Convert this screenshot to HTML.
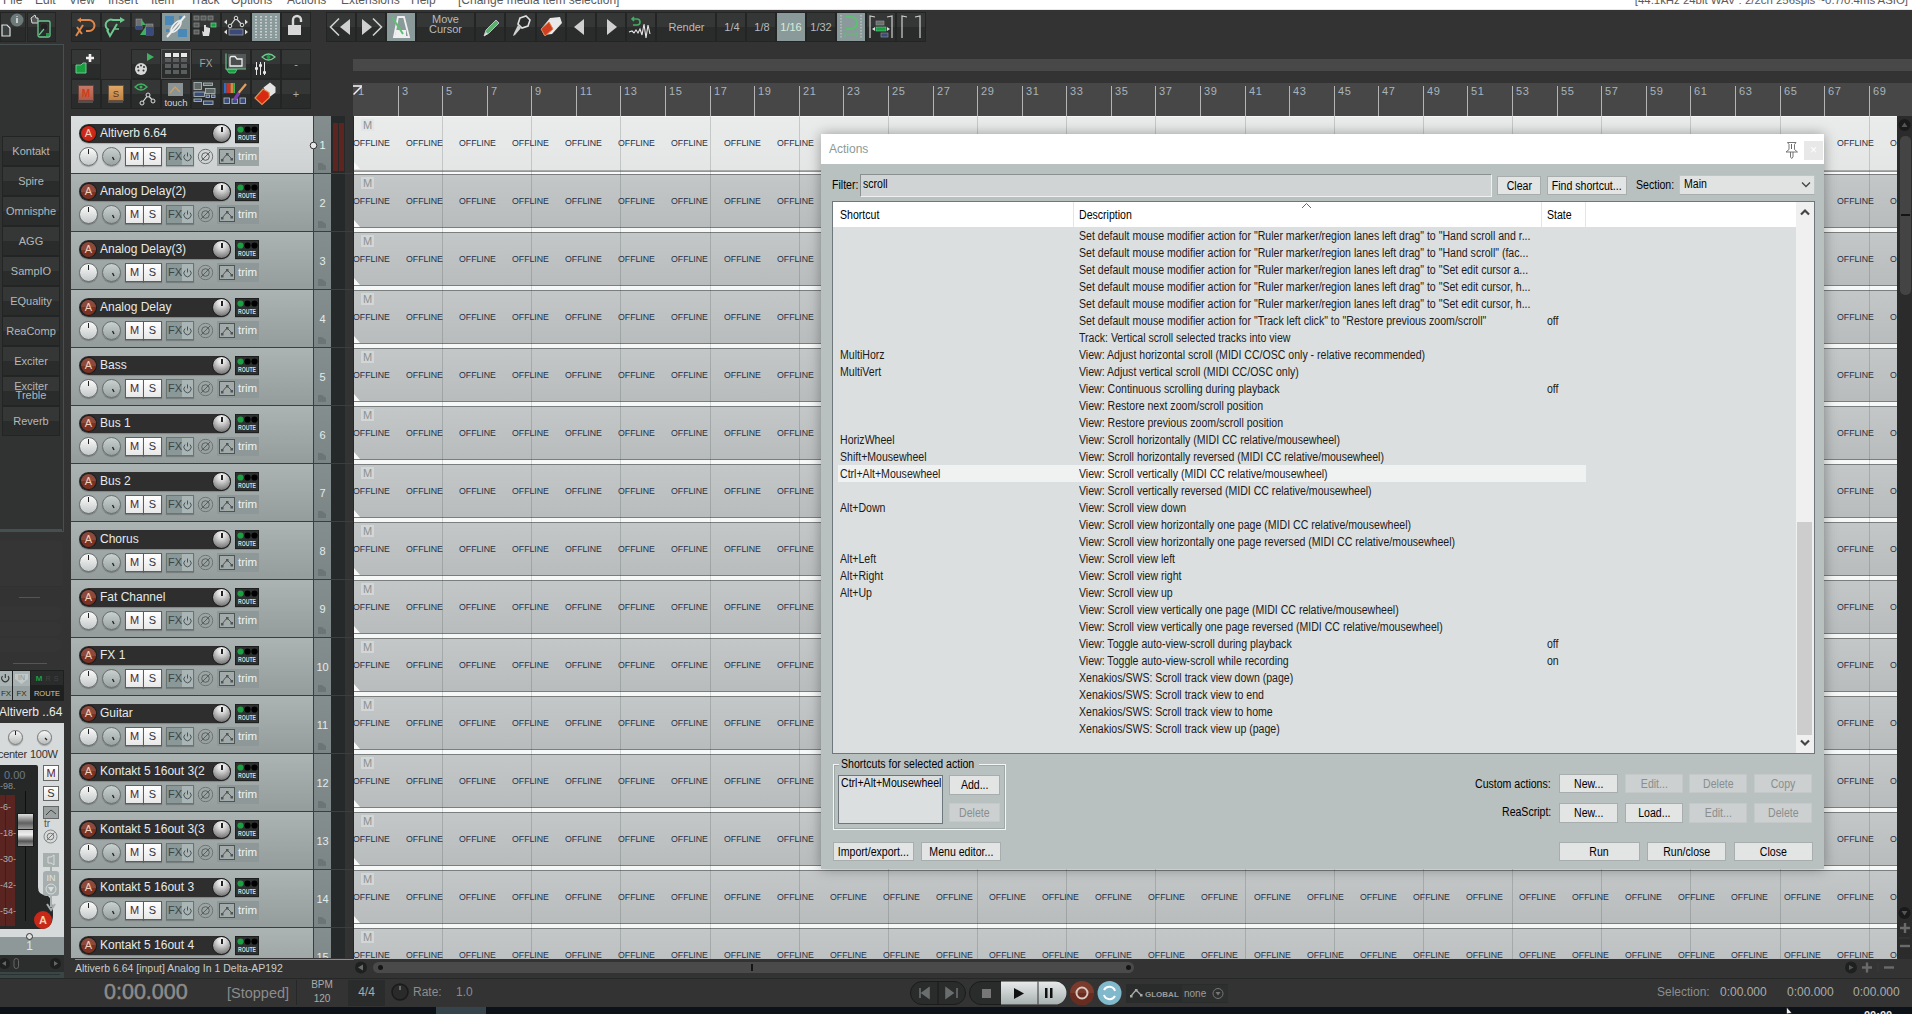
<!DOCTYPE html><html><head><meta charset="utf-8"><style>
*{box-sizing:border-box;margin:0;padding:0}
html,body{width:1912px;height:1014px;overflow:hidden;background:#333;font-family:"Liberation Sans",sans-serif;}
.a{position:absolute}
.tb{position:absolute;background:linear-gradient(#353636 0,#353636 50%,#2a2b2b 50%,#2a2b2b 100%);border:1px solid #232424}
.tbh{background:#8a9a9b}
.t{position:absolute;white-space:nowrap}
</style></head><body>

<div class="a" style="left:0;top:0;width:1912px;height:9px;background:#fff"></div>
<div class="a" style="left:0;top:9px;width:1912px;height:1px;background:#e8e8e8"></div>
<div class="t" style="left:3px;top:-7px;font-size:12px;line-height:14px;color:#5a5a5a">File</div>
<div class="t" style="left:35px;top:-7px;font-size:12px;line-height:14px;color:#5a5a5a">Edit</div>
<div class="t" style="left:69px;top:-7px;font-size:12px;line-height:14px;color:#5a5a5a">View</div>
<div class="t" style="left:108px;top:-7px;font-size:12px;line-height:14px;color:#5a5a5a">Insert</div>
<div class="t" style="left:151px;top:-7px;font-size:12px;line-height:14px;color:#5a5a5a">Item</div>
<div class="t" style="left:190px;top:-7px;font-size:12px;line-height:14px;color:#5a5a5a">Track</div>
<div class="t" style="left:231px;top:-7px;font-size:12px;line-height:14px;color:#5a5a5a">Options</div>
<div class="t" style="left:287px;top:-7px;font-size:12px;line-height:14px;color:#5a5a5a">Actions</div>
<div class="t" style="left:341px;top:-7px;font-size:12px;line-height:14px;color:#5a5a5a">Extensions</div>
<div class="t" style="left:411px;top:-7px;font-size:12px;line-height:14px;color:#5a5a5a">Help</div>
<div class="t" style="left:458px;top:-7px;font-size:12px;line-height:14px;color:#5a5a5a">[Change media item selection]</div>
<div class="t" style="right:4px;top:-7px;font-size:11.4px;line-height:14px;color:#5a5a5a">[44.1kHz 24bit WAV : 2/2ch 256spls ~0.7/0.4ms ASIO]</div>
<div class="tb" style="left:0px;top:12px;width:26px;height:30px"></div>
<div class="tb" style="left:27px;top:12px;width:29px;height:30px"></div>
<div class="tb" style="left:71px;top:12px;width:30px;height:30px"></div>
<div class="tb" style="left:101px;top:12px;width:30px;height:30px"></div>
<div class="tb" style="left:131px;top:12px;width:30px;height:30px"></div>
<div class="tb tbh" style="left:161px;top:12px;width:30px;height:30px"></div>
<div class="tb" style="left:191px;top:12px;width:30px;height:30px"></div>
<div class="tb" style="left:221px;top:12px;width:30px;height:30px"></div>
<div class="tb tbh" style="left:251px;top:12px;width:30px;height:30px"></div>
<div class="tb" style="left:281px;top:12px;width:30px;height:30px"></div>
<div class="tb" style="left:326px;top:12px;width:30px;height:30px"></div>
<div class="tb" style="left:356px;top:12px;width:30px;height:30px"></div>
<div class="tb tbh" style="left:386px;top:12px;width:30px;height:30px"></div>
<div class="tb" style="left:416px;top:12px;width:59px;height:30px"></div>
<div class="tb" style="left:475px;top:12px;width:30px;height:30px"></div>
<div class="tb" style="left:505px;top:12px;width:31px;height:30px"></div>
<div class="tb" style="left:536px;top:12px;width:30px;height:30px"></div>
<div class="tb" style="left:566px;top:12px;width:30px;height:30px"></div>
<div class="tb" style="left:596px;top:12px;width:30px;height:30px"></div>
<div class="tb" style="left:626px;top:12px;width:30px;height:30px"></div>
<div class="tb" style="left:656px;top:12px;width:60px;height:30px"></div>
<div class="tb" style="left:716px;top:12px;width:30px;height:30px"></div>
<div class="tb" style="left:746px;top:12px;width:30px;height:30px"></div>
<div class="tb tbh" style="left:776px;top:12px;width:30px;height:30px"></div>
<div class="tb" style="left:806px;top:12px;width:30px;height:30px"></div>
<div class="tb tbh" style="left:836px;top:12px;width:30px;height:30px"></div>
<div class="tb" style="left:866px;top:12px;width:30px;height:30px"></div>
<div class="tb" style="left:896px;top:12px;width:30px;height:30px"></div>
<div class="tb" style="left:71px;top:49px;width:30px;height:30px"></div>
<div class="tb" style="left:71px;top:79px;width:30px;height:30px"></div>
<div class="tb" style="left:101px;top:79px;width:30px;height:30px"></div>
<div class="tb" style="left:131px;top:49px;width:30px;height:30px"></div>
<div class="tb" style="left:131px;top:79px;width:30px;height:30px"></div>
<div class="tb" style="left:161px;top:49px;width:30px;height:30px"></div>
<div class="tb" style="left:161px;top:79px;width:30px;height:30px"></div>
<div class="tb" style="left:191px;top:49px;width:30px;height:30px"></div>
<div class="tb" style="left:191px;top:79px;width:30px;height:30px"></div>
<div class="tb" style="left:221px;top:49px;width:30px;height:30px"></div>
<div class="tb" style="left:221px;top:79px;width:30px;height:30px"></div>
<div class="tb" style="left:251px;top:49px;width:30px;height:30px"></div>
<div class="tb" style="left:251px;top:79px;width:30px;height:30px"></div>
<div class="tb" style="left:281px;top:49px;width:30px;height:30px"></div>
<div class="tb" style="left:281px;top:79px;width:30px;height:30px"></div>
<svg class="a" style="left:0px;top:12px" width="26" height="30" viewBox="0 0 26 30"><path d="M2 13 H7 L10 16 V24 H2 Z" fill="#3a3f40" stroke="#e0e0e0" stroke-width="1.2"/><circle cx="17" cy="8" r="6.5" fill="#6c7a7a"/><path d="M17 6 V11 M17 4 V4.8" stroke="#eee" stroke-width="1.4"/></svg>
<svg class="a" style="left:27px;top:12px" width="29" height="30" viewBox="0 0 29 30"><path d="M4 6 L8 3 L9 6 L11 6 L11 11 L5 11 Z" fill="#555" stroke="#ddd" stroke-width="1"/><rect x="11" y="9" width="12" height="16" rx="1.5" fill="#2a2c2c" stroke="#6cc890" stroke-width="1.3"/><circle cx="17" cy="15" r="4" fill="#222" stroke="#333"/><path d="M12 23 L17 17" stroke="#6cc890" stroke-width="1.2"/><rect x="19" y="21" width="3" height="3" fill="#18a040"/></svg>
<svg class="a" style="left:71px;top:12px" width="30" height="30" viewBox="0 0 30 30"><path d="M9 8 H18 A5.5 5.5 0 0 1 18 19 H15" stroke="#e0884a" stroke-width="2" fill="none"/><path d="M6 8 L10 5.5 L10 10.5Z" fill="#e0884a"/><path d="M5 24 L12 13 M6 15 L11 22" stroke="#e0884a" stroke-width="2"/></svg>
<svg class="a" style="left:101px;top:12px" width="30" height="30" viewBox="0 0 30 30"><path d="M20 8 H12 A5 5 0 0 0 8 18" stroke="#70c890" stroke-width="2" fill="none"/><path d="M24 8 L19 5 L19 11Z" fill="#70c890"/><path d="M6 18 L9 24 L16 12" stroke="#70c890" stroke-width="2" fill="none"/><path d="M14 17 H18" stroke="#70c890" stroke-width="1.5"/></svg>
<svg class="a" style="left:131px;top:12px" width="30" height="30" viewBox="0 0 30 30"><rect x="5" y="7" width="6" height="10" fill="#6a7070" stroke="#999" stroke-width="0.6"/><rect x="5" y="14" width="6" height="3" fill="#3a4a7a"/><path d="M10 7 L15 13 L10 13Z" fill="#40b060"/><rect x="15" y="12" width="7" height="11" fill="#6a7070" stroke="#999" stroke-width="0.6"/><rect x="15" y="15" width="7" height="8" fill="#3a4a7a"/><path d="M15 14 L15 23 L9 23Z" fill="#40b060"/></svg>
<svg class="a" style="left:161px;top:12px" width="30" height="30" viewBox="0 0 30 30"><rect x="4" y="4" width="9" height="9" fill="#4a88b8"/><rect x="17" y="17" width="9" height="8" fill="#4a88b8"/><rect x="18" y="4" width="3" height="3" fill="#4a88b8"/><rect x="5" y="17" width="3" height="3" fill="#4a88b8"/><path d="M6 25 L24 4" stroke="#eee" stroke-width="2"/><ellipse cx="15" cy="14.5" rx="3" ry="7" transform="rotate(40 15 14.5)" fill="none" stroke="#eee" stroke-width="1.6"/></svg>
<svg class="a" style="left:191px;top:12px" width="30" height="30" viewBox="0 0 30 30"><g fill="#555a5a" stroke="#888" stroke-width="0.8"><rect x="3" y="4" width="5" height="4"/><rect x="10" y="4" width="5" height="4"/><rect x="17" y="4" width="5" height="4"/><rect x="3" y="11" width="5" height="4"/><rect x="3" y="18" width="5" height="4"/></g><rect x="20" y="11" width="5" height="4" fill="#18a040" stroke="#6cc890" stroke-width="0.8"/><path d="M13 13 V20 L11 19 L12 24 H18 L19 19 V16 L15 15 V13 Z" fill="#ddd"/></svg>
<svg class="a" style="left:221px;top:12px" width="30" height="30" viewBox="0 0 30 30"><path d="M3 10 L6 7.5 V12.5Z M27 10 L24 7.5 V12.5Z M3 20 L6 17.5 V22.5Z M27 20 L24 17.5 V22.5Z" fill="#ddd"/><path d="M9 14 L15 6 L21 13" stroke="#ddd" fill="none" stroke-width="1.2"/><circle cx="9" cy="14" r="1.8" fill="#333" stroke="#ddd"/><circle cx="15" cy="6" r="1.8" fill="#333" stroke="#ddd"/><circle cx="21" cy="13" r="1.8" fill="#333" stroke="#ddd"/><rect x="8" y="17" width="14" height="6" fill="#3a4a7a" stroke="#999" stroke-width="0.8"/></svg>
<svg class="a" style="left:251px;top:12px" width="30" height="30" viewBox="0 0 30 30"><g stroke="#f0f0f0" stroke-width="1.2" stroke-dasharray="1.5 1.5"><path d="M5 4 V26 M10 4 V26 M15 4 V26 M20 4 V26 M25 4 V26"/></g></svg>
<svg class="a" style="left:281px;top:12px" width="30" height="30" viewBox="0 0 30 30"><path d="M12 13 V8 A4 4 0 0 1 20 8 V10" stroke="#d8d8d8" stroke-width="2.4" fill="none"/><rect x="7" y="13" width="13" height="10" fill="#d8d8d8"/></svg>
<svg class="a" style="left:326px;top:12px" width="30" height="30" viewBox="0 0 30 30"><path d="M13 6.5 L4.5 15 L13 23.5" stroke="#d0d0d0" stroke-width="1.6" fill="none"/><path d="M14 15 L24 7 V23 Z" fill="#d0d0d0"/></svg>
<svg class="a" style="left:356px;top:12px" width="30" height="30" viewBox="0 0 30 30"><path d="M6 7 L16 15 L6 23 Z" fill="#d0d0d0"/><path d="M17 6.5 L25.5 15 L17 23.5" stroke="#d0d0d0" stroke-width="1.6" fill="none"/></svg>
<svg class="a" style="left:386px;top:12px" width="30" height="30" viewBox="0 0 30 30"><path d="M12 5 H18 L23 25 H8 Z" fill="none" stroke="#f0f0f0" stroke-width="1.8"/><path d="M10 18 H20 V24 H9Z" fill="#f0f0f0"/><path d="M6 5 L17 22" stroke="#5cc070" stroke-width="2"/></svg>
<div class="t" style="left:416px;top:14px;width:59px;text-align:center;font-size:11px;line-height:10px;color:#b8bcbc">Move<br>Cursor</div>
<svg class="a" style="left:476px;top:12px" width="30" height="30" viewBox="0 0 30 30"><path d="M8 24 L10 18 L20 8 L23 11 L13 21 Z" fill="#5cb070" stroke="#dce" stroke-width="0.8"/><path d="M8 24 L10 20 L12 22Z" fill="#ddd"/></svg>
<svg class="a" style="left:506px;top:12px" width="30" height="30" viewBox="0 0 30 30"><path d="M14 6 L20 4 L24 8 L22 14 L16 16 L12 12 Z" fill="#2b2c2c" stroke="#e0e0e0" stroke-width="1.6"/><path d="M12 13 L15 16 L9 23 L7 24 L8 21 Z" fill="#d0d0d0"/></svg>
<svg class="a" style="left:536px;top:12px" width="30" height="30" viewBox="0 0 30 30"><path d="M14 6 L24 5 L26 11 L16 22 L8 23 L5 17 Z" fill="#e8e8e8"/><path d="M5 17 L13 10 L17 17 L9 24 Z" fill="#d04020" stroke="#e08050" stroke-width="1"/></svg>
<svg class="a" style="left:566px;top:12px" width="30" height="30" viewBox="0 0 30 30"><path d="M8 15 L18 7 V23 Z" fill="#d0d0d0"/></svg>
<svg class="a" style="left:596px;top:12px" width="30" height="30" viewBox="0 0 30 30"><path d="M11 7 L21 15 L11 23 Z" fill="#d0d0d0"/></svg>
<svg class="a" style="left:626px;top:12px" width="30" height="30" viewBox="0 0 30 30"><path d="M8 5 L6 7 L8 9 M6 7 H11 A3 3 0 0 1 11 13 H7" stroke="#40b060" stroke-width="1.6" fill="none"/><path d="M3 20 L6 19 L8 21 L10 18 L12 21 L14 17 L16 23 L18 12 L20 26 L22 13 L24 22" stroke="#e8e8e8" stroke-width="1.1" fill="none"/></svg>
<div class="t" style="left:657px;top:12px;width:59px;text-align:center;font-size:11px;line-height:30px;color:#b8bcbc">Render</div>
<div class="t" style="left:717px;top:12px;width:30px;text-align:center;font-size:11px;line-height:30px;color:#b8bcbc">1/4</div>
<div class="t" style="left:747px;top:12px;width:30px;text-align:center;font-size:11px;line-height:30px;color:#b8bcbc">1/8</div>
<div class="t" style="left:776px;top:12px;width:30px;text-align:center;font-size:11px;line-height:30px;color:#d8ecd8">1/16</div>
<div class="t" style="left:806px;top:12px;width:30px;text-align:center;font-size:11px;line-height:30px;color:#b8bcbc">1/32</div>
<svg class="a" style="left:836px;top:12px" width="30" height="30" viewBox="0 0 30 30"><path d="M5 3 V27 M25 3 V27" stroke="#d8e0e0" stroke-width="0.8" stroke-dasharray="1.5 1.5"/><path d="M10 5 H15 A6 6 0 0 1 15 17 H10" stroke="#5cc070" stroke-width="2.2" fill="none"/><path d="M9 23 H21 M9 20 V26 M21 20 V26" stroke="#5cc070" stroke-width="0.9"/></svg>
<svg class="a" style="left:866px;top:12px" width="30" height="30" viewBox="0 0 30 30"><path d="M4 26 V4 L9 5 M26 26 V4 L21 5" stroke="#d0d0d0" stroke-width="1.2" fill="none"/><rect x="10" y="9" width="8" height="4" fill="#6a7070" stroke="#999" stroke-width="0.6"/><rect x="10" y="15" width="10" height="4" fill="#18a040" stroke="#6cc890" stroke-width="0.6"/><rect x="15" y="21" width="7" height="4" fill="#3a4a7a" stroke="#999" stroke-width="0.6"/><path d="M6 17 L9 15 V19Z M24 17 L21 15 V19Z" fill="#ddd"/></svg>
<svg class="a" style="left:896px;top:12px" width="30" height="30" viewBox="0 0 30 30"><path d="M6 26 V4 L11 5 M24 26 V4 L19 5" stroke="#d0d0d0" stroke-width="1.2" fill="none"/></svg>
<svg class="a" style="left:71px;top:49px" width="30" height="30" viewBox="0 0 30 30"><path d="M5 16 H10 L12 14 H15 V24 H5Z" fill="#18a040" stroke="#6cc890" stroke-width="1"/><path d="M19 5 V13 M15 9 H23" stroke="#f0f0f0" stroke-width="2.6"/></svg>
<svg class="a" style="left:131px;top:49px" width="30" height="30" viewBox="0 0 30 30"><path d="M16 4 V12 L23 8Z" fill="#40b060"/><circle cx="10" cy="20" r="6" fill="#d8d8d8"/><g fill="#333"><circle cx="7" cy="18" r="1"/><circle cx="10" cy="16.5" r="1"/><circle cx="13" cy="18" r="1"/><circle cx="7.5" cy="21.5" r="1"/><circle cx="12.5" cy="21.5" r="1"/></g></svg>
<div class="a" style="left:161px;top:49px;width:30px;height:30px;border:1px solid #555"></div>
<svg class="a" style="left:161px;top:49px" width="30" height="30" viewBox="0 0 30 30"><g fill="#5a5e5e"><rect x="4" y="9" width="6" height="4"/><rect x="12" y="9" width="6" height="4"/><rect x="20" y="9" width="6" height="4"/><rect x="4" y="15" width="6" height="4"/><rect x="12" y="15" width="6" height="4"/><rect x="20" y="15" width="6" height="4"/><rect x="4" y="21" width="6" height="4"/><rect x="12" y="21" width="6" height="4"/><rect x="20" y="21" width="6" height="4"/></g><g fill="#e8e8e8"><rect x="4" y="4" width="6" height="4"/><rect x="12" y="4" width="6" height="4"/><rect x="20" y="4" width="6" height="4"/></g></svg>
<div class="t" style="left:191px;top:49px;width:30px;text-align:center;font-size:10px;line-height:30px;color:#a0a4a4">FX</div>
<svg class="a" style="left:221px;top:49px" width="30" height="30" viewBox="0 0 30 30"><rect x="7" y="5" width="18" height="15" fill="#555858"/><path d="M9 17 V9 Q9 7.5 10.5 7.5 H14 L16 10 H21 V17 Z" fill="#4a4e4e" stroke="#eeeeee" stroke-width="1.3"/><path d="M5 4.5 V20 H25" stroke="#70c890" stroke-width="1.1" fill="none"/><path d="M5.5 20.5 H16 L14 24 H8 Z" fill="#18a040" stroke="#70c890" stroke-width="0.8"/></svg>
<svg class="a" style="left:251px;top:49px" width="30" height="30" viewBox="0 0 30 30"><path d="M11 8 Q17.5 2 24 8 Q17.5 14 11 8Z" fill="none" stroke="#70c890" stroke-width="1.2"/><circle cx="17.5" cy="8" r="2" fill="#18a040"/><path d="M5.5 13 V26 M9.5 13 V26 M13.5 13 V26" stroke="#e8e8e8" stroke-width="1"/><g fill="#e8e8e8"><rect x="4" y="18" width="3" height="3" rx="1"/><rect x="8" y="15" width="3" height="3" rx="1"/><rect x="12" y="22" width="3" height="3" rx="1"/></g></svg>
<div class="t" style="left:281px;top:49px;width:30px;text-align:center;font-size:11px;line-height:30px;color:#a8acac">-</div>
<svg class="a" style="left:71px;top:79px" width="30" height="30" viewBox="0 0 30 30"><defs><linearGradient id="mg" x1="0" y1="0" x2="0" y2="1"><stop offset="0" stop-color="#c87a68"/><stop offset="1" stop-color="#a85a48"/></linearGradient><linearGradient id="sg" x1="0" y1="0" x2="0" y2="1"><stop offset="0" stop-color="#e0a868"/><stop offset="1" stop-color="#c08040"/></linearGradient></defs><rect x="7.5" y="6.5" width="15" height="15" fill="url(#mg)" stroke="#6a4038" stroke-width="1"/><text x="15" y="18" font-family="Liberation Sans" font-size="10" font-weight="bold" text-anchor="middle" fill="#d83818">M</text><path d="M7 23 H22" stroke="#777" stroke-width="1"/></svg>
<svg class="a" style="left:101px;top:79px" width="30" height="30" viewBox="0 0 30 30"><rect x="7.5" y="6.5" width="15" height="15" fill="url(#sg)" stroke="#6a5038" stroke-width="1"/><text x="15" y="18" font-family="Liberation Sans" font-size="9.5" text-anchor="middle" fill="#5a3020">S</text><path d="M7 23 H22" stroke="#777" stroke-width="1"/></svg>
<svg class="a" style="left:131px;top:79px" width="30" height="30" viewBox="0 0 30 30"><path d="M4 8 Q10 2 16 8 Q10 14 4 8Z" fill="none" stroke="#40b060" stroke-width="1.4"/><circle cx="10" cy="8" r="1.5" fill="#40b060"/><path d="M11 24 L17 16 L22 22" stroke="#ddd" fill="none" stroke-width="1.2"/><circle cx="11" cy="24" r="2" fill="#333" stroke="#ddd"/><circle cx="17" cy="16" r="2" fill="#333" stroke="#ddd"/><circle cx="22" cy="22" r="2" fill="#333" stroke="#ddd"/></svg>
<svg class="a" style="left:161px;top:79px" width="30" height="30" viewBox="0 0 30 30"><rect x="7" y="4" width="15" height="13" fill="#8a9494"/><path d="M9 14 L14 8 L19 13" stroke="#c8a070" stroke-width="1.3" fill="none"/></svg>
<div class="t" style="left:161px;top:98px;width:30px;text-align:center;font-size:9.5px;line-height:10px;color:#d0d4d4">touch</div>
<svg class="a" style="left:191px;top:79px" width="30" height="30" viewBox="0 0 30 30"><g stroke="#a8b4b4" stroke-width="0.9"><rect x="3" y="3.5" width="7.5" height="7" fill="#5e6666"/><rect x="12.5" y="4" width="9" height="2.5" fill="#5e6666"/><rect x="14.5" y="9.5" width="9.5" height="5" fill="#5e6666"/><rect x="3" y="13" width="10.5" height="4.5" fill="#3a4a7a"/><rect x="15" y="16" width="3.5" height="2.5" fill="#3a4a7a"/><rect x="20.5" y="16" width="3.5" height="2.5" fill="#3a4a7a"/><rect x="3" y="20" width="7.5" height="2.5" fill="#3a4a7a"/><rect x="12.5" y="22" width="9.5" height="3.5" fill="#3a4a7a"/></g></svg>
<svg class="a" style="left:221px;top:79px" width="30" height="30" viewBox="0 0 30 30"><rect x="3" y="4" width="2.5" height="10" fill="#2a70c8"/><rect x="5.5" y="4" width="4" height="10" fill="#d03020"/><rect x="9.5" y="4" width="3" height="10" fill="#d88840"/><rect x="12.5" y="4" width="1.5" height="10" fill="#40b050"/><g fill="#3a4a7a" stroke="#a8b4b4" stroke-width="0.9"><rect x="3" y="19" width="5.5" height="5.5"/><rect x="11" y="20" width="5.5" height="4.5"/><rect x="19" y="19" width="5.5" height="5.5"/></g><path d="M17.5 14 L25 5" stroke="#e0a060" stroke-width="2.2"/><path d="M13 21 L18 14" stroke="#7a40b0" stroke-width="3.2"/></svg>
<svg class="a" style="left:251px;top:79px" width="30" height="30" viewBox="0 0 30 30"><path d="M12.5 8.5 L19 3.5 L24.5 8 V13.5 L18 18.5 Z" fill="#e4e4e4"/><path d="M4 19 L12 10 L18 13.5 L18.5 18.5 L11 25.5 Z" fill="#d82a10" stroke="#e09050" stroke-width="1.2"/></svg>
<div class="t" style="left:281px;top:79px;width:30px;text-align:center;font-size:11px;line-height:30px;color:#a8acac">+</div>
<div class="a" style="left:353px;top:59px;width:1559px;height:12px;background:#484848"></div>
<div class="a" style="left:353px;top:83px;width:1559px;height:33px;background:#474747"></div>
<div class="a" style="left:353px;top:83px;width:1559px;height:33px;overflow:hidden">
<div class="a" style="left:45px;top:3px;width:1px;height:30px;background:#b4b4b4"></div>
<div class="t" style="left:49px;top:2px;font-size:11px;line-height:13px;letter-spacing:0.6px;color:#a8b4bc">3</div>
<div class="a" style="left:89px;top:3px;width:1px;height:30px;background:#b4b4b4"></div>
<div class="t" style="left:93px;top:2px;font-size:11px;line-height:13px;letter-spacing:0.6px;color:#a8b4bc">5</div>
<div class="a" style="left:134px;top:3px;width:1px;height:30px;background:#b4b4b4"></div>
<div class="t" style="left:138px;top:2px;font-size:11px;line-height:13px;letter-spacing:0.6px;color:#a8b4bc">7</div>
<div class="a" style="left:178px;top:3px;width:1px;height:30px;background:#b4b4b4"></div>
<div class="t" style="left:182px;top:2px;font-size:11px;line-height:13px;letter-spacing:0.6px;color:#a8b4bc">9</div>
<div class="a" style="left:223px;top:3px;width:1px;height:30px;background:#b4b4b4"></div>
<div class="t" style="left:227px;top:2px;font-size:11px;line-height:13px;letter-spacing:0.6px;color:#a8b4bc">11</div>
<div class="a" style="left:267px;top:3px;width:1px;height:30px;background:#b4b4b4"></div>
<div class="t" style="left:271px;top:2px;font-size:11px;line-height:13px;letter-spacing:0.6px;color:#a8b4bc">13</div>
<div class="a" style="left:312px;top:3px;width:1px;height:30px;background:#b4b4b4"></div>
<div class="t" style="left:316px;top:2px;font-size:11px;line-height:13px;letter-spacing:0.6px;color:#a8b4bc">15</div>
<div class="a" style="left:357px;top:3px;width:1px;height:30px;background:#b4b4b4"></div>
<div class="t" style="left:361px;top:2px;font-size:11px;line-height:13px;letter-spacing:0.6px;color:#a8b4bc">17</div>
<div class="a" style="left:401px;top:3px;width:1px;height:30px;background:#b4b4b4"></div>
<div class="t" style="left:405px;top:2px;font-size:11px;line-height:13px;letter-spacing:0.6px;color:#a8b4bc">19</div>
<div class="a" style="left:446px;top:3px;width:1px;height:30px;background:#b4b4b4"></div>
<div class="t" style="left:450px;top:2px;font-size:11px;line-height:13px;letter-spacing:0.6px;color:#a8b4bc">21</div>
<div class="a" style="left:490px;top:3px;width:1px;height:30px;background:#b4b4b4"></div>
<div class="t" style="left:494px;top:2px;font-size:11px;line-height:13px;letter-spacing:0.6px;color:#a8b4bc">23</div>
<div class="a" style="left:535px;top:3px;width:1px;height:30px;background:#b4b4b4"></div>
<div class="t" style="left:539px;top:2px;font-size:11px;line-height:13px;letter-spacing:0.6px;color:#a8b4bc">25</div>
<div class="a" style="left:580px;top:3px;width:1px;height:30px;background:#b4b4b4"></div>
<div class="t" style="left:584px;top:2px;font-size:11px;line-height:13px;letter-spacing:0.6px;color:#a8b4bc">27</div>
<div class="a" style="left:624px;top:3px;width:1px;height:30px;background:#b4b4b4"></div>
<div class="t" style="left:628px;top:2px;font-size:11px;line-height:13px;letter-spacing:0.6px;color:#a8b4bc">29</div>
<div class="a" style="left:669px;top:3px;width:1px;height:30px;background:#b4b4b4"></div>
<div class="t" style="left:673px;top:2px;font-size:11px;line-height:13px;letter-spacing:0.6px;color:#a8b4bc">31</div>
<div class="a" style="left:713px;top:3px;width:1px;height:30px;background:#b4b4b4"></div>
<div class="t" style="left:717px;top:2px;font-size:11px;line-height:13px;letter-spacing:0.6px;color:#a8b4bc">33</div>
<div class="a" style="left:758px;top:3px;width:1px;height:30px;background:#b4b4b4"></div>
<div class="t" style="left:762px;top:2px;font-size:11px;line-height:13px;letter-spacing:0.6px;color:#a8b4bc">35</div>
<div class="a" style="left:802px;top:3px;width:1px;height:30px;background:#b4b4b4"></div>
<div class="t" style="left:806px;top:2px;font-size:11px;line-height:13px;letter-spacing:0.6px;color:#a8b4bc">37</div>
<div class="a" style="left:847px;top:3px;width:1px;height:30px;background:#b4b4b4"></div>
<div class="t" style="left:851px;top:2px;font-size:11px;line-height:13px;letter-spacing:0.6px;color:#a8b4bc">39</div>
<div class="a" style="left:892px;top:3px;width:1px;height:30px;background:#b4b4b4"></div>
<div class="t" style="left:896px;top:2px;font-size:11px;line-height:13px;letter-spacing:0.6px;color:#a8b4bc">41</div>
<div class="a" style="left:936px;top:3px;width:1px;height:30px;background:#b4b4b4"></div>
<div class="t" style="left:940px;top:2px;font-size:11px;line-height:13px;letter-spacing:0.6px;color:#a8b4bc">43</div>
<div class="a" style="left:981px;top:3px;width:1px;height:30px;background:#b4b4b4"></div>
<div class="t" style="left:985px;top:2px;font-size:11px;line-height:13px;letter-spacing:0.6px;color:#a8b4bc">45</div>
<div class="a" style="left:1025px;top:3px;width:1px;height:30px;background:#b4b4b4"></div>
<div class="t" style="left:1029px;top:2px;font-size:11px;line-height:13px;letter-spacing:0.6px;color:#a8b4bc">47</div>
<div class="a" style="left:1070px;top:3px;width:1px;height:30px;background:#b4b4b4"></div>
<div class="t" style="left:1074px;top:2px;font-size:11px;line-height:13px;letter-spacing:0.6px;color:#a8b4bc">49</div>
<div class="a" style="left:1114px;top:3px;width:1px;height:30px;background:#b4b4b4"></div>
<div class="t" style="left:1118px;top:2px;font-size:11px;line-height:13px;letter-spacing:0.6px;color:#a8b4bc">51</div>
<div class="a" style="left:1159px;top:3px;width:1px;height:30px;background:#b4b4b4"></div>
<div class="t" style="left:1163px;top:2px;font-size:11px;line-height:13px;letter-spacing:0.6px;color:#a8b4bc">53</div>
<div class="a" style="left:1204px;top:3px;width:1px;height:30px;background:#b4b4b4"></div>
<div class="t" style="left:1208px;top:2px;font-size:11px;line-height:13px;letter-spacing:0.6px;color:#a8b4bc">55</div>
<div class="a" style="left:1248px;top:3px;width:1px;height:30px;background:#b4b4b4"></div>
<div class="t" style="left:1252px;top:2px;font-size:11px;line-height:13px;letter-spacing:0.6px;color:#a8b4bc">57</div>
<div class="a" style="left:1293px;top:3px;width:1px;height:30px;background:#b4b4b4"></div>
<div class="t" style="left:1297px;top:2px;font-size:11px;line-height:13px;letter-spacing:0.6px;color:#a8b4bc">59</div>
<div class="a" style="left:1337px;top:3px;width:1px;height:30px;background:#b4b4b4"></div>
<div class="t" style="left:1341px;top:2px;font-size:11px;line-height:13px;letter-spacing:0.6px;color:#a8b4bc">61</div>
<div class="a" style="left:1382px;top:3px;width:1px;height:30px;background:#b4b4b4"></div>
<div class="t" style="left:1386px;top:2px;font-size:11px;line-height:13px;letter-spacing:0.6px;color:#a8b4bc">63</div>
<div class="a" style="left:1427px;top:3px;width:1px;height:30px;background:#b4b4b4"></div>
<div class="t" style="left:1431px;top:2px;font-size:11px;line-height:13px;letter-spacing:0.6px;color:#a8b4bc">65</div>
<div class="a" style="left:1471px;top:3px;width:1px;height:30px;background:#b4b4b4"></div>
<div class="t" style="left:1475px;top:2px;font-size:11px;line-height:13px;letter-spacing:0.6px;color:#a8b4bc">67</div>
<div class="a" style="left:1516px;top:3px;width:1px;height:30px;background:#b4b4b4"></div>
<div class="t" style="left:1520px;top:2px;font-size:11px;line-height:13px;letter-spacing:0.6px;color:#a8b4bc">69</div>
<div class="t" style="left:5px;top:2px;font-size:11px;line-height:13px;color:#a8b4bc">1</div>
<svg class="a" style="left:0;top:2px" width="10" height="10"><path d="M0.5 9.5 L8.5 1.5" stroke="#f0f0f0" stroke-width="1.5"/><path d="M0 1 H9" stroke="#f0f0f0" stroke-width="1.6"/></svg>
</div>
<div class="a" style="left:0;top:44px;width:64px;height:488px;border:1px solid #465050;border-left:none;background:#313232"></div>
<div class="tb" style="left:2px;top:136px;width:58px;height:30px;color:#b4b8b8;font-size:11px;text-align:center;display:flex;align-items:center;justify-content:center;line-height:9px">Kontakt</div>
<div class="tb" style="left:2px;top:166px;width:58px;height:30px;color:#b4b8b8;font-size:11px;text-align:center;display:flex;align-items:center;justify-content:center;line-height:9px">Spire</div>
<div class="tb" style="left:2px;top:196px;width:58px;height:30px;color:#b4b8b8;font-size:11px;text-align:center;display:flex;align-items:center;justify-content:center;line-height:9px">Omnisphe</div>
<div class="tb" style="left:2px;top:226px;width:58px;height:30px;color:#b4b8b8;font-size:11px;text-align:center;display:flex;align-items:center;justify-content:center;line-height:9px">AGG</div>
<div class="tb" style="left:2px;top:256px;width:58px;height:30px;color:#b4b8b8;font-size:11px;text-align:center;display:flex;align-items:center;justify-content:center;line-height:9px">SampIO</div>
<div class="tb" style="left:2px;top:286px;width:58px;height:30px;color:#b4b8b8;font-size:11px;text-align:center;display:flex;align-items:center;justify-content:center;line-height:9px">EQuality</div>
<div class="tb" style="left:2px;top:316px;width:58px;height:30px;color:#b4b8b8;font-size:11px;text-align:center;display:flex;align-items:center;justify-content:center;line-height:9px">ReaComp</div>
<div class="tb" style="left:2px;top:346px;width:58px;height:30px;color:#b4b8b8;font-size:11px;text-align:center;display:flex;align-items:center;justify-content:center;line-height:9px">Exciter</div>
<div class="tb" style="left:2px;top:376px;width:58px;height:30px;color:#b4b8b8;font-size:11px;text-align:center;display:flex;align-items:center;justify-content:center;line-height:9px">Exciter<br>Treble</div>
<div class="tb" style="left:2px;top:406px;width:58px;height:30px;color:#b4b8b8;font-size:11px;text-align:center;display:flex;align-items:center;justify-content:center;line-height:9px">Reverb</div>
<div class="a" style="left:71px;top:116px;width:283px;height:842px;overflow:hidden">
<div class="a" style="left:0px;top:0px;width:242px;height:57px;background:linear-gradient(#dadede,#cdd1d1)"></div>
<div class="a" style="left:242px;top:0px;width:1px;height:57px;background:#3a3e3e"></div>
<div class="a" style="left:243px;top:0px;width:17px;height:57px;background:linear-gradient(#858e8e,#7c8585)"></div>
<div class="a" style="left:0px;top:57px;width:283px;height:1px;background:#3a3e3e"></div>
<div class="t" style="left:243px;top:22px;width:17px;text-align:center;font-size:11px;line-height:14px;color:#e8f4e8">1</div>
<svg class="a" style="left:245px;top:45px" width="12" height="10" viewBox="0 0 12 10"><path d="M2 9 V2 H6 L10 5 V9Z" fill="#6c7575"/></svg>
<div class="a" style="left:260px;top:0px;width:14px;height:57px;background:#262929"></div>
<svg class="a" style="left:238px;top:25px" width="9" height="9" viewBox="0 0 9 9"><circle cx="4.5" cy="4.5" r="3.3" fill="#e8e8e8" stroke="#333" stroke-width="1"/></svg>
<div class="a" style="left:262px;top:7px;width:5px;height:48px;background:#5c2520"></div>
<div class="a" style="left:268px;top:7px;width:5px;height:48px;background:#5c2520"></div>
<div class="a" style="left:8px;top:8px;width:152px;height:19px;border-radius:9.5px;background:#2e2e2e;box-shadow:0 1px 1px rgba(0,0,0,.2)"></div>
<div class="a" style="left:9px;top:9px;width:17px;height:17px;border-radius:50%;background:#1c1c1c"></div>
<div class="a" style="left:10px;top:10px;width:15px;height:15px;border-radius:50%;background:radial-gradient(circle at 50% 40%,#d83020,#b82010)"></div>
<div class="t" style="left:10px;top:10px;width:15px;text-align:center;font-size:11px;line-height:15px;color:#f0d0b8">A</div>
<div class="t" style="left:29px;top:9px;font-size:12px;line-height:17px;color:#e6eaea">Altiverb 6.64</div>
<div class="a" style="left:141px;top:8px;width:19px;height:19px;border-radius:50%;background:radial-gradient(circle at 50% 22%,#ffffff 0,#d4d4d4 30%,#8a8a8a 72%,#505050 100%);border:1px solid #1e1e1e"></div>
<div class="a" style="left:150px;top:11px;width:2px;height:5px;background:#222"></div>
<div class="a" style="left:164px;top:8px;width:24px;height:19px;background:#2e3131;border:1px solid #1e2020;box-shadow:0 1px 0 rgba(0,0,0,.15)"></div>
<svg class="a" style="left:165px;top:9px" width="22" height="17" viewBox="0 0 22 17"><circle cx="4.5" cy="4.5" r="3.1" fill="#1aa040"/><circle cx="11.5" cy="4.5" r="3.1" fill="#000"/><circle cx="18.5" cy="4.5" r="3.1" fill="#000"/><text x="11" y="15" font-family="Liberation Sans" font-size="7" font-weight="bold" text-anchor="middle" fill="#d8d8d8" textLength="18" lengthAdjust="spacingAndGlyphs">ROUTE</text></svg>
<div class="a" style="left:8px;top:31px;width:19px;height:19px;border-radius:50%;background:linear-gradient(#fafafa,#c4c8c8);border:1px solid #6a6e6e;box-shadow:0 1px 1px rgba(0,0,0,.25)"></div>
<div class="a" style="left:17px;top:33px;width:1px;height:5px;background:#222"></div>
<div class="a" style="left:31px;top:31px;width:19px;height:19px;border-radius:50%;background:linear-gradient(#c8d0d0,#9aa2a2);border:1px solid #6a6e6e;box-shadow:0 1px 1px rgba(0,0,0,.25)"></div>
<svg class="a" style="left:31px;top:31px" width="19" height="19" viewBox="0 0 19 19"><path d="M10.5 10 L12 13" stroke="#222" stroke-width="1.4"/></svg>
<div class="a" style="left:54px;top:31px;width:19px;height:19px;background:linear-gradient(#ffffff,#e8e8e8);border:1px solid #5a5e5e;box-shadow:0 1px 1px rgba(0,0,0,.2)"></div>
<div class="a" style="left:72px;top:31px;width:19px;height:19px;background:linear-gradient(#ffffff,#e8e8e8);border:1px solid #5a5e5e;box-shadow:0 1px 1px rgba(0,0,0,.2)"></div>
<div class="t" style="left:54px;top:31px;width:19px;text-align:center;font-size:11px;line-height:19px;color:#5a2222">M</div>
<div class="t" style="left:72px;top:31px;width:19px;text-align:center;font-size:11px;line-height:19px;color:#333">S</div>
<div class="a" style="left:95px;top:31px;width:28px;height:19px;background:linear-gradient(90deg,#8a9898 0,#8a9898 56%,#aab6b6 56%);border:1px solid #6a7474;box-shadow:0 1px 1px rgba(0,0,0,.2)"></div>
<div class="t" style="left:96px;top:31px;width:16px;text-align:center;font-size:11px;line-height:19px;color:#3a4444">FX</div>
<svg class="a" style="left:111px;top:34px" width="11" height="12" viewBox="0 0 11 12"><path d="M3 4.5 A3.6 3.6 0 1 0 8 4.5" fill="none" stroke="#4a5454" stroke-width="1"/><path d="M5.5 2.5 V6.5" stroke="#4a5454" stroke-width="1"/></svg>
<svg class="a" style="left:126px;top:32px" width="17" height="17" viewBox="0 0 17 17"><circle cx="8.5" cy="8.5" r="7.2" fill="none" stroke="#6e7474" stroke-width="1"/><circle cx="8.5" cy="8.5" r="3.8" fill="none" stroke="#5a6060" stroke-width="1"/><path d="M4 13 L13 4" stroke="#5a6060" stroke-width="1"/></svg>
<div class="a" style="left:146px;top:31px;width:42px;height:19px;background:#9ca4a4"></div>
<div class="a" style="left:148px;top:33px;width:16px;height:15px;background:#a2aaaa;border:1px solid #4e5555"></div>
<svg class="a" style="left:148px;top:33px" width="16" height="15" viewBox="0 0 16 15"><path d="M3 11 L8 5 L13 10" stroke="#4e5555" stroke-width="1" fill="none"/><rect x="2" y="10" width="2.5" height="2.5" fill="#4e5555"/><rect x="7" y="4" width="2.5" height="2.5" fill="#4e5555"/><rect x="11.5" y="9" width="2.5" height="2.5" fill="#4e5555"/></svg>
<div class="t" style="left:167px;top:31px;font-size:11.5px;line-height:19px;color:#eef2f2">trim</div>
<div class="a" style="left:0px;top:58px;width:242px;height:57px;background:linear-gradient(#abb3b3,#949c9c)"></div>
<div class="a" style="left:242px;top:58px;width:1px;height:57px;background:#3a3e3e"></div>
<div class="a" style="left:243px;top:58px;width:17px;height:57px;background:linear-gradient(#858e8e,#7c8585)"></div>
<div class="a" style="left:0px;top:115px;width:283px;height:1px;background:#3a3e3e"></div>
<div class="t" style="left:243px;top:80px;width:17px;text-align:center;font-size:11px;line-height:14px;color:#e0ecec">2</div>
<svg class="a" style="left:245px;top:103px" width="12" height="10" viewBox="0 0 12 10"><path d="M2 9 V2 H6 L10 5 V9Z" fill="#6c7575"/></svg>
<div class="a" style="left:260px;top:58px;width:14px;height:57px;background:#262929"></div>
<div class="a" style="left:8px;top:66px;width:152px;height:19px;border-radius:9.5px;background:#2e2e2e;box-shadow:0 1px 1px rgba(0,0,0,.2)"></div>
<div class="a" style="left:9px;top:67px;width:17px;height:17px;border-radius:50%;background:#1c1c1c"></div>
<div class="a" style="left:10px;top:68px;width:15px;height:15px;border-radius:50%;background:linear-gradient(#8c4a3c 50%,#7a3222 50%)"></div>
<div class="t" style="left:10px;top:68px;width:15px;text-align:center;font-size:11px;line-height:15px;color:#f0d0b8">A</div>
<div class="t" style="left:29px;top:67px;font-size:12px;line-height:17px;color:#e6eaea">Analog Delay(2)</div>
<div class="a" style="left:141px;top:66px;width:19px;height:19px;border-radius:50%;background:radial-gradient(circle at 50% 22%,#ffffff 0,#d4d4d4 30%,#8a8a8a 72%,#505050 100%);border:1px solid #1e1e1e"></div>
<div class="a" style="left:150px;top:69px;width:2px;height:5px;background:#222"></div>
<div class="a" style="left:164px;top:66px;width:24px;height:19px;background:#2e3131;border:1px solid #1e2020;box-shadow:0 1px 0 rgba(0,0,0,.15)"></div>
<svg class="a" style="left:165px;top:67px" width="22" height="17" viewBox="0 0 22 17"><circle cx="4.5" cy="4.5" r="3.1" fill="#1aa040"/><circle cx="11.5" cy="4.5" r="3.1" fill="#000"/><circle cx="18.5" cy="4.5" r="3.1" fill="#000"/><text x="11" y="15" font-family="Liberation Sans" font-size="7" font-weight="bold" text-anchor="middle" fill="#d8d8d8" textLength="18" lengthAdjust="spacingAndGlyphs">ROUTE</text></svg>
<div class="a" style="left:8px;top:89px;width:19px;height:19px;border-radius:50%;background:linear-gradient(#fafafa,#c4c8c8);border:1px solid #6a6e6e;box-shadow:0 1px 1px rgba(0,0,0,.25)"></div>
<div class="a" style="left:17px;top:91px;width:1px;height:5px;background:#222"></div>
<div class="a" style="left:31px;top:89px;width:19px;height:19px;border-radius:50%;background:linear-gradient(#c8d0d0,#9aa2a2);border:1px solid #6a6e6e;box-shadow:0 1px 1px rgba(0,0,0,.25)"></div>
<svg class="a" style="left:31px;top:89px" width="19" height="19" viewBox="0 0 19 19"><path d="M10.5 10 L12 13" stroke="#222" stroke-width="1.4"/></svg>
<div class="a" style="left:54px;top:89px;width:19px;height:19px;background:linear-gradient(#ffffff,#e8e8e8);border:1px solid #5a5e5e;box-shadow:0 1px 1px rgba(0,0,0,.2)"></div>
<div class="a" style="left:72px;top:89px;width:19px;height:19px;background:linear-gradient(#ffffff,#e8e8e8);border:1px solid #5a5e5e;box-shadow:0 1px 1px rgba(0,0,0,.2)"></div>
<div class="t" style="left:54px;top:89px;width:19px;text-align:center;font-size:11px;line-height:19px;color:#5a2222">M</div>
<div class="t" style="left:72px;top:89px;width:19px;text-align:center;font-size:11px;line-height:19px;color:#333">S</div>
<div class="a" style="left:95px;top:89px;width:28px;height:19px;background:linear-gradient(90deg,#8a9898 0,#8a9898 56%,#aab6b6 56%);border:1px solid #6a7474;box-shadow:0 1px 1px rgba(0,0,0,.2)"></div>
<div class="t" style="left:96px;top:89px;width:16px;text-align:center;font-size:11px;line-height:19px;color:#3a4444">FX</div>
<svg class="a" style="left:111px;top:92px" width="11" height="12" viewBox="0 0 11 12"><path d="M3 4.5 A3.6 3.6 0 1 0 8 4.5" fill="none" stroke="#4a5454" stroke-width="1"/><path d="M5.5 2.5 V6.5" stroke="#4a5454" stroke-width="1"/></svg>
<svg class="a" style="left:126px;top:90px" width="17" height="17" viewBox="0 0 17 17"><circle cx="8.5" cy="8.5" r="7.2" fill="none" stroke="#6e7474" stroke-width="1"/><circle cx="8.5" cy="8.5" r="3.8" fill="none" stroke="#5a6060" stroke-width="1"/><path d="M4 13 L13 4" stroke="#5a6060" stroke-width="1"/></svg>
<div class="a" style="left:146px;top:89px;width:42px;height:19px;background:#8e9898"></div>
<div class="a" style="left:148px;top:91px;width:16px;height:15px;background:#a2aaaa;border:1px solid #4e5555"></div>
<svg class="a" style="left:148px;top:91px" width="16" height="15" viewBox="0 0 16 15"><path d="M3 11 L8 5 L13 10" stroke="#4e5555" stroke-width="1" fill="none"/><rect x="2" y="10" width="2.5" height="2.5" fill="#4e5555"/><rect x="7" y="4" width="2.5" height="2.5" fill="#4e5555"/><rect x="11.5" y="9" width="2.5" height="2.5" fill="#4e5555"/></svg>
<div class="t" style="left:167px;top:89px;font-size:11.5px;line-height:19px;color:#eef2f2">trim</div>
<div class="a" style="left:0px;top:116px;width:242px;height:57px;background:linear-gradient(#abb3b3,#949c9c)"></div>
<div class="a" style="left:242px;top:116px;width:1px;height:57px;background:#3a3e3e"></div>
<div class="a" style="left:243px;top:116px;width:17px;height:57px;background:linear-gradient(#858e8e,#7c8585)"></div>
<div class="a" style="left:0px;top:173px;width:283px;height:1px;background:#3a3e3e"></div>
<div class="t" style="left:243px;top:138px;width:17px;text-align:center;font-size:11px;line-height:14px;color:#e0ecec">3</div>
<svg class="a" style="left:245px;top:161px" width="12" height="10" viewBox="0 0 12 10"><path d="M2 9 V2 H6 L10 5 V9Z" fill="#6c7575"/></svg>
<div class="a" style="left:260px;top:116px;width:14px;height:57px;background:#262929"></div>
<div class="a" style="left:8px;top:124px;width:152px;height:19px;border-radius:9.5px;background:#2e2e2e;box-shadow:0 1px 1px rgba(0,0,0,.2)"></div>
<div class="a" style="left:9px;top:125px;width:17px;height:17px;border-radius:50%;background:#1c1c1c"></div>
<div class="a" style="left:10px;top:126px;width:15px;height:15px;border-radius:50%;background:linear-gradient(#8c4a3c 50%,#7a3222 50%)"></div>
<div class="t" style="left:10px;top:126px;width:15px;text-align:center;font-size:11px;line-height:15px;color:#f0d0b8">A</div>
<div class="t" style="left:29px;top:125px;font-size:12px;line-height:17px;color:#e6eaea">Analog Delay(3)</div>
<div class="a" style="left:141px;top:124px;width:19px;height:19px;border-radius:50%;background:radial-gradient(circle at 50% 22%,#ffffff 0,#d4d4d4 30%,#8a8a8a 72%,#505050 100%);border:1px solid #1e1e1e"></div>
<div class="a" style="left:150px;top:127px;width:2px;height:5px;background:#222"></div>
<div class="a" style="left:164px;top:124px;width:24px;height:19px;background:#2e3131;border:1px solid #1e2020;box-shadow:0 1px 0 rgba(0,0,0,.15)"></div>
<svg class="a" style="left:165px;top:125px" width="22" height="17" viewBox="0 0 22 17"><circle cx="4.5" cy="4.5" r="3.1" fill="#1aa040"/><circle cx="11.5" cy="4.5" r="3.1" fill="#000"/><circle cx="18.5" cy="4.5" r="3.1" fill="#000"/><text x="11" y="15" font-family="Liberation Sans" font-size="7" font-weight="bold" text-anchor="middle" fill="#d8d8d8" textLength="18" lengthAdjust="spacingAndGlyphs">ROUTE</text></svg>
<div class="a" style="left:8px;top:147px;width:19px;height:19px;border-radius:50%;background:linear-gradient(#fafafa,#c4c8c8);border:1px solid #6a6e6e;box-shadow:0 1px 1px rgba(0,0,0,.25)"></div>
<div class="a" style="left:17px;top:149px;width:1px;height:5px;background:#222"></div>
<div class="a" style="left:31px;top:147px;width:19px;height:19px;border-radius:50%;background:linear-gradient(#c8d0d0,#9aa2a2);border:1px solid #6a6e6e;box-shadow:0 1px 1px rgba(0,0,0,.25)"></div>
<svg class="a" style="left:31px;top:147px" width="19" height="19" viewBox="0 0 19 19"><path d="M10.5 10 L12 13" stroke="#222" stroke-width="1.4"/></svg>
<div class="a" style="left:54px;top:147px;width:19px;height:19px;background:linear-gradient(#ffffff,#e8e8e8);border:1px solid #5a5e5e;box-shadow:0 1px 1px rgba(0,0,0,.2)"></div>
<div class="a" style="left:72px;top:147px;width:19px;height:19px;background:linear-gradient(#ffffff,#e8e8e8);border:1px solid #5a5e5e;box-shadow:0 1px 1px rgba(0,0,0,.2)"></div>
<div class="t" style="left:54px;top:147px;width:19px;text-align:center;font-size:11px;line-height:19px;color:#5a2222">M</div>
<div class="t" style="left:72px;top:147px;width:19px;text-align:center;font-size:11px;line-height:19px;color:#333">S</div>
<div class="a" style="left:95px;top:147px;width:28px;height:19px;background:linear-gradient(90deg,#8a9898 0,#8a9898 56%,#aab6b6 56%);border:1px solid #6a7474;box-shadow:0 1px 1px rgba(0,0,0,.2)"></div>
<div class="t" style="left:96px;top:147px;width:16px;text-align:center;font-size:11px;line-height:19px;color:#3a4444">FX</div>
<svg class="a" style="left:111px;top:150px" width="11" height="12" viewBox="0 0 11 12"><path d="M3 4.5 A3.6 3.6 0 1 0 8 4.5" fill="none" stroke="#4a5454" stroke-width="1"/><path d="M5.5 2.5 V6.5" stroke="#4a5454" stroke-width="1"/></svg>
<svg class="a" style="left:126px;top:148px" width="17" height="17" viewBox="0 0 17 17"><circle cx="8.5" cy="8.5" r="7.2" fill="none" stroke="#6e7474" stroke-width="1"/><circle cx="8.5" cy="8.5" r="3.8" fill="none" stroke="#5a6060" stroke-width="1"/><path d="M4 13 L13 4" stroke="#5a6060" stroke-width="1"/></svg>
<div class="a" style="left:146px;top:147px;width:42px;height:19px;background:#8e9898"></div>
<div class="a" style="left:148px;top:149px;width:16px;height:15px;background:#a2aaaa;border:1px solid #4e5555"></div>
<svg class="a" style="left:148px;top:149px" width="16" height="15" viewBox="0 0 16 15"><path d="M3 11 L8 5 L13 10" stroke="#4e5555" stroke-width="1" fill="none"/><rect x="2" y="10" width="2.5" height="2.5" fill="#4e5555"/><rect x="7" y="4" width="2.5" height="2.5" fill="#4e5555"/><rect x="11.5" y="9" width="2.5" height="2.5" fill="#4e5555"/></svg>
<div class="t" style="left:167px;top:147px;font-size:11.5px;line-height:19px;color:#eef2f2">trim</div>
<div class="a" style="left:0px;top:174px;width:242px;height:57px;background:linear-gradient(#abb3b3,#949c9c)"></div>
<div class="a" style="left:242px;top:174px;width:1px;height:57px;background:#3a3e3e"></div>
<div class="a" style="left:243px;top:174px;width:17px;height:57px;background:linear-gradient(#858e8e,#7c8585)"></div>
<div class="a" style="left:0px;top:231px;width:283px;height:1px;background:#3a3e3e"></div>
<div class="t" style="left:243px;top:196px;width:17px;text-align:center;font-size:11px;line-height:14px;color:#e0ecec">4</div>
<svg class="a" style="left:245px;top:219px" width="12" height="10" viewBox="0 0 12 10"><path d="M2 9 V2 H6 L10 5 V9Z" fill="#6c7575"/></svg>
<div class="a" style="left:260px;top:174px;width:14px;height:57px;background:#262929"></div>
<div class="a" style="left:8px;top:182px;width:152px;height:19px;border-radius:9.5px;background:#2e2e2e;box-shadow:0 1px 1px rgba(0,0,0,.2)"></div>
<div class="a" style="left:9px;top:183px;width:17px;height:17px;border-radius:50%;background:#1c1c1c"></div>
<div class="a" style="left:10px;top:184px;width:15px;height:15px;border-radius:50%;background:linear-gradient(#8c4a3c 50%,#7a3222 50%)"></div>
<div class="t" style="left:10px;top:184px;width:15px;text-align:center;font-size:11px;line-height:15px;color:#f0d0b8">A</div>
<div class="t" style="left:29px;top:183px;font-size:12px;line-height:17px;color:#e6eaea">Analog Delay</div>
<div class="a" style="left:141px;top:182px;width:19px;height:19px;border-radius:50%;background:radial-gradient(circle at 50% 22%,#ffffff 0,#d4d4d4 30%,#8a8a8a 72%,#505050 100%);border:1px solid #1e1e1e"></div>
<div class="a" style="left:150px;top:185px;width:2px;height:5px;background:#222"></div>
<div class="a" style="left:164px;top:182px;width:24px;height:19px;background:#2e3131;border:1px solid #1e2020;box-shadow:0 1px 0 rgba(0,0,0,.15)"></div>
<svg class="a" style="left:165px;top:183px" width="22" height="17" viewBox="0 0 22 17"><circle cx="4.5" cy="4.5" r="3.1" fill="#1aa040"/><circle cx="11.5" cy="4.5" r="3.1" fill="#000"/><circle cx="18.5" cy="4.5" r="3.1" fill="#000"/><text x="11" y="15" font-family="Liberation Sans" font-size="7" font-weight="bold" text-anchor="middle" fill="#d8d8d8" textLength="18" lengthAdjust="spacingAndGlyphs">ROUTE</text></svg>
<div class="a" style="left:8px;top:205px;width:19px;height:19px;border-radius:50%;background:linear-gradient(#fafafa,#c4c8c8);border:1px solid #6a6e6e;box-shadow:0 1px 1px rgba(0,0,0,.25)"></div>
<div class="a" style="left:17px;top:207px;width:1px;height:5px;background:#222"></div>
<div class="a" style="left:31px;top:205px;width:19px;height:19px;border-radius:50%;background:linear-gradient(#c8d0d0,#9aa2a2);border:1px solid #6a6e6e;box-shadow:0 1px 1px rgba(0,0,0,.25)"></div>
<svg class="a" style="left:31px;top:205px" width="19" height="19" viewBox="0 0 19 19"><path d="M10.5 10 L12 13" stroke="#222" stroke-width="1.4"/></svg>
<div class="a" style="left:54px;top:205px;width:19px;height:19px;background:linear-gradient(#ffffff,#e8e8e8);border:1px solid #5a5e5e;box-shadow:0 1px 1px rgba(0,0,0,.2)"></div>
<div class="a" style="left:72px;top:205px;width:19px;height:19px;background:linear-gradient(#ffffff,#e8e8e8);border:1px solid #5a5e5e;box-shadow:0 1px 1px rgba(0,0,0,.2)"></div>
<div class="t" style="left:54px;top:205px;width:19px;text-align:center;font-size:11px;line-height:19px;color:#5a2222">M</div>
<div class="t" style="left:72px;top:205px;width:19px;text-align:center;font-size:11px;line-height:19px;color:#333">S</div>
<div class="a" style="left:95px;top:205px;width:28px;height:19px;background:linear-gradient(90deg,#8a9898 0,#8a9898 56%,#aab6b6 56%);border:1px solid #6a7474;box-shadow:0 1px 1px rgba(0,0,0,.2)"></div>
<div class="t" style="left:96px;top:205px;width:16px;text-align:center;font-size:11px;line-height:19px;color:#3a4444">FX</div>
<svg class="a" style="left:111px;top:208px" width="11" height="12" viewBox="0 0 11 12"><path d="M3 4.5 A3.6 3.6 0 1 0 8 4.5" fill="none" stroke="#4a5454" stroke-width="1"/><path d="M5.5 2.5 V6.5" stroke="#4a5454" stroke-width="1"/></svg>
<svg class="a" style="left:126px;top:206px" width="17" height="17" viewBox="0 0 17 17"><circle cx="8.5" cy="8.5" r="7.2" fill="none" stroke="#6e7474" stroke-width="1"/><circle cx="8.5" cy="8.5" r="3.8" fill="none" stroke="#5a6060" stroke-width="1"/><path d="M4 13 L13 4" stroke="#5a6060" stroke-width="1"/></svg>
<div class="a" style="left:146px;top:205px;width:42px;height:19px;background:#8e9898"></div>
<div class="a" style="left:148px;top:207px;width:16px;height:15px;background:#a2aaaa;border:1px solid #4e5555"></div>
<svg class="a" style="left:148px;top:207px" width="16" height="15" viewBox="0 0 16 15"><path d="M3 11 L8 5 L13 10" stroke="#4e5555" stroke-width="1" fill="none"/><rect x="2" y="10" width="2.5" height="2.5" fill="#4e5555"/><rect x="7" y="4" width="2.5" height="2.5" fill="#4e5555"/><rect x="11.5" y="9" width="2.5" height="2.5" fill="#4e5555"/></svg>
<div class="t" style="left:167px;top:205px;font-size:11.5px;line-height:19px;color:#eef2f2">trim</div>
<div class="a" style="left:0px;top:232px;width:242px;height:57px;background:linear-gradient(#abb3b3,#949c9c)"></div>
<div class="a" style="left:242px;top:232px;width:1px;height:57px;background:#3a3e3e"></div>
<div class="a" style="left:243px;top:232px;width:17px;height:57px;background:linear-gradient(#858e8e,#7c8585)"></div>
<div class="a" style="left:0px;top:289px;width:283px;height:1px;background:#3a3e3e"></div>
<div class="t" style="left:243px;top:254px;width:17px;text-align:center;font-size:11px;line-height:14px;color:#e0ecec">5</div>
<svg class="a" style="left:245px;top:277px" width="12" height="10" viewBox="0 0 12 10"><path d="M2 9 V2 H6 L10 5 V9Z" fill="#6c7575"/></svg>
<div class="a" style="left:260px;top:232px;width:14px;height:57px;background:#262929"></div>
<div class="a" style="left:8px;top:240px;width:152px;height:19px;border-radius:9.5px;background:#2e2e2e;box-shadow:0 1px 1px rgba(0,0,0,.2)"></div>
<div class="a" style="left:9px;top:241px;width:17px;height:17px;border-radius:50%;background:#1c1c1c"></div>
<div class="a" style="left:10px;top:242px;width:15px;height:15px;border-radius:50%;background:linear-gradient(#8c4a3c 50%,#7a3222 50%)"></div>
<div class="t" style="left:10px;top:242px;width:15px;text-align:center;font-size:11px;line-height:15px;color:#f0d0b8">A</div>
<div class="t" style="left:29px;top:241px;font-size:12px;line-height:17px;color:#e6eaea">Bass</div>
<div class="a" style="left:141px;top:240px;width:19px;height:19px;border-radius:50%;background:radial-gradient(circle at 50% 22%,#ffffff 0,#d4d4d4 30%,#8a8a8a 72%,#505050 100%);border:1px solid #1e1e1e"></div>
<div class="a" style="left:150px;top:243px;width:2px;height:5px;background:#222"></div>
<div class="a" style="left:164px;top:240px;width:24px;height:19px;background:#2e3131;border:1px solid #1e2020;box-shadow:0 1px 0 rgba(0,0,0,.15)"></div>
<svg class="a" style="left:165px;top:241px" width="22" height="17" viewBox="0 0 22 17"><circle cx="4.5" cy="4.5" r="3.1" fill="#1aa040"/><circle cx="11.5" cy="4.5" r="3.1" fill="#000"/><circle cx="18.5" cy="4.5" r="3.1" fill="#000"/><text x="11" y="15" font-family="Liberation Sans" font-size="7" font-weight="bold" text-anchor="middle" fill="#d8d8d8" textLength="18" lengthAdjust="spacingAndGlyphs">ROUTE</text></svg>
<div class="a" style="left:8px;top:263px;width:19px;height:19px;border-radius:50%;background:linear-gradient(#fafafa,#c4c8c8);border:1px solid #6a6e6e;box-shadow:0 1px 1px rgba(0,0,0,.25)"></div>
<div class="a" style="left:17px;top:265px;width:1px;height:5px;background:#222"></div>
<div class="a" style="left:31px;top:263px;width:19px;height:19px;border-radius:50%;background:linear-gradient(#c8d0d0,#9aa2a2);border:1px solid #6a6e6e;box-shadow:0 1px 1px rgba(0,0,0,.25)"></div>
<svg class="a" style="left:31px;top:263px" width="19" height="19" viewBox="0 0 19 19"><path d="M10.5 10 L12 13" stroke="#222" stroke-width="1.4"/></svg>
<div class="a" style="left:54px;top:263px;width:19px;height:19px;background:linear-gradient(#ffffff,#e8e8e8);border:1px solid #5a5e5e;box-shadow:0 1px 1px rgba(0,0,0,.2)"></div>
<div class="a" style="left:72px;top:263px;width:19px;height:19px;background:linear-gradient(#ffffff,#e8e8e8);border:1px solid #5a5e5e;box-shadow:0 1px 1px rgba(0,0,0,.2)"></div>
<div class="t" style="left:54px;top:263px;width:19px;text-align:center;font-size:11px;line-height:19px;color:#5a2222">M</div>
<div class="t" style="left:72px;top:263px;width:19px;text-align:center;font-size:11px;line-height:19px;color:#333">S</div>
<div class="a" style="left:95px;top:263px;width:28px;height:19px;background:linear-gradient(90deg,#8a9898 0,#8a9898 56%,#aab6b6 56%);border:1px solid #6a7474;box-shadow:0 1px 1px rgba(0,0,0,.2)"></div>
<div class="t" style="left:96px;top:263px;width:16px;text-align:center;font-size:11px;line-height:19px;color:#3a4444">FX</div>
<svg class="a" style="left:111px;top:266px" width="11" height="12" viewBox="0 0 11 12"><path d="M3 4.5 A3.6 3.6 0 1 0 8 4.5" fill="none" stroke="#4a5454" stroke-width="1"/><path d="M5.5 2.5 V6.5" stroke="#4a5454" stroke-width="1"/></svg>
<svg class="a" style="left:126px;top:264px" width="17" height="17" viewBox="0 0 17 17"><circle cx="8.5" cy="8.5" r="7.2" fill="none" stroke="#6e7474" stroke-width="1"/><circle cx="8.5" cy="8.5" r="3.8" fill="none" stroke="#5a6060" stroke-width="1"/><path d="M4 13 L13 4" stroke="#5a6060" stroke-width="1"/></svg>
<div class="a" style="left:146px;top:263px;width:42px;height:19px;background:#8e9898"></div>
<div class="a" style="left:148px;top:265px;width:16px;height:15px;background:#a2aaaa;border:1px solid #4e5555"></div>
<svg class="a" style="left:148px;top:265px" width="16" height="15" viewBox="0 0 16 15"><path d="M3 11 L8 5 L13 10" stroke="#4e5555" stroke-width="1" fill="none"/><rect x="2" y="10" width="2.5" height="2.5" fill="#4e5555"/><rect x="7" y="4" width="2.5" height="2.5" fill="#4e5555"/><rect x="11.5" y="9" width="2.5" height="2.5" fill="#4e5555"/></svg>
<div class="t" style="left:167px;top:263px;font-size:11.5px;line-height:19px;color:#eef2f2">trim</div>
<div class="a" style="left:0px;top:290px;width:242px;height:57px;background:linear-gradient(#abb3b3,#949c9c)"></div>
<div class="a" style="left:242px;top:290px;width:1px;height:57px;background:#3a3e3e"></div>
<div class="a" style="left:243px;top:290px;width:17px;height:57px;background:linear-gradient(#858e8e,#7c8585)"></div>
<div class="a" style="left:0px;top:347px;width:283px;height:1px;background:#3a3e3e"></div>
<div class="t" style="left:243px;top:312px;width:17px;text-align:center;font-size:11px;line-height:14px;color:#e0ecec">6</div>
<svg class="a" style="left:245px;top:335px" width="12" height="10" viewBox="0 0 12 10"><path d="M2 9 V2 H6 L10 5 V9Z" fill="#6c7575"/></svg>
<div class="a" style="left:260px;top:290px;width:14px;height:57px;background:#262929"></div>
<div class="a" style="left:8px;top:298px;width:152px;height:19px;border-radius:9.5px;background:#2e2e2e;box-shadow:0 1px 1px rgba(0,0,0,.2)"></div>
<div class="a" style="left:9px;top:299px;width:17px;height:17px;border-radius:50%;background:#1c1c1c"></div>
<div class="a" style="left:10px;top:300px;width:15px;height:15px;border-radius:50%;background:linear-gradient(#8c4a3c 50%,#7a3222 50%)"></div>
<div class="t" style="left:10px;top:300px;width:15px;text-align:center;font-size:11px;line-height:15px;color:#f0d0b8">A</div>
<div class="t" style="left:29px;top:299px;font-size:12px;line-height:17px;color:#e6eaea">Bus 1</div>
<div class="a" style="left:141px;top:298px;width:19px;height:19px;border-radius:50%;background:radial-gradient(circle at 50% 22%,#ffffff 0,#d4d4d4 30%,#8a8a8a 72%,#505050 100%);border:1px solid #1e1e1e"></div>
<div class="a" style="left:150px;top:301px;width:2px;height:5px;background:#222"></div>
<div class="a" style="left:164px;top:298px;width:24px;height:19px;background:#2e3131;border:1px solid #1e2020;box-shadow:0 1px 0 rgba(0,0,0,.15)"></div>
<svg class="a" style="left:165px;top:299px" width="22" height="17" viewBox="0 0 22 17"><circle cx="4.5" cy="4.5" r="3.1" fill="#1aa040"/><circle cx="11.5" cy="4.5" r="3.1" fill="#000"/><circle cx="18.5" cy="4.5" r="3.1" fill="#000"/><text x="11" y="15" font-family="Liberation Sans" font-size="7" font-weight="bold" text-anchor="middle" fill="#d8d8d8" textLength="18" lengthAdjust="spacingAndGlyphs">ROUTE</text></svg>
<div class="a" style="left:8px;top:321px;width:19px;height:19px;border-radius:50%;background:linear-gradient(#fafafa,#c4c8c8);border:1px solid #6a6e6e;box-shadow:0 1px 1px rgba(0,0,0,.25)"></div>
<div class="a" style="left:17px;top:323px;width:1px;height:5px;background:#222"></div>
<div class="a" style="left:31px;top:321px;width:19px;height:19px;border-radius:50%;background:linear-gradient(#c8d0d0,#9aa2a2);border:1px solid #6a6e6e;box-shadow:0 1px 1px rgba(0,0,0,.25)"></div>
<svg class="a" style="left:31px;top:321px" width="19" height="19" viewBox="0 0 19 19"><path d="M10.5 10 L12 13" stroke="#222" stroke-width="1.4"/></svg>
<div class="a" style="left:54px;top:321px;width:19px;height:19px;background:linear-gradient(#ffffff,#e8e8e8);border:1px solid #5a5e5e;box-shadow:0 1px 1px rgba(0,0,0,.2)"></div>
<div class="a" style="left:72px;top:321px;width:19px;height:19px;background:linear-gradient(#ffffff,#e8e8e8);border:1px solid #5a5e5e;box-shadow:0 1px 1px rgba(0,0,0,.2)"></div>
<div class="t" style="left:54px;top:321px;width:19px;text-align:center;font-size:11px;line-height:19px;color:#5a2222">M</div>
<div class="t" style="left:72px;top:321px;width:19px;text-align:center;font-size:11px;line-height:19px;color:#333">S</div>
<div class="a" style="left:95px;top:321px;width:28px;height:19px;background:linear-gradient(90deg,#8a9898 0,#8a9898 56%,#aab6b6 56%);border:1px solid #6a7474;box-shadow:0 1px 1px rgba(0,0,0,.2)"></div>
<div class="t" style="left:96px;top:321px;width:16px;text-align:center;font-size:11px;line-height:19px;color:#3a4444">FX</div>
<svg class="a" style="left:111px;top:324px" width="11" height="12" viewBox="0 0 11 12"><path d="M3 4.5 A3.6 3.6 0 1 0 8 4.5" fill="none" stroke="#4a5454" stroke-width="1"/><path d="M5.5 2.5 V6.5" stroke="#4a5454" stroke-width="1"/></svg>
<svg class="a" style="left:126px;top:322px" width="17" height="17" viewBox="0 0 17 17"><circle cx="8.5" cy="8.5" r="7.2" fill="none" stroke="#6e7474" stroke-width="1"/><circle cx="8.5" cy="8.5" r="3.8" fill="none" stroke="#5a6060" stroke-width="1"/><path d="M4 13 L13 4" stroke="#5a6060" stroke-width="1"/></svg>
<div class="a" style="left:146px;top:321px;width:42px;height:19px;background:#8e9898"></div>
<div class="a" style="left:148px;top:323px;width:16px;height:15px;background:#a2aaaa;border:1px solid #4e5555"></div>
<svg class="a" style="left:148px;top:323px" width="16" height="15" viewBox="0 0 16 15"><path d="M3 11 L8 5 L13 10" stroke="#4e5555" stroke-width="1" fill="none"/><rect x="2" y="10" width="2.5" height="2.5" fill="#4e5555"/><rect x="7" y="4" width="2.5" height="2.5" fill="#4e5555"/><rect x="11.5" y="9" width="2.5" height="2.5" fill="#4e5555"/></svg>
<div class="t" style="left:167px;top:321px;font-size:11.5px;line-height:19px;color:#eef2f2">trim</div>
<div class="a" style="left:0px;top:348px;width:242px;height:57px;background:linear-gradient(#abb3b3,#949c9c)"></div>
<div class="a" style="left:242px;top:348px;width:1px;height:57px;background:#3a3e3e"></div>
<div class="a" style="left:243px;top:348px;width:17px;height:57px;background:linear-gradient(#858e8e,#7c8585)"></div>
<div class="a" style="left:0px;top:405px;width:283px;height:1px;background:#3a3e3e"></div>
<div class="t" style="left:243px;top:370px;width:17px;text-align:center;font-size:11px;line-height:14px;color:#e0ecec">7</div>
<svg class="a" style="left:245px;top:393px" width="12" height="10" viewBox="0 0 12 10"><path d="M2 9 V2 H6 L10 5 V9Z" fill="#6c7575"/></svg>
<div class="a" style="left:260px;top:348px;width:14px;height:57px;background:#262929"></div>
<div class="a" style="left:8px;top:356px;width:152px;height:19px;border-radius:9.5px;background:#2e2e2e;box-shadow:0 1px 1px rgba(0,0,0,.2)"></div>
<div class="a" style="left:9px;top:357px;width:17px;height:17px;border-radius:50%;background:#1c1c1c"></div>
<div class="a" style="left:10px;top:358px;width:15px;height:15px;border-radius:50%;background:linear-gradient(#8c4a3c 50%,#7a3222 50%)"></div>
<div class="t" style="left:10px;top:358px;width:15px;text-align:center;font-size:11px;line-height:15px;color:#f0d0b8">A</div>
<div class="t" style="left:29px;top:357px;font-size:12px;line-height:17px;color:#e6eaea">Bus 2</div>
<div class="a" style="left:141px;top:356px;width:19px;height:19px;border-radius:50%;background:radial-gradient(circle at 50% 22%,#ffffff 0,#d4d4d4 30%,#8a8a8a 72%,#505050 100%);border:1px solid #1e1e1e"></div>
<div class="a" style="left:150px;top:359px;width:2px;height:5px;background:#222"></div>
<div class="a" style="left:164px;top:356px;width:24px;height:19px;background:#2e3131;border:1px solid #1e2020;box-shadow:0 1px 0 rgba(0,0,0,.15)"></div>
<svg class="a" style="left:165px;top:357px" width="22" height="17" viewBox="0 0 22 17"><circle cx="4.5" cy="4.5" r="3.1" fill="#1aa040"/><circle cx="11.5" cy="4.5" r="3.1" fill="#000"/><circle cx="18.5" cy="4.5" r="3.1" fill="#000"/><text x="11" y="15" font-family="Liberation Sans" font-size="7" font-weight="bold" text-anchor="middle" fill="#d8d8d8" textLength="18" lengthAdjust="spacingAndGlyphs">ROUTE</text></svg>
<div class="a" style="left:8px;top:379px;width:19px;height:19px;border-radius:50%;background:linear-gradient(#fafafa,#c4c8c8);border:1px solid #6a6e6e;box-shadow:0 1px 1px rgba(0,0,0,.25)"></div>
<div class="a" style="left:17px;top:381px;width:1px;height:5px;background:#222"></div>
<div class="a" style="left:31px;top:379px;width:19px;height:19px;border-radius:50%;background:linear-gradient(#c8d0d0,#9aa2a2);border:1px solid #6a6e6e;box-shadow:0 1px 1px rgba(0,0,0,.25)"></div>
<svg class="a" style="left:31px;top:379px" width="19" height="19" viewBox="0 0 19 19"><path d="M10.5 10 L12 13" stroke="#222" stroke-width="1.4"/></svg>
<div class="a" style="left:54px;top:379px;width:19px;height:19px;background:linear-gradient(#ffffff,#e8e8e8);border:1px solid #5a5e5e;box-shadow:0 1px 1px rgba(0,0,0,.2)"></div>
<div class="a" style="left:72px;top:379px;width:19px;height:19px;background:linear-gradient(#ffffff,#e8e8e8);border:1px solid #5a5e5e;box-shadow:0 1px 1px rgba(0,0,0,.2)"></div>
<div class="t" style="left:54px;top:379px;width:19px;text-align:center;font-size:11px;line-height:19px;color:#5a2222">M</div>
<div class="t" style="left:72px;top:379px;width:19px;text-align:center;font-size:11px;line-height:19px;color:#333">S</div>
<div class="a" style="left:95px;top:379px;width:28px;height:19px;background:linear-gradient(90deg,#8a9898 0,#8a9898 56%,#aab6b6 56%);border:1px solid #6a7474;box-shadow:0 1px 1px rgba(0,0,0,.2)"></div>
<div class="t" style="left:96px;top:379px;width:16px;text-align:center;font-size:11px;line-height:19px;color:#3a4444">FX</div>
<svg class="a" style="left:111px;top:382px" width="11" height="12" viewBox="0 0 11 12"><path d="M3 4.5 A3.6 3.6 0 1 0 8 4.5" fill="none" stroke="#4a5454" stroke-width="1"/><path d="M5.5 2.5 V6.5" stroke="#4a5454" stroke-width="1"/></svg>
<svg class="a" style="left:126px;top:380px" width="17" height="17" viewBox="0 0 17 17"><circle cx="8.5" cy="8.5" r="7.2" fill="none" stroke="#6e7474" stroke-width="1"/><circle cx="8.5" cy="8.5" r="3.8" fill="none" stroke="#5a6060" stroke-width="1"/><path d="M4 13 L13 4" stroke="#5a6060" stroke-width="1"/></svg>
<div class="a" style="left:146px;top:379px;width:42px;height:19px;background:#8e9898"></div>
<div class="a" style="left:148px;top:381px;width:16px;height:15px;background:#a2aaaa;border:1px solid #4e5555"></div>
<svg class="a" style="left:148px;top:381px" width="16" height="15" viewBox="0 0 16 15"><path d="M3 11 L8 5 L13 10" stroke="#4e5555" stroke-width="1" fill="none"/><rect x="2" y="10" width="2.5" height="2.5" fill="#4e5555"/><rect x="7" y="4" width="2.5" height="2.5" fill="#4e5555"/><rect x="11.5" y="9" width="2.5" height="2.5" fill="#4e5555"/></svg>
<div class="t" style="left:167px;top:379px;font-size:11.5px;line-height:19px;color:#eef2f2">trim</div>
<div class="a" style="left:0px;top:406px;width:242px;height:57px;background:linear-gradient(#abb3b3,#949c9c)"></div>
<div class="a" style="left:242px;top:406px;width:1px;height:57px;background:#3a3e3e"></div>
<div class="a" style="left:243px;top:406px;width:17px;height:57px;background:linear-gradient(#858e8e,#7c8585)"></div>
<div class="a" style="left:0px;top:463px;width:283px;height:1px;background:#3a3e3e"></div>
<div class="t" style="left:243px;top:428px;width:17px;text-align:center;font-size:11px;line-height:14px;color:#e0ecec">8</div>
<svg class="a" style="left:245px;top:451px" width="12" height="10" viewBox="0 0 12 10"><path d="M2 9 V2 H6 L10 5 V9Z" fill="#6c7575"/></svg>
<div class="a" style="left:260px;top:406px;width:14px;height:57px;background:#262929"></div>
<div class="a" style="left:8px;top:414px;width:152px;height:19px;border-radius:9.5px;background:#2e2e2e;box-shadow:0 1px 1px rgba(0,0,0,.2)"></div>
<div class="a" style="left:9px;top:415px;width:17px;height:17px;border-radius:50%;background:#1c1c1c"></div>
<div class="a" style="left:10px;top:416px;width:15px;height:15px;border-radius:50%;background:linear-gradient(#8c4a3c 50%,#7a3222 50%)"></div>
<div class="t" style="left:10px;top:416px;width:15px;text-align:center;font-size:11px;line-height:15px;color:#f0d0b8">A</div>
<div class="t" style="left:29px;top:415px;font-size:12px;line-height:17px;color:#e6eaea">Chorus</div>
<div class="a" style="left:141px;top:414px;width:19px;height:19px;border-radius:50%;background:radial-gradient(circle at 50% 22%,#ffffff 0,#d4d4d4 30%,#8a8a8a 72%,#505050 100%);border:1px solid #1e1e1e"></div>
<div class="a" style="left:150px;top:417px;width:2px;height:5px;background:#222"></div>
<div class="a" style="left:164px;top:414px;width:24px;height:19px;background:#2e3131;border:1px solid #1e2020;box-shadow:0 1px 0 rgba(0,0,0,.15)"></div>
<svg class="a" style="left:165px;top:415px" width="22" height="17" viewBox="0 0 22 17"><circle cx="4.5" cy="4.5" r="3.1" fill="#1aa040"/><circle cx="11.5" cy="4.5" r="3.1" fill="#000"/><circle cx="18.5" cy="4.5" r="3.1" fill="#000"/><text x="11" y="15" font-family="Liberation Sans" font-size="7" font-weight="bold" text-anchor="middle" fill="#d8d8d8" textLength="18" lengthAdjust="spacingAndGlyphs">ROUTE</text></svg>
<div class="a" style="left:8px;top:437px;width:19px;height:19px;border-radius:50%;background:linear-gradient(#fafafa,#c4c8c8);border:1px solid #6a6e6e;box-shadow:0 1px 1px rgba(0,0,0,.25)"></div>
<div class="a" style="left:17px;top:439px;width:1px;height:5px;background:#222"></div>
<div class="a" style="left:31px;top:437px;width:19px;height:19px;border-radius:50%;background:linear-gradient(#c8d0d0,#9aa2a2);border:1px solid #6a6e6e;box-shadow:0 1px 1px rgba(0,0,0,.25)"></div>
<svg class="a" style="left:31px;top:437px" width="19" height="19" viewBox="0 0 19 19"><path d="M10.5 10 L12 13" stroke="#222" stroke-width="1.4"/></svg>
<div class="a" style="left:54px;top:437px;width:19px;height:19px;background:linear-gradient(#ffffff,#e8e8e8);border:1px solid #5a5e5e;box-shadow:0 1px 1px rgba(0,0,0,.2)"></div>
<div class="a" style="left:72px;top:437px;width:19px;height:19px;background:linear-gradient(#ffffff,#e8e8e8);border:1px solid #5a5e5e;box-shadow:0 1px 1px rgba(0,0,0,.2)"></div>
<div class="t" style="left:54px;top:437px;width:19px;text-align:center;font-size:11px;line-height:19px;color:#5a2222">M</div>
<div class="t" style="left:72px;top:437px;width:19px;text-align:center;font-size:11px;line-height:19px;color:#333">S</div>
<div class="a" style="left:95px;top:437px;width:28px;height:19px;background:linear-gradient(90deg,#8a9898 0,#8a9898 56%,#aab6b6 56%);border:1px solid #6a7474;box-shadow:0 1px 1px rgba(0,0,0,.2)"></div>
<div class="t" style="left:96px;top:437px;width:16px;text-align:center;font-size:11px;line-height:19px;color:#3a4444">FX</div>
<svg class="a" style="left:111px;top:440px" width="11" height="12" viewBox="0 0 11 12"><path d="M3 4.5 A3.6 3.6 0 1 0 8 4.5" fill="none" stroke="#4a5454" stroke-width="1"/><path d="M5.5 2.5 V6.5" stroke="#4a5454" stroke-width="1"/></svg>
<svg class="a" style="left:126px;top:438px" width="17" height="17" viewBox="0 0 17 17"><circle cx="8.5" cy="8.5" r="7.2" fill="none" stroke="#6e7474" stroke-width="1"/><circle cx="8.5" cy="8.5" r="3.8" fill="none" stroke="#5a6060" stroke-width="1"/><path d="M4 13 L13 4" stroke="#5a6060" stroke-width="1"/></svg>
<div class="a" style="left:146px;top:437px;width:42px;height:19px;background:#8e9898"></div>
<div class="a" style="left:148px;top:439px;width:16px;height:15px;background:#a2aaaa;border:1px solid #4e5555"></div>
<svg class="a" style="left:148px;top:439px" width="16" height="15" viewBox="0 0 16 15"><path d="M3 11 L8 5 L13 10" stroke="#4e5555" stroke-width="1" fill="none"/><rect x="2" y="10" width="2.5" height="2.5" fill="#4e5555"/><rect x="7" y="4" width="2.5" height="2.5" fill="#4e5555"/><rect x="11.5" y="9" width="2.5" height="2.5" fill="#4e5555"/></svg>
<div class="t" style="left:167px;top:437px;font-size:11.5px;line-height:19px;color:#eef2f2">trim</div>
<div class="a" style="left:0px;top:464px;width:242px;height:57px;background:linear-gradient(#abb3b3,#949c9c)"></div>
<div class="a" style="left:242px;top:464px;width:1px;height:57px;background:#3a3e3e"></div>
<div class="a" style="left:243px;top:464px;width:17px;height:57px;background:linear-gradient(#858e8e,#7c8585)"></div>
<div class="a" style="left:0px;top:521px;width:283px;height:1px;background:#3a3e3e"></div>
<div class="t" style="left:243px;top:486px;width:17px;text-align:center;font-size:11px;line-height:14px;color:#e0ecec">9</div>
<svg class="a" style="left:245px;top:509px" width="12" height="10" viewBox="0 0 12 10"><path d="M2 9 V2 H6 L10 5 V9Z" fill="#6c7575"/></svg>
<div class="a" style="left:260px;top:464px;width:14px;height:57px;background:#262929"></div>
<div class="a" style="left:8px;top:472px;width:152px;height:19px;border-radius:9.5px;background:#2e2e2e;box-shadow:0 1px 1px rgba(0,0,0,.2)"></div>
<div class="a" style="left:9px;top:473px;width:17px;height:17px;border-radius:50%;background:#1c1c1c"></div>
<div class="a" style="left:10px;top:474px;width:15px;height:15px;border-radius:50%;background:linear-gradient(#8c4a3c 50%,#7a3222 50%)"></div>
<div class="t" style="left:10px;top:474px;width:15px;text-align:center;font-size:11px;line-height:15px;color:#f0d0b8">A</div>
<div class="t" style="left:29px;top:473px;font-size:12px;line-height:17px;color:#e6eaea">Fat Channel</div>
<div class="a" style="left:141px;top:472px;width:19px;height:19px;border-radius:50%;background:radial-gradient(circle at 50% 22%,#ffffff 0,#d4d4d4 30%,#8a8a8a 72%,#505050 100%);border:1px solid #1e1e1e"></div>
<div class="a" style="left:150px;top:475px;width:2px;height:5px;background:#222"></div>
<div class="a" style="left:164px;top:472px;width:24px;height:19px;background:#2e3131;border:1px solid #1e2020;box-shadow:0 1px 0 rgba(0,0,0,.15)"></div>
<svg class="a" style="left:165px;top:473px" width="22" height="17" viewBox="0 0 22 17"><circle cx="4.5" cy="4.5" r="3.1" fill="#1aa040"/><circle cx="11.5" cy="4.5" r="3.1" fill="#000"/><circle cx="18.5" cy="4.5" r="3.1" fill="#000"/><text x="11" y="15" font-family="Liberation Sans" font-size="7" font-weight="bold" text-anchor="middle" fill="#d8d8d8" textLength="18" lengthAdjust="spacingAndGlyphs">ROUTE</text></svg>
<div class="a" style="left:8px;top:495px;width:19px;height:19px;border-radius:50%;background:linear-gradient(#fafafa,#c4c8c8);border:1px solid #6a6e6e;box-shadow:0 1px 1px rgba(0,0,0,.25)"></div>
<div class="a" style="left:17px;top:497px;width:1px;height:5px;background:#222"></div>
<div class="a" style="left:31px;top:495px;width:19px;height:19px;border-radius:50%;background:linear-gradient(#c8d0d0,#9aa2a2);border:1px solid #6a6e6e;box-shadow:0 1px 1px rgba(0,0,0,.25)"></div>
<svg class="a" style="left:31px;top:495px" width="19" height="19" viewBox="0 0 19 19"><path d="M10.5 10 L12 13" stroke="#222" stroke-width="1.4"/></svg>
<div class="a" style="left:54px;top:495px;width:19px;height:19px;background:linear-gradient(#ffffff,#e8e8e8);border:1px solid #5a5e5e;box-shadow:0 1px 1px rgba(0,0,0,.2)"></div>
<div class="a" style="left:72px;top:495px;width:19px;height:19px;background:linear-gradient(#ffffff,#e8e8e8);border:1px solid #5a5e5e;box-shadow:0 1px 1px rgba(0,0,0,.2)"></div>
<div class="t" style="left:54px;top:495px;width:19px;text-align:center;font-size:11px;line-height:19px;color:#5a2222">M</div>
<div class="t" style="left:72px;top:495px;width:19px;text-align:center;font-size:11px;line-height:19px;color:#333">S</div>
<div class="a" style="left:95px;top:495px;width:28px;height:19px;background:linear-gradient(90deg,#8a9898 0,#8a9898 56%,#aab6b6 56%);border:1px solid #6a7474;box-shadow:0 1px 1px rgba(0,0,0,.2)"></div>
<div class="t" style="left:96px;top:495px;width:16px;text-align:center;font-size:11px;line-height:19px;color:#3a4444">FX</div>
<svg class="a" style="left:111px;top:498px" width="11" height="12" viewBox="0 0 11 12"><path d="M3 4.5 A3.6 3.6 0 1 0 8 4.5" fill="none" stroke="#4a5454" stroke-width="1"/><path d="M5.5 2.5 V6.5" stroke="#4a5454" stroke-width="1"/></svg>
<svg class="a" style="left:126px;top:496px" width="17" height="17" viewBox="0 0 17 17"><circle cx="8.5" cy="8.5" r="7.2" fill="none" stroke="#6e7474" stroke-width="1"/><circle cx="8.5" cy="8.5" r="3.8" fill="none" stroke="#5a6060" stroke-width="1"/><path d="M4 13 L13 4" stroke="#5a6060" stroke-width="1"/></svg>
<div class="a" style="left:146px;top:495px;width:42px;height:19px;background:#8e9898"></div>
<div class="a" style="left:148px;top:497px;width:16px;height:15px;background:#a2aaaa;border:1px solid #4e5555"></div>
<svg class="a" style="left:148px;top:497px" width="16" height="15" viewBox="0 0 16 15"><path d="M3 11 L8 5 L13 10" stroke="#4e5555" stroke-width="1" fill="none"/><rect x="2" y="10" width="2.5" height="2.5" fill="#4e5555"/><rect x="7" y="4" width="2.5" height="2.5" fill="#4e5555"/><rect x="11.5" y="9" width="2.5" height="2.5" fill="#4e5555"/></svg>
<div class="t" style="left:167px;top:495px;font-size:11.5px;line-height:19px;color:#eef2f2">trim</div>
<div class="a" style="left:0px;top:522px;width:242px;height:57px;background:linear-gradient(#abb3b3,#949c9c)"></div>
<div class="a" style="left:242px;top:522px;width:1px;height:57px;background:#3a3e3e"></div>
<div class="a" style="left:243px;top:522px;width:17px;height:57px;background:linear-gradient(#858e8e,#7c8585)"></div>
<div class="a" style="left:0px;top:579px;width:283px;height:1px;background:#3a3e3e"></div>
<div class="t" style="left:243px;top:544px;width:17px;text-align:center;font-size:11px;line-height:14px;color:#e0ecec">10</div>
<svg class="a" style="left:245px;top:567px" width="12" height="10" viewBox="0 0 12 10"><path d="M2 9 V2 H6 L10 5 V9Z" fill="#6c7575"/></svg>
<div class="a" style="left:260px;top:522px;width:14px;height:57px;background:#262929"></div>
<div class="a" style="left:8px;top:530px;width:152px;height:19px;border-radius:9.5px;background:#2e2e2e;box-shadow:0 1px 1px rgba(0,0,0,.2)"></div>
<div class="a" style="left:9px;top:531px;width:17px;height:17px;border-radius:50%;background:#1c1c1c"></div>
<div class="a" style="left:10px;top:532px;width:15px;height:15px;border-radius:50%;background:linear-gradient(#8c4a3c 50%,#7a3222 50%)"></div>
<div class="t" style="left:10px;top:532px;width:15px;text-align:center;font-size:11px;line-height:15px;color:#f0d0b8">A</div>
<div class="t" style="left:29px;top:531px;font-size:12px;line-height:17px;color:#e6eaea">FX 1</div>
<div class="a" style="left:141px;top:530px;width:19px;height:19px;border-radius:50%;background:radial-gradient(circle at 50% 22%,#ffffff 0,#d4d4d4 30%,#8a8a8a 72%,#505050 100%);border:1px solid #1e1e1e"></div>
<div class="a" style="left:150px;top:533px;width:2px;height:5px;background:#222"></div>
<div class="a" style="left:164px;top:530px;width:24px;height:19px;background:#2e3131;border:1px solid #1e2020;box-shadow:0 1px 0 rgba(0,0,0,.15)"></div>
<svg class="a" style="left:165px;top:531px" width="22" height="17" viewBox="0 0 22 17"><circle cx="4.5" cy="4.5" r="3.1" fill="#1aa040"/><circle cx="11.5" cy="4.5" r="3.1" fill="#000"/><circle cx="18.5" cy="4.5" r="3.1" fill="#000"/><text x="11" y="15" font-family="Liberation Sans" font-size="7" font-weight="bold" text-anchor="middle" fill="#d8d8d8" textLength="18" lengthAdjust="spacingAndGlyphs">ROUTE</text></svg>
<div class="a" style="left:8px;top:553px;width:19px;height:19px;border-radius:50%;background:linear-gradient(#fafafa,#c4c8c8);border:1px solid #6a6e6e;box-shadow:0 1px 1px rgba(0,0,0,.25)"></div>
<div class="a" style="left:17px;top:555px;width:1px;height:5px;background:#222"></div>
<div class="a" style="left:31px;top:553px;width:19px;height:19px;border-radius:50%;background:linear-gradient(#c8d0d0,#9aa2a2);border:1px solid #6a6e6e;box-shadow:0 1px 1px rgba(0,0,0,.25)"></div>
<svg class="a" style="left:31px;top:553px" width="19" height="19" viewBox="0 0 19 19"><path d="M10.5 10 L12 13" stroke="#222" stroke-width="1.4"/></svg>
<div class="a" style="left:54px;top:553px;width:19px;height:19px;background:linear-gradient(#ffffff,#e8e8e8);border:1px solid #5a5e5e;box-shadow:0 1px 1px rgba(0,0,0,.2)"></div>
<div class="a" style="left:72px;top:553px;width:19px;height:19px;background:linear-gradient(#ffffff,#e8e8e8);border:1px solid #5a5e5e;box-shadow:0 1px 1px rgba(0,0,0,.2)"></div>
<div class="t" style="left:54px;top:553px;width:19px;text-align:center;font-size:11px;line-height:19px;color:#5a2222">M</div>
<div class="t" style="left:72px;top:553px;width:19px;text-align:center;font-size:11px;line-height:19px;color:#333">S</div>
<div class="a" style="left:95px;top:553px;width:28px;height:19px;background:linear-gradient(90deg,#8a9898 0,#8a9898 56%,#aab6b6 56%);border:1px solid #6a7474;box-shadow:0 1px 1px rgba(0,0,0,.2)"></div>
<div class="t" style="left:96px;top:553px;width:16px;text-align:center;font-size:11px;line-height:19px;color:#3a4444">FX</div>
<svg class="a" style="left:111px;top:556px" width="11" height="12" viewBox="0 0 11 12"><path d="M3 4.5 A3.6 3.6 0 1 0 8 4.5" fill="none" stroke="#4a5454" stroke-width="1"/><path d="M5.5 2.5 V6.5" stroke="#4a5454" stroke-width="1"/></svg>
<svg class="a" style="left:126px;top:554px" width="17" height="17" viewBox="0 0 17 17"><circle cx="8.5" cy="8.5" r="7.2" fill="none" stroke="#6e7474" stroke-width="1"/><circle cx="8.5" cy="8.5" r="3.8" fill="none" stroke="#5a6060" stroke-width="1"/><path d="M4 13 L13 4" stroke="#5a6060" stroke-width="1"/></svg>
<div class="a" style="left:146px;top:553px;width:42px;height:19px;background:#8e9898"></div>
<div class="a" style="left:148px;top:555px;width:16px;height:15px;background:#a2aaaa;border:1px solid #4e5555"></div>
<svg class="a" style="left:148px;top:555px" width="16" height="15" viewBox="0 0 16 15"><path d="M3 11 L8 5 L13 10" stroke="#4e5555" stroke-width="1" fill="none"/><rect x="2" y="10" width="2.5" height="2.5" fill="#4e5555"/><rect x="7" y="4" width="2.5" height="2.5" fill="#4e5555"/><rect x="11.5" y="9" width="2.5" height="2.5" fill="#4e5555"/></svg>
<div class="t" style="left:167px;top:553px;font-size:11.5px;line-height:19px;color:#eef2f2">trim</div>
<div class="a" style="left:0px;top:580px;width:242px;height:57px;background:linear-gradient(#abb3b3,#949c9c)"></div>
<div class="a" style="left:242px;top:580px;width:1px;height:57px;background:#3a3e3e"></div>
<div class="a" style="left:243px;top:580px;width:17px;height:57px;background:linear-gradient(#858e8e,#7c8585)"></div>
<div class="a" style="left:0px;top:637px;width:283px;height:1px;background:#3a3e3e"></div>
<div class="t" style="left:243px;top:602px;width:17px;text-align:center;font-size:11px;line-height:14px;color:#e0ecec">11</div>
<svg class="a" style="left:245px;top:625px" width="12" height="10" viewBox="0 0 12 10"><path d="M2 9 V2 H6 L10 5 V9Z" fill="#6c7575"/></svg>
<div class="a" style="left:260px;top:580px;width:14px;height:57px;background:#262929"></div>
<div class="a" style="left:8px;top:588px;width:152px;height:19px;border-radius:9.5px;background:#2e2e2e;box-shadow:0 1px 1px rgba(0,0,0,.2)"></div>
<div class="a" style="left:9px;top:589px;width:17px;height:17px;border-radius:50%;background:#1c1c1c"></div>
<div class="a" style="left:10px;top:590px;width:15px;height:15px;border-radius:50%;background:linear-gradient(#8c4a3c 50%,#7a3222 50%)"></div>
<div class="t" style="left:10px;top:590px;width:15px;text-align:center;font-size:11px;line-height:15px;color:#f0d0b8">A</div>
<div class="t" style="left:29px;top:589px;font-size:12px;line-height:17px;color:#e6eaea">Guitar</div>
<div class="a" style="left:141px;top:588px;width:19px;height:19px;border-radius:50%;background:radial-gradient(circle at 50% 22%,#ffffff 0,#d4d4d4 30%,#8a8a8a 72%,#505050 100%);border:1px solid #1e1e1e"></div>
<div class="a" style="left:150px;top:591px;width:2px;height:5px;background:#222"></div>
<div class="a" style="left:164px;top:588px;width:24px;height:19px;background:#2e3131;border:1px solid #1e2020;box-shadow:0 1px 0 rgba(0,0,0,.15)"></div>
<svg class="a" style="left:165px;top:589px" width="22" height="17" viewBox="0 0 22 17"><circle cx="4.5" cy="4.5" r="3.1" fill="#1aa040"/><circle cx="11.5" cy="4.5" r="3.1" fill="#000"/><circle cx="18.5" cy="4.5" r="3.1" fill="#000"/><text x="11" y="15" font-family="Liberation Sans" font-size="7" font-weight="bold" text-anchor="middle" fill="#d8d8d8" textLength="18" lengthAdjust="spacingAndGlyphs">ROUTE</text></svg>
<div class="a" style="left:8px;top:611px;width:19px;height:19px;border-radius:50%;background:linear-gradient(#fafafa,#c4c8c8);border:1px solid #6a6e6e;box-shadow:0 1px 1px rgba(0,0,0,.25)"></div>
<div class="a" style="left:17px;top:613px;width:1px;height:5px;background:#222"></div>
<div class="a" style="left:31px;top:611px;width:19px;height:19px;border-radius:50%;background:linear-gradient(#c8d0d0,#9aa2a2);border:1px solid #6a6e6e;box-shadow:0 1px 1px rgba(0,0,0,.25)"></div>
<svg class="a" style="left:31px;top:611px" width="19" height="19" viewBox="0 0 19 19"><path d="M10.5 10 L12 13" stroke="#222" stroke-width="1.4"/></svg>
<div class="a" style="left:54px;top:611px;width:19px;height:19px;background:linear-gradient(#ffffff,#e8e8e8);border:1px solid #5a5e5e;box-shadow:0 1px 1px rgba(0,0,0,.2)"></div>
<div class="a" style="left:72px;top:611px;width:19px;height:19px;background:linear-gradient(#ffffff,#e8e8e8);border:1px solid #5a5e5e;box-shadow:0 1px 1px rgba(0,0,0,.2)"></div>
<div class="t" style="left:54px;top:611px;width:19px;text-align:center;font-size:11px;line-height:19px;color:#5a2222">M</div>
<div class="t" style="left:72px;top:611px;width:19px;text-align:center;font-size:11px;line-height:19px;color:#333">S</div>
<div class="a" style="left:95px;top:611px;width:28px;height:19px;background:linear-gradient(90deg,#8a9898 0,#8a9898 56%,#aab6b6 56%);border:1px solid #6a7474;box-shadow:0 1px 1px rgba(0,0,0,.2)"></div>
<div class="t" style="left:96px;top:611px;width:16px;text-align:center;font-size:11px;line-height:19px;color:#3a4444">FX</div>
<svg class="a" style="left:111px;top:614px" width="11" height="12" viewBox="0 0 11 12"><path d="M3 4.5 A3.6 3.6 0 1 0 8 4.5" fill="none" stroke="#4a5454" stroke-width="1"/><path d="M5.5 2.5 V6.5" stroke="#4a5454" stroke-width="1"/></svg>
<svg class="a" style="left:126px;top:612px" width="17" height="17" viewBox="0 0 17 17"><circle cx="8.5" cy="8.5" r="7.2" fill="none" stroke="#6e7474" stroke-width="1"/><circle cx="8.5" cy="8.5" r="3.8" fill="none" stroke="#5a6060" stroke-width="1"/><path d="M4 13 L13 4" stroke="#5a6060" stroke-width="1"/></svg>
<div class="a" style="left:146px;top:611px;width:42px;height:19px;background:#8e9898"></div>
<div class="a" style="left:148px;top:613px;width:16px;height:15px;background:#a2aaaa;border:1px solid #4e5555"></div>
<svg class="a" style="left:148px;top:613px" width="16" height="15" viewBox="0 0 16 15"><path d="M3 11 L8 5 L13 10" stroke="#4e5555" stroke-width="1" fill="none"/><rect x="2" y="10" width="2.5" height="2.5" fill="#4e5555"/><rect x="7" y="4" width="2.5" height="2.5" fill="#4e5555"/><rect x="11.5" y="9" width="2.5" height="2.5" fill="#4e5555"/></svg>
<div class="t" style="left:167px;top:611px;font-size:11.5px;line-height:19px;color:#eef2f2">trim</div>
<div class="a" style="left:0px;top:638px;width:242px;height:57px;background:linear-gradient(#abb3b3,#949c9c)"></div>
<div class="a" style="left:242px;top:638px;width:1px;height:57px;background:#3a3e3e"></div>
<div class="a" style="left:243px;top:638px;width:17px;height:57px;background:linear-gradient(#858e8e,#7c8585)"></div>
<div class="a" style="left:0px;top:695px;width:283px;height:1px;background:#3a3e3e"></div>
<div class="t" style="left:243px;top:660px;width:17px;text-align:center;font-size:11px;line-height:14px;color:#e0ecec">12</div>
<svg class="a" style="left:245px;top:683px" width="12" height="10" viewBox="0 0 12 10"><path d="M2 9 V2 H6 L10 5 V9Z" fill="#6c7575"/></svg>
<div class="a" style="left:260px;top:638px;width:14px;height:57px;background:#262929"></div>
<div class="a" style="left:8px;top:646px;width:152px;height:19px;border-radius:9.5px;background:#2e2e2e;box-shadow:0 1px 1px rgba(0,0,0,.2)"></div>
<div class="a" style="left:9px;top:647px;width:17px;height:17px;border-radius:50%;background:#1c1c1c"></div>
<div class="a" style="left:10px;top:648px;width:15px;height:15px;border-radius:50%;background:linear-gradient(#8c4a3c 50%,#7a3222 50%)"></div>
<div class="t" style="left:10px;top:648px;width:15px;text-align:center;font-size:11px;line-height:15px;color:#f0d0b8">A</div>
<div class="t" style="left:29px;top:647px;font-size:12px;line-height:17px;color:#e6eaea">Kontakt 5 16out 3(2</div>
<div class="a" style="left:141px;top:646px;width:19px;height:19px;border-radius:50%;background:radial-gradient(circle at 50% 22%,#ffffff 0,#d4d4d4 30%,#8a8a8a 72%,#505050 100%);border:1px solid #1e1e1e"></div>
<div class="a" style="left:150px;top:649px;width:2px;height:5px;background:#222"></div>
<div class="a" style="left:164px;top:646px;width:24px;height:19px;background:#2e3131;border:1px solid #1e2020;box-shadow:0 1px 0 rgba(0,0,0,.15)"></div>
<svg class="a" style="left:165px;top:647px" width="22" height="17" viewBox="0 0 22 17"><circle cx="4.5" cy="4.5" r="3.1" fill="#1aa040"/><circle cx="11.5" cy="4.5" r="3.1" fill="#000"/><circle cx="18.5" cy="4.5" r="3.1" fill="#000"/><text x="11" y="15" font-family="Liberation Sans" font-size="7" font-weight="bold" text-anchor="middle" fill="#d8d8d8" textLength="18" lengthAdjust="spacingAndGlyphs">ROUTE</text></svg>
<div class="a" style="left:8px;top:669px;width:19px;height:19px;border-radius:50%;background:linear-gradient(#fafafa,#c4c8c8);border:1px solid #6a6e6e;box-shadow:0 1px 1px rgba(0,0,0,.25)"></div>
<div class="a" style="left:17px;top:671px;width:1px;height:5px;background:#222"></div>
<div class="a" style="left:31px;top:669px;width:19px;height:19px;border-radius:50%;background:linear-gradient(#c8d0d0,#9aa2a2);border:1px solid #6a6e6e;box-shadow:0 1px 1px rgba(0,0,0,.25)"></div>
<svg class="a" style="left:31px;top:669px" width="19" height="19" viewBox="0 0 19 19"><path d="M10.5 10 L12 13" stroke="#222" stroke-width="1.4"/></svg>
<div class="a" style="left:54px;top:669px;width:19px;height:19px;background:linear-gradient(#ffffff,#e8e8e8);border:1px solid #5a5e5e;box-shadow:0 1px 1px rgba(0,0,0,.2)"></div>
<div class="a" style="left:72px;top:669px;width:19px;height:19px;background:linear-gradient(#ffffff,#e8e8e8);border:1px solid #5a5e5e;box-shadow:0 1px 1px rgba(0,0,0,.2)"></div>
<div class="t" style="left:54px;top:669px;width:19px;text-align:center;font-size:11px;line-height:19px;color:#5a2222">M</div>
<div class="t" style="left:72px;top:669px;width:19px;text-align:center;font-size:11px;line-height:19px;color:#333">S</div>
<div class="a" style="left:95px;top:669px;width:28px;height:19px;background:linear-gradient(90deg,#8a9898 0,#8a9898 56%,#aab6b6 56%);border:1px solid #6a7474;box-shadow:0 1px 1px rgba(0,0,0,.2)"></div>
<div class="t" style="left:96px;top:669px;width:16px;text-align:center;font-size:11px;line-height:19px;color:#3a4444">FX</div>
<svg class="a" style="left:111px;top:672px" width="11" height="12" viewBox="0 0 11 12"><path d="M3 4.5 A3.6 3.6 0 1 0 8 4.5" fill="none" stroke="#4a5454" stroke-width="1"/><path d="M5.5 2.5 V6.5" stroke="#4a5454" stroke-width="1"/></svg>
<svg class="a" style="left:126px;top:670px" width="17" height="17" viewBox="0 0 17 17"><circle cx="8.5" cy="8.5" r="7.2" fill="none" stroke="#6e7474" stroke-width="1"/><circle cx="8.5" cy="8.5" r="3.8" fill="none" stroke="#5a6060" stroke-width="1"/><path d="M4 13 L13 4" stroke="#5a6060" stroke-width="1"/></svg>
<div class="a" style="left:146px;top:669px;width:42px;height:19px;background:#8e9898"></div>
<div class="a" style="left:148px;top:671px;width:16px;height:15px;background:#a2aaaa;border:1px solid #4e5555"></div>
<svg class="a" style="left:148px;top:671px" width="16" height="15" viewBox="0 0 16 15"><path d="M3 11 L8 5 L13 10" stroke="#4e5555" stroke-width="1" fill="none"/><rect x="2" y="10" width="2.5" height="2.5" fill="#4e5555"/><rect x="7" y="4" width="2.5" height="2.5" fill="#4e5555"/><rect x="11.5" y="9" width="2.5" height="2.5" fill="#4e5555"/></svg>
<div class="t" style="left:167px;top:669px;font-size:11.5px;line-height:19px;color:#eef2f2">trim</div>
<div class="a" style="left:0px;top:696px;width:242px;height:57px;background:linear-gradient(#abb3b3,#949c9c)"></div>
<div class="a" style="left:242px;top:696px;width:1px;height:57px;background:#3a3e3e"></div>
<div class="a" style="left:243px;top:696px;width:17px;height:57px;background:linear-gradient(#858e8e,#7c8585)"></div>
<div class="a" style="left:0px;top:753px;width:283px;height:1px;background:#3a3e3e"></div>
<div class="t" style="left:243px;top:718px;width:17px;text-align:center;font-size:11px;line-height:14px;color:#e0ecec">13</div>
<svg class="a" style="left:245px;top:741px" width="12" height="10" viewBox="0 0 12 10"><path d="M2 9 V2 H6 L10 5 V9Z" fill="#6c7575"/></svg>
<div class="a" style="left:260px;top:696px;width:14px;height:57px;background:#262929"></div>
<div class="a" style="left:8px;top:704px;width:152px;height:19px;border-radius:9.5px;background:#2e2e2e;box-shadow:0 1px 1px rgba(0,0,0,.2)"></div>
<div class="a" style="left:9px;top:705px;width:17px;height:17px;border-radius:50%;background:#1c1c1c"></div>
<div class="a" style="left:10px;top:706px;width:15px;height:15px;border-radius:50%;background:linear-gradient(#8c4a3c 50%,#7a3222 50%)"></div>
<div class="t" style="left:10px;top:706px;width:15px;text-align:center;font-size:11px;line-height:15px;color:#f0d0b8">A</div>
<div class="t" style="left:29px;top:705px;font-size:12px;line-height:17px;color:#e6eaea">Kontakt 5 16out 3(3</div>
<div class="a" style="left:141px;top:704px;width:19px;height:19px;border-radius:50%;background:radial-gradient(circle at 50% 22%,#ffffff 0,#d4d4d4 30%,#8a8a8a 72%,#505050 100%);border:1px solid #1e1e1e"></div>
<div class="a" style="left:150px;top:707px;width:2px;height:5px;background:#222"></div>
<div class="a" style="left:164px;top:704px;width:24px;height:19px;background:#2e3131;border:1px solid #1e2020;box-shadow:0 1px 0 rgba(0,0,0,.15)"></div>
<svg class="a" style="left:165px;top:705px" width="22" height="17" viewBox="0 0 22 17"><circle cx="4.5" cy="4.5" r="3.1" fill="#1aa040"/><circle cx="11.5" cy="4.5" r="3.1" fill="#000"/><circle cx="18.5" cy="4.5" r="3.1" fill="#000"/><text x="11" y="15" font-family="Liberation Sans" font-size="7" font-weight="bold" text-anchor="middle" fill="#d8d8d8" textLength="18" lengthAdjust="spacingAndGlyphs">ROUTE</text></svg>
<div class="a" style="left:8px;top:727px;width:19px;height:19px;border-radius:50%;background:linear-gradient(#fafafa,#c4c8c8);border:1px solid #6a6e6e;box-shadow:0 1px 1px rgba(0,0,0,.25)"></div>
<div class="a" style="left:17px;top:729px;width:1px;height:5px;background:#222"></div>
<div class="a" style="left:31px;top:727px;width:19px;height:19px;border-radius:50%;background:linear-gradient(#c8d0d0,#9aa2a2);border:1px solid #6a6e6e;box-shadow:0 1px 1px rgba(0,0,0,.25)"></div>
<svg class="a" style="left:31px;top:727px" width="19" height="19" viewBox="0 0 19 19"><path d="M10.5 10 L12 13" stroke="#222" stroke-width="1.4"/></svg>
<div class="a" style="left:54px;top:727px;width:19px;height:19px;background:linear-gradient(#ffffff,#e8e8e8);border:1px solid #5a5e5e;box-shadow:0 1px 1px rgba(0,0,0,.2)"></div>
<div class="a" style="left:72px;top:727px;width:19px;height:19px;background:linear-gradient(#ffffff,#e8e8e8);border:1px solid #5a5e5e;box-shadow:0 1px 1px rgba(0,0,0,.2)"></div>
<div class="t" style="left:54px;top:727px;width:19px;text-align:center;font-size:11px;line-height:19px;color:#5a2222">M</div>
<div class="t" style="left:72px;top:727px;width:19px;text-align:center;font-size:11px;line-height:19px;color:#333">S</div>
<div class="a" style="left:95px;top:727px;width:28px;height:19px;background:linear-gradient(90deg,#8a9898 0,#8a9898 56%,#aab6b6 56%);border:1px solid #6a7474;box-shadow:0 1px 1px rgba(0,0,0,.2)"></div>
<div class="t" style="left:96px;top:727px;width:16px;text-align:center;font-size:11px;line-height:19px;color:#3a4444">FX</div>
<svg class="a" style="left:111px;top:730px" width="11" height="12" viewBox="0 0 11 12"><path d="M3 4.5 A3.6 3.6 0 1 0 8 4.5" fill="none" stroke="#4a5454" stroke-width="1"/><path d="M5.5 2.5 V6.5" stroke="#4a5454" stroke-width="1"/></svg>
<svg class="a" style="left:126px;top:728px" width="17" height="17" viewBox="0 0 17 17"><circle cx="8.5" cy="8.5" r="7.2" fill="none" stroke="#6e7474" stroke-width="1"/><circle cx="8.5" cy="8.5" r="3.8" fill="none" stroke="#5a6060" stroke-width="1"/><path d="M4 13 L13 4" stroke="#5a6060" stroke-width="1"/></svg>
<div class="a" style="left:146px;top:727px;width:42px;height:19px;background:#8e9898"></div>
<div class="a" style="left:148px;top:729px;width:16px;height:15px;background:#a2aaaa;border:1px solid #4e5555"></div>
<svg class="a" style="left:148px;top:729px" width="16" height="15" viewBox="0 0 16 15"><path d="M3 11 L8 5 L13 10" stroke="#4e5555" stroke-width="1" fill="none"/><rect x="2" y="10" width="2.5" height="2.5" fill="#4e5555"/><rect x="7" y="4" width="2.5" height="2.5" fill="#4e5555"/><rect x="11.5" y="9" width="2.5" height="2.5" fill="#4e5555"/></svg>
<div class="t" style="left:167px;top:727px;font-size:11.5px;line-height:19px;color:#eef2f2">trim</div>
<div class="a" style="left:0px;top:754px;width:242px;height:57px;background:linear-gradient(#abb3b3,#949c9c)"></div>
<div class="a" style="left:242px;top:754px;width:1px;height:57px;background:#3a3e3e"></div>
<div class="a" style="left:243px;top:754px;width:17px;height:57px;background:linear-gradient(#858e8e,#7c8585)"></div>
<div class="a" style="left:0px;top:811px;width:283px;height:1px;background:#3a3e3e"></div>
<div class="t" style="left:243px;top:776px;width:17px;text-align:center;font-size:11px;line-height:14px;color:#e0ecec">14</div>
<svg class="a" style="left:245px;top:799px" width="12" height="10" viewBox="0 0 12 10"><path d="M2 9 V2 H6 L10 5 V9Z" fill="#6c7575"/></svg>
<div class="a" style="left:260px;top:754px;width:14px;height:57px;background:#262929"></div>
<div class="a" style="left:8px;top:762px;width:152px;height:19px;border-radius:9.5px;background:#2e2e2e;box-shadow:0 1px 1px rgba(0,0,0,.2)"></div>
<div class="a" style="left:9px;top:763px;width:17px;height:17px;border-radius:50%;background:#1c1c1c"></div>
<div class="a" style="left:10px;top:764px;width:15px;height:15px;border-radius:50%;background:linear-gradient(#8c4a3c 50%,#7a3222 50%)"></div>
<div class="t" style="left:10px;top:764px;width:15px;text-align:center;font-size:11px;line-height:15px;color:#f0d0b8">A</div>
<div class="t" style="left:29px;top:763px;font-size:12px;line-height:17px;color:#e6eaea">Kontakt 5 16out 3</div>
<div class="a" style="left:141px;top:762px;width:19px;height:19px;border-radius:50%;background:radial-gradient(circle at 50% 22%,#ffffff 0,#d4d4d4 30%,#8a8a8a 72%,#505050 100%);border:1px solid #1e1e1e"></div>
<div class="a" style="left:150px;top:765px;width:2px;height:5px;background:#222"></div>
<div class="a" style="left:164px;top:762px;width:24px;height:19px;background:#2e3131;border:1px solid #1e2020;box-shadow:0 1px 0 rgba(0,0,0,.15)"></div>
<svg class="a" style="left:165px;top:763px" width="22" height="17" viewBox="0 0 22 17"><circle cx="4.5" cy="4.5" r="3.1" fill="#1aa040"/><circle cx="11.5" cy="4.5" r="3.1" fill="#000"/><circle cx="18.5" cy="4.5" r="3.1" fill="#000"/><text x="11" y="15" font-family="Liberation Sans" font-size="7" font-weight="bold" text-anchor="middle" fill="#d8d8d8" textLength="18" lengthAdjust="spacingAndGlyphs">ROUTE</text></svg>
<div class="a" style="left:8px;top:785px;width:19px;height:19px;border-radius:50%;background:linear-gradient(#fafafa,#c4c8c8);border:1px solid #6a6e6e;box-shadow:0 1px 1px rgba(0,0,0,.25)"></div>
<div class="a" style="left:17px;top:787px;width:1px;height:5px;background:#222"></div>
<div class="a" style="left:31px;top:785px;width:19px;height:19px;border-radius:50%;background:linear-gradient(#c8d0d0,#9aa2a2);border:1px solid #6a6e6e;box-shadow:0 1px 1px rgba(0,0,0,.25)"></div>
<svg class="a" style="left:31px;top:785px" width="19" height="19" viewBox="0 0 19 19"><path d="M10.5 10 L12 13" stroke="#222" stroke-width="1.4"/></svg>
<div class="a" style="left:54px;top:785px;width:19px;height:19px;background:linear-gradient(#ffffff,#e8e8e8);border:1px solid #5a5e5e;box-shadow:0 1px 1px rgba(0,0,0,.2)"></div>
<div class="a" style="left:72px;top:785px;width:19px;height:19px;background:linear-gradient(#ffffff,#e8e8e8);border:1px solid #5a5e5e;box-shadow:0 1px 1px rgba(0,0,0,.2)"></div>
<div class="t" style="left:54px;top:785px;width:19px;text-align:center;font-size:11px;line-height:19px;color:#5a2222">M</div>
<div class="t" style="left:72px;top:785px;width:19px;text-align:center;font-size:11px;line-height:19px;color:#333">S</div>
<div class="a" style="left:95px;top:785px;width:28px;height:19px;background:linear-gradient(90deg,#8a9898 0,#8a9898 56%,#aab6b6 56%);border:1px solid #6a7474;box-shadow:0 1px 1px rgba(0,0,0,.2)"></div>
<div class="t" style="left:96px;top:785px;width:16px;text-align:center;font-size:11px;line-height:19px;color:#3a4444">FX</div>
<svg class="a" style="left:111px;top:788px" width="11" height="12" viewBox="0 0 11 12"><path d="M3 4.5 A3.6 3.6 0 1 0 8 4.5" fill="none" stroke="#4a5454" stroke-width="1"/><path d="M5.5 2.5 V6.5" stroke="#4a5454" stroke-width="1"/></svg>
<svg class="a" style="left:126px;top:786px" width="17" height="17" viewBox="0 0 17 17"><circle cx="8.5" cy="8.5" r="7.2" fill="none" stroke="#6e7474" stroke-width="1"/><circle cx="8.5" cy="8.5" r="3.8" fill="none" stroke="#5a6060" stroke-width="1"/><path d="M4 13 L13 4" stroke="#5a6060" stroke-width="1"/></svg>
<div class="a" style="left:146px;top:785px;width:42px;height:19px;background:#8e9898"></div>
<div class="a" style="left:148px;top:787px;width:16px;height:15px;background:#a2aaaa;border:1px solid #4e5555"></div>
<svg class="a" style="left:148px;top:787px" width="16" height="15" viewBox="0 0 16 15"><path d="M3 11 L8 5 L13 10" stroke="#4e5555" stroke-width="1" fill="none"/><rect x="2" y="10" width="2.5" height="2.5" fill="#4e5555"/><rect x="7" y="4" width="2.5" height="2.5" fill="#4e5555"/><rect x="11.5" y="9" width="2.5" height="2.5" fill="#4e5555"/></svg>
<div class="t" style="left:167px;top:785px;font-size:11.5px;line-height:19px;color:#eef2f2">trim</div>
<div class="a" style="left:0px;top:812px;width:242px;height:57px;background:linear-gradient(#abb3b3,#949c9c)"></div>
<div class="a" style="left:242px;top:812px;width:1px;height:57px;background:#3a3e3e"></div>
<div class="a" style="left:243px;top:812px;width:17px;height:57px;background:linear-gradient(#858e8e,#7c8585)"></div>
<div class="a" style="left:0px;top:869px;width:283px;height:1px;background:#3a3e3e"></div>
<div class="t" style="left:243px;top:834px;width:17px;text-align:center;font-size:11px;line-height:14px;color:#e0ecec">15</div>
<svg class="a" style="left:245px;top:857px" width="12" height="10" viewBox="0 0 12 10"><path d="M2 9 V2 H6 L10 5 V9Z" fill="#6c7575"/></svg>
<div class="a" style="left:260px;top:812px;width:14px;height:57px;background:#262929"></div>
<div class="a" style="left:8px;top:820px;width:152px;height:19px;border-radius:9.5px;background:#2e2e2e;box-shadow:0 1px 1px rgba(0,0,0,.2)"></div>
<div class="a" style="left:9px;top:821px;width:17px;height:17px;border-radius:50%;background:#1c1c1c"></div>
<div class="a" style="left:10px;top:822px;width:15px;height:15px;border-radius:50%;background:linear-gradient(#8c4a3c 50%,#7a3222 50%)"></div>
<div class="t" style="left:10px;top:822px;width:15px;text-align:center;font-size:11px;line-height:15px;color:#f0d0b8">A</div>
<div class="t" style="left:29px;top:821px;font-size:12px;line-height:17px;color:#e6eaea">Kontakt 5 16out 4</div>
<div class="a" style="left:141px;top:820px;width:19px;height:19px;border-radius:50%;background:radial-gradient(circle at 50% 22%,#ffffff 0,#d4d4d4 30%,#8a8a8a 72%,#505050 100%);border:1px solid #1e1e1e"></div>
<div class="a" style="left:150px;top:823px;width:2px;height:5px;background:#222"></div>
<div class="a" style="left:164px;top:820px;width:24px;height:19px;background:#2e3131;border:1px solid #1e2020;box-shadow:0 1px 0 rgba(0,0,0,.15)"></div>
<svg class="a" style="left:165px;top:821px" width="22" height="17" viewBox="0 0 22 17"><circle cx="4.5" cy="4.5" r="3.1" fill="#1aa040"/><circle cx="11.5" cy="4.5" r="3.1" fill="#000"/><circle cx="18.5" cy="4.5" r="3.1" fill="#000"/><text x="11" y="15" font-family="Liberation Sans" font-size="7" font-weight="bold" text-anchor="middle" fill="#d8d8d8" textLength="18" lengthAdjust="spacingAndGlyphs">ROUTE</text></svg>
<div class="a" style="left:8px;top:843px;width:19px;height:19px;border-radius:50%;background:linear-gradient(#fafafa,#c4c8c8);border:1px solid #6a6e6e;box-shadow:0 1px 1px rgba(0,0,0,.25)"></div>
<div class="a" style="left:17px;top:845px;width:1px;height:5px;background:#222"></div>
<div class="a" style="left:31px;top:843px;width:19px;height:19px;border-radius:50%;background:linear-gradient(#c8d0d0,#9aa2a2);border:1px solid #6a6e6e;box-shadow:0 1px 1px rgba(0,0,0,.25)"></div>
<svg class="a" style="left:31px;top:843px" width="19" height="19" viewBox="0 0 19 19"><path d="M10.5 10 L12 13" stroke="#222" stroke-width="1.4"/></svg>
<div class="a" style="left:54px;top:843px;width:19px;height:19px;background:linear-gradient(#ffffff,#e8e8e8);border:1px solid #5a5e5e;box-shadow:0 1px 1px rgba(0,0,0,.2)"></div>
<div class="a" style="left:72px;top:843px;width:19px;height:19px;background:linear-gradient(#ffffff,#e8e8e8);border:1px solid #5a5e5e;box-shadow:0 1px 1px rgba(0,0,0,.2)"></div>
<div class="t" style="left:54px;top:843px;width:19px;text-align:center;font-size:11px;line-height:19px;color:#5a2222">M</div>
<div class="t" style="left:72px;top:843px;width:19px;text-align:center;font-size:11px;line-height:19px;color:#333">S</div>
<div class="a" style="left:95px;top:843px;width:28px;height:19px;background:linear-gradient(90deg,#8a9898 0,#8a9898 56%,#aab6b6 56%);border:1px solid #6a7474;box-shadow:0 1px 1px rgba(0,0,0,.2)"></div>
<div class="t" style="left:96px;top:843px;width:16px;text-align:center;font-size:11px;line-height:19px;color:#3a4444">FX</div>
<svg class="a" style="left:111px;top:846px" width="11" height="12" viewBox="0 0 11 12"><path d="M3 4.5 A3.6 3.6 0 1 0 8 4.5" fill="none" stroke="#4a5454" stroke-width="1"/><path d="M5.5 2.5 V6.5" stroke="#4a5454" stroke-width="1"/></svg>
<svg class="a" style="left:126px;top:844px" width="17" height="17" viewBox="0 0 17 17"><circle cx="8.5" cy="8.5" r="7.2" fill="none" stroke="#6e7474" stroke-width="1"/><circle cx="8.5" cy="8.5" r="3.8" fill="none" stroke="#5a6060" stroke-width="1"/><path d="M4 13 L13 4" stroke="#5a6060" stroke-width="1"/></svg>
<div class="a" style="left:146px;top:843px;width:42px;height:19px;background:#8e9898"></div>
<div class="a" style="left:148px;top:845px;width:16px;height:15px;background:#a2aaaa;border:1px solid #4e5555"></div>
<svg class="a" style="left:148px;top:845px" width="16" height="15" viewBox="0 0 16 15"><path d="M3 11 L8 5 L13 10" stroke="#4e5555" stroke-width="1" fill="none"/><rect x="2" y="10" width="2.5" height="2.5" fill="#4e5555"/><rect x="7" y="4" width="2.5" height="2.5" fill="#4e5555"/><rect x="11.5" y="9" width="2.5" height="2.5" fill="#4e5555"/></svg>
<div class="t" style="left:167px;top:843px;font-size:11.5px;line-height:19px;color:#eef2f2">trim</div>
</div>
<div class="a" style="left:353px;top:116px;width:1px;height:843px;background:#262727"></div>
<div class="a" style="left:354px;top:116px;width:1543px;height:843px;overflow:hidden;background:#333">
<style>.ofl{position:absolute;top:0;transform:scaleX(.92);transform-origin:0 0}</style>
<div class="a" style="left:0;top:0px;width:1543px;height:1px;background:#f8f8f8"></div>
<div class="a" style="left:0;top:1px;width:1543px;height:53px;background:linear-gradient(#eaebeb,#e4e6e6)"></div>
<div class="a" style="left:0;top:54px;width:1543px;height:2px;background:#939695;border-top:1px solid #a8abaa"></div>
<div class="a" style="left:0;top:56px;width:1543px;height:2px;background:#fafafa"></div>
<div class="a" style="left:0;top:46px;width:0;height:0;border-left:6px solid #fafafa;border-top:7px solid transparent"></div>
<div class="a" style="left:7px;top:3px;width:13px;height:12px;background:#e2e5e5;color:#8a9292;font-size:11px;text-align:center;line-height:12px">M</div>
<div class="a" style="left:0;top:21px;width:1543px;height:12px;font-size:9.5px;line-height:12px;color:#1e3048;white-space:nowrap"><span class="ofl" style="left:-1.3px">OFFLINE</span><span class="ofl" style="left:51.7px">OFFLINE</span><span class="ofl" style="left:104.7px">OFFLINE</span><span class="ofl" style="left:157.7px">OFFLINE</span><span class="ofl" style="left:210.7px">OFFLINE</span><span class="ofl" style="left:263.7px">OFFLINE</span><span class="ofl" style="left:316.7px">OFFLINE</span><span class="ofl" style="left:369.7px">OFFLINE</span><span class="ofl" style="left:422.7px">OFFLINE</span><span class="ofl" style="left:475.7px">OFFLINE</span><span class="ofl" style="left:528.7px">OFFLINE</span><span class="ofl" style="left:581.7px">OFFLINE</span><span class="ofl" style="left:634.7px">OFFLINE</span><span class="ofl" style="left:687.7px">OFFLINE</span><span class="ofl" style="left:740.7px">OFFLINE</span><span class="ofl" style="left:793.7px">OFFLINE</span><span class="ofl" style="left:846.7px">OFFLINE</span><span class="ofl" style="left:899.7px">OFFLINE</span><span class="ofl" style="left:952.7px">OFFLINE</span><span class="ofl" style="left:1005.7px">OFFLINE</span><span class="ofl" style="left:1058.7px">OFFLINE</span><span class="ofl" style="left:1111.7px">OFFLINE</span><span class="ofl" style="left:1164.7px">OFFLINE</span><span class="ofl" style="left:1217.7px">OFFLINE</span><span class="ofl" style="left:1270.7px">OFFLINE</span><span class="ofl" style="left:1323.7px">OFFLINE</span><span class="ofl" style="left:1376.7px">OFFLINE</span><span class="ofl" style="left:1429.7px">OFFLINE</span><span class="ofl" style="left:1482.7px">OFFLINE</span><span class="ofl" style="left:1535.7px">OFFLINE</span></div>
<div class="a" style="left:0;top:58px;width:1543px;height:1px;background:#7a7e7e"></div>
<div class="a" style="left:0;top:59px;width:1543px;height:52px;background:linear-gradient(#c3c7c7,#b8bcbc)"></div>
<div class="a" style="left:0;top:111px;width:1543px;height:1px;background:#7a7e7e"></div>
<div class="a" style="left:0;top:112px;width:1543px;height:4px;background:#f6f7f7"></div>
<div class="a" style="left:0;top:104px;width:0;height:0;border-left:6px solid #fafafa;border-top:7px solid transparent"></div>
<div class="a" style="left:7px;top:61px;width:13px;height:12px;background:#d2d6d6;color:#8a9292;font-size:11px;text-align:center;line-height:12px">M</div>
<div class="a" style="left:0;top:79px;width:1543px;height:12px;font-size:9.5px;line-height:12px;color:#1e3048;white-space:nowrap"><span class="ofl" style="left:-1.3px">OFFLINE</span><span class="ofl" style="left:51.7px">OFFLINE</span><span class="ofl" style="left:104.7px">OFFLINE</span><span class="ofl" style="left:157.7px">OFFLINE</span><span class="ofl" style="left:210.7px">OFFLINE</span><span class="ofl" style="left:263.7px">OFFLINE</span><span class="ofl" style="left:316.7px">OFFLINE</span><span class="ofl" style="left:369.7px">OFFLINE</span><span class="ofl" style="left:422.7px">OFFLINE</span><span class="ofl" style="left:475.7px">OFFLINE</span><span class="ofl" style="left:528.7px">OFFLINE</span><span class="ofl" style="left:581.7px">OFFLINE</span><span class="ofl" style="left:634.7px">OFFLINE</span><span class="ofl" style="left:687.7px">OFFLINE</span><span class="ofl" style="left:740.7px">OFFLINE</span><span class="ofl" style="left:793.7px">OFFLINE</span><span class="ofl" style="left:846.7px">OFFLINE</span><span class="ofl" style="left:899.7px">OFFLINE</span><span class="ofl" style="left:952.7px">OFFLINE</span><span class="ofl" style="left:1005.7px">OFFLINE</span><span class="ofl" style="left:1058.7px">OFFLINE</span><span class="ofl" style="left:1111.7px">OFFLINE</span><span class="ofl" style="left:1164.7px">OFFLINE</span><span class="ofl" style="left:1217.7px">OFFLINE</span><span class="ofl" style="left:1270.7px">OFFLINE</span><span class="ofl" style="left:1323.7px">OFFLINE</span><span class="ofl" style="left:1376.7px">OFFLINE</span><span class="ofl" style="left:1429.7px">OFFLINE</span><span class="ofl" style="left:1482.7px">OFFLINE</span><span class="ofl" style="left:1535.7px">OFFLINE</span></div>
<div class="a" style="left:0;top:116px;width:1543px;height:1px;background:#7a7e7e"></div>
<div class="a" style="left:0;top:117px;width:1543px;height:52px;background:linear-gradient(#c3c7c7,#b8bcbc)"></div>
<div class="a" style="left:0;top:169px;width:1543px;height:1px;background:#7a7e7e"></div>
<div class="a" style="left:0;top:170px;width:1543px;height:4px;background:#f6f7f7"></div>
<div class="a" style="left:0;top:162px;width:0;height:0;border-left:6px solid #fafafa;border-top:7px solid transparent"></div>
<div class="a" style="left:7px;top:119px;width:13px;height:12px;background:#d2d6d6;color:#8a9292;font-size:11px;text-align:center;line-height:12px">M</div>
<div class="a" style="left:0;top:137px;width:1543px;height:12px;font-size:9.5px;line-height:12px;color:#1e3048;white-space:nowrap"><span class="ofl" style="left:-1.3px">OFFLINE</span><span class="ofl" style="left:51.7px">OFFLINE</span><span class="ofl" style="left:104.7px">OFFLINE</span><span class="ofl" style="left:157.7px">OFFLINE</span><span class="ofl" style="left:210.7px">OFFLINE</span><span class="ofl" style="left:263.7px">OFFLINE</span><span class="ofl" style="left:316.7px">OFFLINE</span><span class="ofl" style="left:369.7px">OFFLINE</span><span class="ofl" style="left:422.7px">OFFLINE</span><span class="ofl" style="left:475.7px">OFFLINE</span><span class="ofl" style="left:528.7px">OFFLINE</span><span class="ofl" style="left:581.7px">OFFLINE</span><span class="ofl" style="left:634.7px">OFFLINE</span><span class="ofl" style="left:687.7px">OFFLINE</span><span class="ofl" style="left:740.7px">OFFLINE</span><span class="ofl" style="left:793.7px">OFFLINE</span><span class="ofl" style="left:846.7px">OFFLINE</span><span class="ofl" style="left:899.7px">OFFLINE</span><span class="ofl" style="left:952.7px">OFFLINE</span><span class="ofl" style="left:1005.7px">OFFLINE</span><span class="ofl" style="left:1058.7px">OFFLINE</span><span class="ofl" style="left:1111.7px">OFFLINE</span><span class="ofl" style="left:1164.7px">OFFLINE</span><span class="ofl" style="left:1217.7px">OFFLINE</span><span class="ofl" style="left:1270.7px">OFFLINE</span><span class="ofl" style="left:1323.7px">OFFLINE</span><span class="ofl" style="left:1376.7px">OFFLINE</span><span class="ofl" style="left:1429.7px">OFFLINE</span><span class="ofl" style="left:1482.7px">OFFLINE</span><span class="ofl" style="left:1535.7px">OFFLINE</span></div>
<div class="a" style="left:0;top:174px;width:1543px;height:1px;background:#7a7e7e"></div>
<div class="a" style="left:0;top:175px;width:1543px;height:52px;background:linear-gradient(#c3c7c7,#b8bcbc)"></div>
<div class="a" style="left:0;top:227px;width:1543px;height:1px;background:#7a7e7e"></div>
<div class="a" style="left:0;top:228px;width:1543px;height:4px;background:#f6f7f7"></div>
<div class="a" style="left:0;top:220px;width:0;height:0;border-left:6px solid #fafafa;border-top:7px solid transparent"></div>
<div class="a" style="left:7px;top:177px;width:13px;height:12px;background:#d2d6d6;color:#8a9292;font-size:11px;text-align:center;line-height:12px">M</div>
<div class="a" style="left:0;top:195px;width:1543px;height:12px;font-size:9.5px;line-height:12px;color:#1e3048;white-space:nowrap"><span class="ofl" style="left:-1.3px">OFFLINE</span><span class="ofl" style="left:51.7px">OFFLINE</span><span class="ofl" style="left:104.7px">OFFLINE</span><span class="ofl" style="left:157.7px">OFFLINE</span><span class="ofl" style="left:210.7px">OFFLINE</span><span class="ofl" style="left:263.7px">OFFLINE</span><span class="ofl" style="left:316.7px">OFFLINE</span><span class="ofl" style="left:369.7px">OFFLINE</span><span class="ofl" style="left:422.7px">OFFLINE</span><span class="ofl" style="left:475.7px">OFFLINE</span><span class="ofl" style="left:528.7px">OFFLINE</span><span class="ofl" style="left:581.7px">OFFLINE</span><span class="ofl" style="left:634.7px">OFFLINE</span><span class="ofl" style="left:687.7px">OFFLINE</span><span class="ofl" style="left:740.7px">OFFLINE</span><span class="ofl" style="left:793.7px">OFFLINE</span><span class="ofl" style="left:846.7px">OFFLINE</span><span class="ofl" style="left:899.7px">OFFLINE</span><span class="ofl" style="left:952.7px">OFFLINE</span><span class="ofl" style="left:1005.7px">OFFLINE</span><span class="ofl" style="left:1058.7px">OFFLINE</span><span class="ofl" style="left:1111.7px">OFFLINE</span><span class="ofl" style="left:1164.7px">OFFLINE</span><span class="ofl" style="left:1217.7px">OFFLINE</span><span class="ofl" style="left:1270.7px">OFFLINE</span><span class="ofl" style="left:1323.7px">OFFLINE</span><span class="ofl" style="left:1376.7px">OFFLINE</span><span class="ofl" style="left:1429.7px">OFFLINE</span><span class="ofl" style="left:1482.7px">OFFLINE</span><span class="ofl" style="left:1535.7px">OFFLINE</span></div>
<div class="a" style="left:0;top:232px;width:1543px;height:1px;background:#7a7e7e"></div>
<div class="a" style="left:0;top:233px;width:1543px;height:52px;background:linear-gradient(#c3c7c7,#b8bcbc)"></div>
<div class="a" style="left:0;top:285px;width:1543px;height:1px;background:#7a7e7e"></div>
<div class="a" style="left:0;top:286px;width:1543px;height:4px;background:#f6f7f7"></div>
<div class="a" style="left:0;top:278px;width:0;height:0;border-left:6px solid #fafafa;border-top:7px solid transparent"></div>
<div class="a" style="left:7px;top:235px;width:13px;height:12px;background:#d2d6d6;color:#8a9292;font-size:11px;text-align:center;line-height:12px">M</div>
<div class="a" style="left:0;top:253px;width:1543px;height:12px;font-size:9.5px;line-height:12px;color:#1e3048;white-space:nowrap"><span class="ofl" style="left:-1.3px">OFFLINE</span><span class="ofl" style="left:51.7px">OFFLINE</span><span class="ofl" style="left:104.7px">OFFLINE</span><span class="ofl" style="left:157.7px">OFFLINE</span><span class="ofl" style="left:210.7px">OFFLINE</span><span class="ofl" style="left:263.7px">OFFLINE</span><span class="ofl" style="left:316.7px">OFFLINE</span><span class="ofl" style="left:369.7px">OFFLINE</span><span class="ofl" style="left:422.7px">OFFLINE</span><span class="ofl" style="left:475.7px">OFFLINE</span><span class="ofl" style="left:528.7px">OFFLINE</span><span class="ofl" style="left:581.7px">OFFLINE</span><span class="ofl" style="left:634.7px">OFFLINE</span><span class="ofl" style="left:687.7px">OFFLINE</span><span class="ofl" style="left:740.7px">OFFLINE</span><span class="ofl" style="left:793.7px">OFFLINE</span><span class="ofl" style="left:846.7px">OFFLINE</span><span class="ofl" style="left:899.7px">OFFLINE</span><span class="ofl" style="left:952.7px">OFFLINE</span><span class="ofl" style="left:1005.7px">OFFLINE</span><span class="ofl" style="left:1058.7px">OFFLINE</span><span class="ofl" style="left:1111.7px">OFFLINE</span><span class="ofl" style="left:1164.7px">OFFLINE</span><span class="ofl" style="left:1217.7px">OFFLINE</span><span class="ofl" style="left:1270.7px">OFFLINE</span><span class="ofl" style="left:1323.7px">OFFLINE</span><span class="ofl" style="left:1376.7px">OFFLINE</span><span class="ofl" style="left:1429.7px">OFFLINE</span><span class="ofl" style="left:1482.7px">OFFLINE</span><span class="ofl" style="left:1535.7px">OFFLINE</span></div>
<div class="a" style="left:0;top:290px;width:1543px;height:1px;background:#7a7e7e"></div>
<div class="a" style="left:0;top:291px;width:1543px;height:52px;background:linear-gradient(#c3c7c7,#b8bcbc)"></div>
<div class="a" style="left:0;top:343px;width:1543px;height:1px;background:#7a7e7e"></div>
<div class="a" style="left:0;top:344px;width:1543px;height:4px;background:#f6f7f7"></div>
<div class="a" style="left:0;top:336px;width:0;height:0;border-left:6px solid #fafafa;border-top:7px solid transparent"></div>
<div class="a" style="left:7px;top:293px;width:13px;height:12px;background:#d2d6d6;color:#8a9292;font-size:11px;text-align:center;line-height:12px">M</div>
<div class="a" style="left:0;top:311px;width:1543px;height:12px;font-size:9.5px;line-height:12px;color:#1e3048;white-space:nowrap"><span class="ofl" style="left:-1.3px">OFFLINE</span><span class="ofl" style="left:51.7px">OFFLINE</span><span class="ofl" style="left:104.7px">OFFLINE</span><span class="ofl" style="left:157.7px">OFFLINE</span><span class="ofl" style="left:210.7px">OFFLINE</span><span class="ofl" style="left:263.7px">OFFLINE</span><span class="ofl" style="left:316.7px">OFFLINE</span><span class="ofl" style="left:369.7px">OFFLINE</span><span class="ofl" style="left:422.7px">OFFLINE</span><span class="ofl" style="left:475.7px">OFFLINE</span><span class="ofl" style="left:528.7px">OFFLINE</span><span class="ofl" style="left:581.7px">OFFLINE</span><span class="ofl" style="left:634.7px">OFFLINE</span><span class="ofl" style="left:687.7px">OFFLINE</span><span class="ofl" style="left:740.7px">OFFLINE</span><span class="ofl" style="left:793.7px">OFFLINE</span><span class="ofl" style="left:846.7px">OFFLINE</span><span class="ofl" style="left:899.7px">OFFLINE</span><span class="ofl" style="left:952.7px">OFFLINE</span><span class="ofl" style="left:1005.7px">OFFLINE</span><span class="ofl" style="left:1058.7px">OFFLINE</span><span class="ofl" style="left:1111.7px">OFFLINE</span><span class="ofl" style="left:1164.7px">OFFLINE</span><span class="ofl" style="left:1217.7px">OFFLINE</span><span class="ofl" style="left:1270.7px">OFFLINE</span><span class="ofl" style="left:1323.7px">OFFLINE</span><span class="ofl" style="left:1376.7px">OFFLINE</span><span class="ofl" style="left:1429.7px">OFFLINE</span><span class="ofl" style="left:1482.7px">OFFLINE</span><span class="ofl" style="left:1535.7px">OFFLINE</span></div>
<div class="a" style="left:0;top:348px;width:1543px;height:1px;background:#7a7e7e"></div>
<div class="a" style="left:0;top:349px;width:1543px;height:52px;background:linear-gradient(#c3c7c7,#b8bcbc)"></div>
<div class="a" style="left:0;top:401px;width:1543px;height:1px;background:#7a7e7e"></div>
<div class="a" style="left:0;top:402px;width:1543px;height:4px;background:#f6f7f7"></div>
<div class="a" style="left:0;top:394px;width:0;height:0;border-left:6px solid #fafafa;border-top:7px solid transparent"></div>
<div class="a" style="left:7px;top:351px;width:13px;height:12px;background:#d2d6d6;color:#8a9292;font-size:11px;text-align:center;line-height:12px">M</div>
<div class="a" style="left:0;top:369px;width:1543px;height:12px;font-size:9.5px;line-height:12px;color:#1e3048;white-space:nowrap"><span class="ofl" style="left:-1.3px">OFFLINE</span><span class="ofl" style="left:51.7px">OFFLINE</span><span class="ofl" style="left:104.7px">OFFLINE</span><span class="ofl" style="left:157.7px">OFFLINE</span><span class="ofl" style="left:210.7px">OFFLINE</span><span class="ofl" style="left:263.7px">OFFLINE</span><span class="ofl" style="left:316.7px">OFFLINE</span><span class="ofl" style="left:369.7px">OFFLINE</span><span class="ofl" style="left:422.7px">OFFLINE</span><span class="ofl" style="left:475.7px">OFFLINE</span><span class="ofl" style="left:528.7px">OFFLINE</span><span class="ofl" style="left:581.7px">OFFLINE</span><span class="ofl" style="left:634.7px">OFFLINE</span><span class="ofl" style="left:687.7px">OFFLINE</span><span class="ofl" style="left:740.7px">OFFLINE</span><span class="ofl" style="left:793.7px">OFFLINE</span><span class="ofl" style="left:846.7px">OFFLINE</span><span class="ofl" style="left:899.7px">OFFLINE</span><span class="ofl" style="left:952.7px">OFFLINE</span><span class="ofl" style="left:1005.7px">OFFLINE</span><span class="ofl" style="left:1058.7px">OFFLINE</span><span class="ofl" style="left:1111.7px">OFFLINE</span><span class="ofl" style="left:1164.7px">OFFLINE</span><span class="ofl" style="left:1217.7px">OFFLINE</span><span class="ofl" style="left:1270.7px">OFFLINE</span><span class="ofl" style="left:1323.7px">OFFLINE</span><span class="ofl" style="left:1376.7px">OFFLINE</span><span class="ofl" style="left:1429.7px">OFFLINE</span><span class="ofl" style="left:1482.7px">OFFLINE</span><span class="ofl" style="left:1535.7px">OFFLINE</span></div>
<div class="a" style="left:0;top:406px;width:1543px;height:1px;background:#7a7e7e"></div>
<div class="a" style="left:0;top:407px;width:1543px;height:52px;background:linear-gradient(#c3c7c7,#b8bcbc)"></div>
<div class="a" style="left:0;top:459px;width:1543px;height:1px;background:#7a7e7e"></div>
<div class="a" style="left:0;top:460px;width:1543px;height:4px;background:#f6f7f7"></div>
<div class="a" style="left:0;top:452px;width:0;height:0;border-left:6px solid #fafafa;border-top:7px solid transparent"></div>
<div class="a" style="left:7px;top:409px;width:13px;height:12px;background:#d2d6d6;color:#8a9292;font-size:11px;text-align:center;line-height:12px">M</div>
<div class="a" style="left:0;top:427px;width:1543px;height:12px;font-size:9.5px;line-height:12px;color:#1e3048;white-space:nowrap"><span class="ofl" style="left:-1.3px">OFFLINE</span><span class="ofl" style="left:51.7px">OFFLINE</span><span class="ofl" style="left:104.7px">OFFLINE</span><span class="ofl" style="left:157.7px">OFFLINE</span><span class="ofl" style="left:210.7px">OFFLINE</span><span class="ofl" style="left:263.7px">OFFLINE</span><span class="ofl" style="left:316.7px">OFFLINE</span><span class="ofl" style="left:369.7px">OFFLINE</span><span class="ofl" style="left:422.7px">OFFLINE</span><span class="ofl" style="left:475.7px">OFFLINE</span><span class="ofl" style="left:528.7px">OFFLINE</span><span class="ofl" style="left:581.7px">OFFLINE</span><span class="ofl" style="left:634.7px">OFFLINE</span><span class="ofl" style="left:687.7px">OFFLINE</span><span class="ofl" style="left:740.7px">OFFLINE</span><span class="ofl" style="left:793.7px">OFFLINE</span><span class="ofl" style="left:846.7px">OFFLINE</span><span class="ofl" style="left:899.7px">OFFLINE</span><span class="ofl" style="left:952.7px">OFFLINE</span><span class="ofl" style="left:1005.7px">OFFLINE</span><span class="ofl" style="left:1058.7px">OFFLINE</span><span class="ofl" style="left:1111.7px">OFFLINE</span><span class="ofl" style="left:1164.7px">OFFLINE</span><span class="ofl" style="left:1217.7px">OFFLINE</span><span class="ofl" style="left:1270.7px">OFFLINE</span><span class="ofl" style="left:1323.7px">OFFLINE</span><span class="ofl" style="left:1376.7px">OFFLINE</span><span class="ofl" style="left:1429.7px">OFFLINE</span><span class="ofl" style="left:1482.7px">OFFLINE</span><span class="ofl" style="left:1535.7px">OFFLINE</span></div>
<div class="a" style="left:0;top:464px;width:1543px;height:1px;background:#7a7e7e"></div>
<div class="a" style="left:0;top:465px;width:1543px;height:52px;background:linear-gradient(#c3c7c7,#b8bcbc)"></div>
<div class="a" style="left:0;top:517px;width:1543px;height:1px;background:#7a7e7e"></div>
<div class="a" style="left:0;top:518px;width:1543px;height:4px;background:#f6f7f7"></div>
<div class="a" style="left:0;top:510px;width:0;height:0;border-left:6px solid #fafafa;border-top:7px solid transparent"></div>
<div class="a" style="left:7px;top:467px;width:13px;height:12px;background:#d2d6d6;color:#8a9292;font-size:11px;text-align:center;line-height:12px">M</div>
<div class="a" style="left:0;top:485px;width:1543px;height:12px;font-size:9.5px;line-height:12px;color:#1e3048;white-space:nowrap"><span class="ofl" style="left:-1.3px">OFFLINE</span><span class="ofl" style="left:51.7px">OFFLINE</span><span class="ofl" style="left:104.7px">OFFLINE</span><span class="ofl" style="left:157.7px">OFFLINE</span><span class="ofl" style="left:210.7px">OFFLINE</span><span class="ofl" style="left:263.7px">OFFLINE</span><span class="ofl" style="left:316.7px">OFFLINE</span><span class="ofl" style="left:369.7px">OFFLINE</span><span class="ofl" style="left:422.7px">OFFLINE</span><span class="ofl" style="left:475.7px">OFFLINE</span><span class="ofl" style="left:528.7px">OFFLINE</span><span class="ofl" style="left:581.7px">OFFLINE</span><span class="ofl" style="left:634.7px">OFFLINE</span><span class="ofl" style="left:687.7px">OFFLINE</span><span class="ofl" style="left:740.7px">OFFLINE</span><span class="ofl" style="left:793.7px">OFFLINE</span><span class="ofl" style="left:846.7px">OFFLINE</span><span class="ofl" style="left:899.7px">OFFLINE</span><span class="ofl" style="left:952.7px">OFFLINE</span><span class="ofl" style="left:1005.7px">OFFLINE</span><span class="ofl" style="left:1058.7px">OFFLINE</span><span class="ofl" style="left:1111.7px">OFFLINE</span><span class="ofl" style="left:1164.7px">OFFLINE</span><span class="ofl" style="left:1217.7px">OFFLINE</span><span class="ofl" style="left:1270.7px">OFFLINE</span><span class="ofl" style="left:1323.7px">OFFLINE</span><span class="ofl" style="left:1376.7px">OFFLINE</span><span class="ofl" style="left:1429.7px">OFFLINE</span><span class="ofl" style="left:1482.7px">OFFLINE</span><span class="ofl" style="left:1535.7px">OFFLINE</span></div>
<div class="a" style="left:0;top:522px;width:1543px;height:1px;background:#7a7e7e"></div>
<div class="a" style="left:0;top:523px;width:1543px;height:52px;background:linear-gradient(#c3c7c7,#b8bcbc)"></div>
<div class="a" style="left:0;top:575px;width:1543px;height:1px;background:#7a7e7e"></div>
<div class="a" style="left:0;top:576px;width:1543px;height:4px;background:#f6f7f7"></div>
<div class="a" style="left:0;top:568px;width:0;height:0;border-left:6px solid #fafafa;border-top:7px solid transparent"></div>
<div class="a" style="left:7px;top:525px;width:13px;height:12px;background:#d2d6d6;color:#8a9292;font-size:11px;text-align:center;line-height:12px">M</div>
<div class="a" style="left:0;top:543px;width:1543px;height:12px;font-size:9.5px;line-height:12px;color:#1e3048;white-space:nowrap"><span class="ofl" style="left:-1.3px">OFFLINE</span><span class="ofl" style="left:51.7px">OFFLINE</span><span class="ofl" style="left:104.7px">OFFLINE</span><span class="ofl" style="left:157.7px">OFFLINE</span><span class="ofl" style="left:210.7px">OFFLINE</span><span class="ofl" style="left:263.7px">OFFLINE</span><span class="ofl" style="left:316.7px">OFFLINE</span><span class="ofl" style="left:369.7px">OFFLINE</span><span class="ofl" style="left:422.7px">OFFLINE</span><span class="ofl" style="left:475.7px">OFFLINE</span><span class="ofl" style="left:528.7px">OFFLINE</span><span class="ofl" style="left:581.7px">OFFLINE</span><span class="ofl" style="left:634.7px">OFFLINE</span><span class="ofl" style="left:687.7px">OFFLINE</span><span class="ofl" style="left:740.7px">OFFLINE</span><span class="ofl" style="left:793.7px">OFFLINE</span><span class="ofl" style="left:846.7px">OFFLINE</span><span class="ofl" style="left:899.7px">OFFLINE</span><span class="ofl" style="left:952.7px">OFFLINE</span><span class="ofl" style="left:1005.7px">OFFLINE</span><span class="ofl" style="left:1058.7px">OFFLINE</span><span class="ofl" style="left:1111.7px">OFFLINE</span><span class="ofl" style="left:1164.7px">OFFLINE</span><span class="ofl" style="left:1217.7px">OFFLINE</span><span class="ofl" style="left:1270.7px">OFFLINE</span><span class="ofl" style="left:1323.7px">OFFLINE</span><span class="ofl" style="left:1376.7px">OFFLINE</span><span class="ofl" style="left:1429.7px">OFFLINE</span><span class="ofl" style="left:1482.7px">OFFLINE</span><span class="ofl" style="left:1535.7px">OFFLINE</span></div>
<div class="a" style="left:0;top:580px;width:1543px;height:1px;background:#7a7e7e"></div>
<div class="a" style="left:0;top:581px;width:1543px;height:52px;background:linear-gradient(#c3c7c7,#b8bcbc)"></div>
<div class="a" style="left:0;top:633px;width:1543px;height:1px;background:#7a7e7e"></div>
<div class="a" style="left:0;top:634px;width:1543px;height:4px;background:#f6f7f7"></div>
<div class="a" style="left:0;top:626px;width:0;height:0;border-left:6px solid #fafafa;border-top:7px solid transparent"></div>
<div class="a" style="left:7px;top:583px;width:13px;height:12px;background:#d2d6d6;color:#8a9292;font-size:11px;text-align:center;line-height:12px">M</div>
<div class="a" style="left:0;top:601px;width:1543px;height:12px;font-size:9.5px;line-height:12px;color:#1e3048;white-space:nowrap"><span class="ofl" style="left:-1.3px">OFFLINE</span><span class="ofl" style="left:51.7px">OFFLINE</span><span class="ofl" style="left:104.7px">OFFLINE</span><span class="ofl" style="left:157.7px">OFFLINE</span><span class="ofl" style="left:210.7px">OFFLINE</span><span class="ofl" style="left:263.7px">OFFLINE</span><span class="ofl" style="left:316.7px">OFFLINE</span><span class="ofl" style="left:369.7px">OFFLINE</span><span class="ofl" style="left:422.7px">OFFLINE</span><span class="ofl" style="left:475.7px">OFFLINE</span><span class="ofl" style="left:528.7px">OFFLINE</span><span class="ofl" style="left:581.7px">OFFLINE</span><span class="ofl" style="left:634.7px">OFFLINE</span><span class="ofl" style="left:687.7px">OFFLINE</span><span class="ofl" style="left:740.7px">OFFLINE</span><span class="ofl" style="left:793.7px">OFFLINE</span><span class="ofl" style="left:846.7px">OFFLINE</span><span class="ofl" style="left:899.7px">OFFLINE</span><span class="ofl" style="left:952.7px">OFFLINE</span><span class="ofl" style="left:1005.7px">OFFLINE</span><span class="ofl" style="left:1058.7px">OFFLINE</span><span class="ofl" style="left:1111.7px">OFFLINE</span><span class="ofl" style="left:1164.7px">OFFLINE</span><span class="ofl" style="left:1217.7px">OFFLINE</span><span class="ofl" style="left:1270.7px">OFFLINE</span><span class="ofl" style="left:1323.7px">OFFLINE</span><span class="ofl" style="left:1376.7px">OFFLINE</span><span class="ofl" style="left:1429.7px">OFFLINE</span><span class="ofl" style="left:1482.7px">OFFLINE</span><span class="ofl" style="left:1535.7px">OFFLINE</span></div>
<div class="a" style="left:0;top:638px;width:1543px;height:1px;background:#7a7e7e"></div>
<div class="a" style="left:0;top:639px;width:1543px;height:52px;background:linear-gradient(#c3c7c7,#b8bcbc)"></div>
<div class="a" style="left:0;top:691px;width:1543px;height:1px;background:#7a7e7e"></div>
<div class="a" style="left:0;top:692px;width:1543px;height:4px;background:#f6f7f7"></div>
<div class="a" style="left:0;top:684px;width:0;height:0;border-left:6px solid #fafafa;border-top:7px solid transparent"></div>
<div class="a" style="left:7px;top:641px;width:13px;height:12px;background:#d2d6d6;color:#8a9292;font-size:11px;text-align:center;line-height:12px">M</div>
<div class="a" style="left:0;top:659px;width:1543px;height:12px;font-size:9.5px;line-height:12px;color:#1e3048;white-space:nowrap"><span class="ofl" style="left:-1.3px">OFFLINE</span><span class="ofl" style="left:51.7px">OFFLINE</span><span class="ofl" style="left:104.7px">OFFLINE</span><span class="ofl" style="left:157.7px">OFFLINE</span><span class="ofl" style="left:210.7px">OFFLINE</span><span class="ofl" style="left:263.7px">OFFLINE</span><span class="ofl" style="left:316.7px">OFFLINE</span><span class="ofl" style="left:369.7px">OFFLINE</span><span class="ofl" style="left:422.7px">OFFLINE</span><span class="ofl" style="left:475.7px">OFFLINE</span><span class="ofl" style="left:528.7px">OFFLINE</span><span class="ofl" style="left:581.7px">OFFLINE</span><span class="ofl" style="left:634.7px">OFFLINE</span><span class="ofl" style="left:687.7px">OFFLINE</span><span class="ofl" style="left:740.7px">OFFLINE</span><span class="ofl" style="left:793.7px">OFFLINE</span><span class="ofl" style="left:846.7px">OFFLINE</span><span class="ofl" style="left:899.7px">OFFLINE</span><span class="ofl" style="left:952.7px">OFFLINE</span><span class="ofl" style="left:1005.7px">OFFLINE</span><span class="ofl" style="left:1058.7px">OFFLINE</span><span class="ofl" style="left:1111.7px">OFFLINE</span><span class="ofl" style="left:1164.7px">OFFLINE</span><span class="ofl" style="left:1217.7px">OFFLINE</span><span class="ofl" style="left:1270.7px">OFFLINE</span><span class="ofl" style="left:1323.7px">OFFLINE</span><span class="ofl" style="left:1376.7px">OFFLINE</span><span class="ofl" style="left:1429.7px">OFFLINE</span><span class="ofl" style="left:1482.7px">OFFLINE</span><span class="ofl" style="left:1535.7px">OFFLINE</span></div>
<div class="a" style="left:0;top:696px;width:1543px;height:1px;background:#7a7e7e"></div>
<div class="a" style="left:0;top:697px;width:1543px;height:52px;background:linear-gradient(#c3c7c7,#b8bcbc)"></div>
<div class="a" style="left:0;top:749px;width:1543px;height:1px;background:#7a7e7e"></div>
<div class="a" style="left:0;top:750px;width:1543px;height:4px;background:#f6f7f7"></div>
<div class="a" style="left:0;top:742px;width:0;height:0;border-left:6px solid #fafafa;border-top:7px solid transparent"></div>
<div class="a" style="left:7px;top:699px;width:13px;height:12px;background:#d2d6d6;color:#8a9292;font-size:11px;text-align:center;line-height:12px">M</div>
<div class="a" style="left:0;top:717px;width:1543px;height:12px;font-size:9.5px;line-height:12px;color:#1e3048;white-space:nowrap"><span class="ofl" style="left:-1.3px">OFFLINE</span><span class="ofl" style="left:51.7px">OFFLINE</span><span class="ofl" style="left:104.7px">OFFLINE</span><span class="ofl" style="left:157.7px">OFFLINE</span><span class="ofl" style="left:210.7px">OFFLINE</span><span class="ofl" style="left:263.7px">OFFLINE</span><span class="ofl" style="left:316.7px">OFFLINE</span><span class="ofl" style="left:369.7px">OFFLINE</span><span class="ofl" style="left:422.7px">OFFLINE</span><span class="ofl" style="left:475.7px">OFFLINE</span><span class="ofl" style="left:528.7px">OFFLINE</span><span class="ofl" style="left:581.7px">OFFLINE</span><span class="ofl" style="left:634.7px">OFFLINE</span><span class="ofl" style="left:687.7px">OFFLINE</span><span class="ofl" style="left:740.7px">OFFLINE</span><span class="ofl" style="left:793.7px">OFFLINE</span><span class="ofl" style="left:846.7px">OFFLINE</span><span class="ofl" style="left:899.7px">OFFLINE</span><span class="ofl" style="left:952.7px">OFFLINE</span><span class="ofl" style="left:1005.7px">OFFLINE</span><span class="ofl" style="left:1058.7px">OFFLINE</span><span class="ofl" style="left:1111.7px">OFFLINE</span><span class="ofl" style="left:1164.7px">OFFLINE</span><span class="ofl" style="left:1217.7px">OFFLINE</span><span class="ofl" style="left:1270.7px">OFFLINE</span><span class="ofl" style="left:1323.7px">OFFLINE</span><span class="ofl" style="left:1376.7px">OFFLINE</span><span class="ofl" style="left:1429.7px">OFFLINE</span><span class="ofl" style="left:1482.7px">OFFLINE</span><span class="ofl" style="left:1535.7px">OFFLINE</span></div>
<div class="a" style="left:0;top:754px;width:1543px;height:1px;background:#7a7e7e"></div>
<div class="a" style="left:0;top:755px;width:1543px;height:52px;background:linear-gradient(#c3c7c7,#b8bcbc)"></div>
<div class="a" style="left:0;top:807px;width:1543px;height:1px;background:#7a7e7e"></div>
<div class="a" style="left:0;top:808px;width:1543px;height:4px;background:#f6f7f7"></div>
<div class="a" style="left:0;top:800px;width:0;height:0;border-left:6px solid #fafafa;border-top:7px solid transparent"></div>
<div class="a" style="left:7px;top:757px;width:13px;height:12px;background:#d2d6d6;color:#8a9292;font-size:11px;text-align:center;line-height:12px">M</div>
<div class="a" style="left:0;top:775px;width:1543px;height:12px;font-size:9.5px;line-height:12px;color:#1e3048;white-space:nowrap"><span class="ofl" style="left:-1.3px">OFFLINE</span><span class="ofl" style="left:51.7px">OFFLINE</span><span class="ofl" style="left:104.7px">OFFLINE</span><span class="ofl" style="left:157.7px">OFFLINE</span><span class="ofl" style="left:210.7px">OFFLINE</span><span class="ofl" style="left:263.7px">OFFLINE</span><span class="ofl" style="left:316.7px">OFFLINE</span><span class="ofl" style="left:369.7px">OFFLINE</span><span class="ofl" style="left:422.7px">OFFLINE</span><span class="ofl" style="left:475.7px">OFFLINE</span><span class="ofl" style="left:528.7px">OFFLINE</span><span class="ofl" style="left:581.7px">OFFLINE</span><span class="ofl" style="left:634.7px">OFFLINE</span><span class="ofl" style="left:687.7px">OFFLINE</span><span class="ofl" style="left:740.7px">OFFLINE</span><span class="ofl" style="left:793.7px">OFFLINE</span><span class="ofl" style="left:846.7px">OFFLINE</span><span class="ofl" style="left:899.7px">OFFLINE</span><span class="ofl" style="left:952.7px">OFFLINE</span><span class="ofl" style="left:1005.7px">OFFLINE</span><span class="ofl" style="left:1058.7px">OFFLINE</span><span class="ofl" style="left:1111.7px">OFFLINE</span><span class="ofl" style="left:1164.7px">OFFLINE</span><span class="ofl" style="left:1217.7px">OFFLINE</span><span class="ofl" style="left:1270.7px">OFFLINE</span><span class="ofl" style="left:1323.7px">OFFLINE</span><span class="ofl" style="left:1376.7px">OFFLINE</span><span class="ofl" style="left:1429.7px">OFFLINE</span><span class="ofl" style="left:1482.7px">OFFLINE</span><span class="ofl" style="left:1535.7px">OFFLINE</span></div>
<div class="a" style="left:0;top:812px;width:1543px;height:1px;background:#7a7e7e"></div>
<div class="a" style="left:0;top:813px;width:1543px;height:52px;background:linear-gradient(#c3c7c7,#b8bcbc)"></div>
<div class="a" style="left:0;top:865px;width:1543px;height:1px;background:#7a7e7e"></div>
<div class="a" style="left:0;top:866px;width:1543px;height:4px;background:#f6f7f7"></div>
<div class="a" style="left:0;top:858px;width:0;height:0;border-left:6px solid #fafafa;border-top:7px solid transparent"></div>
<div class="a" style="left:7px;top:815px;width:13px;height:12px;background:#d2d6d6;color:#8a9292;font-size:11px;text-align:center;line-height:12px">M</div>
<div class="a" style="left:0;top:833px;width:1543px;height:12px;font-size:9.5px;line-height:12px;color:#1e3048;white-space:nowrap"><span class="ofl" style="left:-1.3px">OFFLINE</span><span class="ofl" style="left:51.7px">OFFLINE</span><span class="ofl" style="left:104.7px">OFFLINE</span><span class="ofl" style="left:157.7px">OFFLINE</span><span class="ofl" style="left:210.7px">OFFLINE</span><span class="ofl" style="left:263.7px">OFFLINE</span><span class="ofl" style="left:316.7px">OFFLINE</span><span class="ofl" style="left:369.7px">OFFLINE</span><span class="ofl" style="left:422.7px">OFFLINE</span><span class="ofl" style="left:475.7px">OFFLINE</span><span class="ofl" style="left:528.7px">OFFLINE</span><span class="ofl" style="left:581.7px">OFFLINE</span><span class="ofl" style="left:634.7px">OFFLINE</span><span class="ofl" style="left:687.7px">OFFLINE</span><span class="ofl" style="left:740.7px">OFFLINE</span><span class="ofl" style="left:793.7px">OFFLINE</span><span class="ofl" style="left:846.7px">OFFLINE</span><span class="ofl" style="left:899.7px">OFFLINE</span><span class="ofl" style="left:952.7px">OFFLINE</span><span class="ofl" style="left:1005.7px">OFFLINE</span><span class="ofl" style="left:1058.7px">OFFLINE</span><span class="ofl" style="left:1111.7px">OFFLINE</span><span class="ofl" style="left:1164.7px">OFFLINE</span><span class="ofl" style="left:1217.7px">OFFLINE</span><span class="ofl" style="left:1270.7px">OFFLINE</span><span class="ofl" style="left:1323.7px">OFFLINE</span><span class="ofl" style="left:1376.7px">OFFLINE</span><span class="ofl" style="left:1429.7px">OFFLINE</span><span class="ofl" style="left:1482.7px">OFFLINE</span><span class="ofl" style="left:1535.7px">OFFLINE</span></div>
<div class="a" style="left:88px;top:0;width:1px;height:843px;background:rgba(40,50,50,0.18)"></div>
<div class="a" style="left:177px;top:0;width:1px;height:843px;background:rgba(40,50,50,0.18)"></div>
<div class="a" style="left:266px;top:0;width:1px;height:843px;background:rgba(40,50,50,0.18)"></div>
<div class="a" style="left:356px;top:0;width:1px;height:843px;background:rgba(40,50,50,0.18)"></div>
<div class="a" style="left:445px;top:0;width:1px;height:843px;background:rgba(40,50,50,0.18)"></div>
<div class="a" style="left:534px;top:0;width:1px;height:843px;background:rgba(40,50,50,0.18)"></div>
<div class="a" style="left:623px;top:0;width:1px;height:843px;background:rgba(40,50,50,0.18)"></div>
<div class="a" style="left:712px;top:0;width:1px;height:843px;background:rgba(40,50,50,0.18)"></div>
<div class="a" style="left:801px;top:0;width:1px;height:843px;background:rgba(40,50,50,0.18)"></div>
<div class="a" style="left:891px;top:0;width:1px;height:843px;background:rgba(40,50,50,0.18)"></div>
<div class="a" style="left:980px;top:0;width:1px;height:843px;background:rgba(40,50,50,0.18)"></div>
<div class="a" style="left:1069px;top:0;width:1px;height:843px;background:rgba(40,50,50,0.18)"></div>
<div class="a" style="left:1158px;top:0;width:1px;height:843px;background:rgba(40,50,50,0.18)"></div>
<div class="a" style="left:1247px;top:0;width:1px;height:843px;background:rgba(40,50,50,0.18)"></div>
<div class="a" style="left:1336px;top:0;width:1px;height:843px;background:rgba(40,50,50,0.18)"></div>
<div class="a" style="left:1426px;top:0;width:1px;height:843px;background:rgba(40,50,50,0.18)"></div>
<div class="a" style="left:1515px;top:0;width:1px;height:843px;background:rgba(40,50,50,0.18)"></div>
</div>
<div class="a" style="left:0px;top:529px;width:62px;height:2px;background:#465050"></div>
<div class="a" style="left:0px;top:541px;width:62px;height:45px;background:#353535"></div>
<div class="a" style="left:0px;top:586px;width:62px;height:1px;background:#303131"></div>
<div class="a" style="left:19px;top:597px;width:21px;height:1px;background:#555"></div>
<div class="a" style="left:0px;top:606px;width:62px;height:14px;background:#353535;border-radius:0 8px 8px 0"></div>
<div class="a" style="left:0px;top:622px;width:62px;height:14px;background:#353535;border-radius:0 8px 8px 0"></div>
<div class="a" style="left:0px;top:638px;width:62px;height:14px;background:#353535;border-radius:0 8px 8px 0"></div>
<div class="a" style="left:13px;top:663px;width:34px;height:1px;background:#555"></div>
<div class="a" style="left:0px;top:670px;width:64px;height:31px;background:#1e1f1f"></div>
<div class="a" style="left:0px;top:671px;width:12px;height:29px;background:linear-gradient(#aab4b4 50%,#9aa4a4 50%)"></div>
<div class="a" style="left:13px;top:671px;width:17px;height:29px;background:linear-gradient(#a8b2b2 50%,#98a2a2 50%)"></div>
<div class="a" style="left:31px;top:671px;width:32px;height:14px;background:#2a2c2c"></div>
<svg class="a" style="left:0px;top:671px" width="64" height="30" viewBox="0 0 64 30"><path d="M2.5 5 A3.5 3.5 0 1 0 8 5" fill="none" stroke="#333" stroke-width="1.1"/><path d="M5.3 3 V7" stroke="#333" stroke-width="1.1"/><path d="M15 3 H28 V8 L21.5 13 L15 8Z" fill="#c0c8c8"/><text x="21.5" y="9" font-family="Liberation Sans" font-size="7" text-anchor="middle" fill="#8a9494">IN</text><text x="6" y="25" font-family="Liberation Sans" font-size="8" text-anchor="middle" fill="#2a2e2e">FX</text><text x="21.5" y="25" font-family="Liberation Sans" font-size="8" text-anchor="middle" fill="#2a2e2e">FX</text><text x="39" y="10" font-family="Liberation Sans" font-size="8" font-weight="bold" text-anchor="middle" fill="#18a040">M</text><text x="48" y="10" font-family="Liberation Sans" font-size="7" text-anchor="middle" fill="#444">R</text><text x="56" y="10" font-family="Liberation Sans" font-size="7" text-anchor="middle" fill="#444">S</text><text x="47" y="25" font-family="Liberation Sans" font-size="7.5" text-anchor="middle" fill="#c8c8c8">ROUTE</text></svg>
<div class="t" style="left:-1px;top:704px;font-size:12px;line-height:16px;color:#e8ecec">Altiverb ..64</div>
<div class="a" style="left:0px;top:723px;width:64px;height:214px;background:#d6dada"></div>
<div class="a" style="left:7.9px;top:729.5px;width:15px;height:15px;border-radius:50%;background:linear-gradient(#f6f6f6,#b8bcbc);border:1px solid #777;box-shadow:0 1px 1px rgba(0,0,0,.25)"></div>
<div class="a" style="left:37.0px;top:729.5px;width:15px;height:15px;border-radius:50%;background:linear-gradient(#f6f6f6,#b8bcbc);border:1px solid #777;box-shadow:0 1px 1px rgba(0,0,0,.25)"></div>
<div class="a" style="left:15px;top:731px;width:1.3px;height:4px;background:#222"></div>
<svg class="a" style="left:37px;top:730px" width="15" height="15" viewBox="0 0 15 15"><path d="M8 8 L10 10" stroke="#222" stroke-width="1.2"/></svg>
<div class="t" style="left:-2px;top:748px;font-size:11px;line-height:13px;color:#333;letter-spacing:-0.3px">center</div>
<div class="t" style="left:30px;top:748px;font-size:11px;line-height:13px;color:#333;letter-spacing:-0.3px">100W</div>
<svg class="a" style="left:0px;top:765px" width="56" height="172" viewBox="0 0 56 172"><path d="M0 0 H36 Q38 0 38 2 V122 Q38 130 46 130 Q53 132 53 150 Q53 164 40 164 H0 Z" fill="#262828"/></svg>
<div class="t" style="left:4px;top:769px;font-size:11px;line-height:13px;color:#6a7888">0.00</div>
<div class="t" style="left:0px;top:781px;font-size:9px;line-height:11px;color:#8a9090">-98.</div>
<div class="a" style="left:0px;top:795px;width:5px;height:131px;background:#5a2420"></div>
<div class="a" style="left:6px;top:795px;width:9px;height:131px;background:#5a2420"></div>
<div class="t" style="left:0px;top:802px;font-size:9px;line-height:11px;color:#a8b0b0">-6-</div>
<div class="t" style="left:0px;top:828px;font-size:9px;line-height:11px;color:#a8b0b0">-18-</div>
<div class="t" style="left:0px;top:854px;font-size:9px;line-height:11px;color:#a8b0b0">-30-</div>
<div class="t" style="left:0px;top:880px;font-size:9px;line-height:11px;color:#a8b0b0">-42-</div>
<div class="t" style="left:0px;top:906px;font-size:9px;line-height:11px;color:#a8b0b0">-54-</div>
<div class="a" style="left:25px;top:791px;width:1px;height:130px;background:#0e0e0e"></div>
<div class="a" style="left:17px;top:813px;width:17px;height:34px;background:#1a1a1a"></div>
<div class="a" style="left:18px;top:814px;width:15px;height:15px;background:linear-gradient(#e0e0e0,#606060 60%,#9a9a9a)"></div>
<div class="a" style="left:18px;top:830px;width:15px;height:16px;background:linear-gradient(#d8d8d8,#eee 30%,#555 70%,#999)"></div>
<div class="a" style="left:43px;top:765px;width:16px;height:16px;background:linear-gradient(#fff,#e4e4e4);border:1px solid #666"></div>
<div class="t" style="left:43px;top:765px;width:16px;text-align:center;font-size:11px;line-height:16px;color:#5a2222">M</div>
<div class="a" style="left:43px;top:786px;width:16px;height:15px;background:linear-gradient(#fff,#e4e4e4);border:1px solid #666"></div>
<div class="t" style="left:43px;top:786px;width:16px;text-align:center;font-size:11px;line-height:15px;color:#333">S</div>
<div class="a" style="left:43px;top:806px;width:16px;height:13px;background:#9aa2a2;border:1px solid #666"></div>
<svg class="a" style="left:43px;top:806px" width="16" height="13" viewBox="0 0 16 13"><path d="M3 9 L8 4 L13 8" stroke="#444" fill="none" stroke-width="1"/></svg>
<div class="t" style="left:44px;top:818px;font-size:10px;line-height:12px;color:#555">tr</div>
<svg class="a" style="left:43px;top:829px" width="15" height="15" viewBox="0 0 15 15"><circle cx="7.5" cy="7.5" r="6.5" fill="none" stroke="#888" stroke-width="1"/><circle cx="7.5" cy="7.5" r="3.3" fill="none" stroke="#777"/><path d="M3.5 11.5 L11.5 3.5" stroke="#777"/></svg>
<svg class="a" style="left:42px;top:852px" width="18" height="62" viewBox="0 0 18 62"><rect x="1" y="1" width="16" height="14" fill="#a6aeae"/><path d="M6 5 H9 L12 3 V13 L9 11 H6Z" fill="none" stroke="#d8dcdc" stroke-width="1"/><path d="M9 15 V19" stroke="#a6aeae" stroke-width="2"/><rect x="1" y="19" width="16" height="25" rx="3" fill="#a6aeae"/><text x="9" y="29" font-family="Liberation Sans" font-size="9" text-anchor="middle" fill="#e0e4e4">IN</text><circle cx="9" cy="37" r="5" fill="none" stroke="#d8dcdc"/><path d="M6 35 H12 L9 40Z" fill="#d8dcdc"/><path d="M9 44 V55 M5 52 L9 58 L13 52" stroke="#a6aeae" stroke-width="2" fill="none"/></svg>
<div class="a" style="left:34px;top:911px;width:18px;height:18px;border-radius:50%;background:#c82818"></div>
<div class="t" style="left:34px;top:911px;width:18px;text-align:center;font-size:11px;font-weight:bold;line-height:18px;color:#f0d0b0">A</div>
<div class="a" style="left:0px;top:937px;width:64px;height:18px;background:#8e9898"></div>
<div class="a" style="left:26px;top:932.5px;width:7px;height:7px;border-radius:50%;background:#e0e0e0;border:1px solid #333"></div>
<div class="t" style="left:22px;top:939px;width:15px;text-align:center;font-size:12px;line-height:15px;color:#c8ecf4">1</div>
<div class="a" style="left:64px;top:44px;width:7px;height:931px;background:#333"></div>
<div class="a" style="left:0px;top:955px;width:64px;height:22px;background:#2c2d2d"></div>
<svg class="a" style="left:0px;top:955px" width="64" height="20" viewBox="0 0 64 20"><circle cx="4.5" cy="8.5" r="5.5" fill="#1e1f1f"/><path d="M2 8.5 L6 6 V11Z" fill="#666"/><circle cx="55.5" cy="8.5" r="5.5" fill="#1e1f1f"/><path d="M58 8.5 L54 6 V11Z" fill="#666"/><rect x="14" y="3.5" width="4.5" height="10" rx="2.2" fill="#2a2b2b" stroke="#666"/></svg>
<div class="a" style="left:0px;top:972px;width:64px;height:6px;background:#3a4545"></div>
<div class="a" style="left:0px;top:974px;width:60px;height:1px;background:#2a3232"></div>
<div class="a" style="left:71px;top:959px;width:283px;height:19px;background:#333"></div>
<div class="a" style="left:75px;top:959px;width:279px;height:1px;background:#8a8e8e"></div>
<div class="t" style="left:75px;top:961px;font-size:10.5px;line-height:14px;color:#c8cccc">Altiverb 6.64 [input] Analog In 1 Delta-AP192</div>
<div class="a" style="left:354px;top:959px;width:1558px;height:19px;background:#333"></div>
<svg class="a" style="left:354px;top:960px" width="20" height="16" viewBox="0 0 20 16"><circle cx="7" cy="7.5" r="6" fill="#1e1f1f"/><path d="M4 7.5 L9 4.5 V10.5Z" fill="#6a6a6a"/></svg>
<div class="a" style="left:373px;top:962px;width:761px;height:11px;background:#4a4a4a;border-radius:5.5px"></div>
<div class="a" style="left:378px;top:965px;width:5px;height:5px;background:#151515;border-radius:50%"></div>
<div class="a" style="left:751px;top:964px;width:2px;height:7px;background:#151515"></div>
<div class="a" style="left:1126px;top:965px;width:5px;height:5px;background:#151515;border-radius:50%"></div>
<svg class="a" style="left:1843px;top:959px" width="60" height="18" viewBox="0 0 60 18"><circle cx="8" cy="8.5" r="6" fill="#1e1f1f"/><path d="M6 6 L10.5 8.5 L6 11Z" fill="#555"/><path d="M19 8.5 H29 M24 3.5 V13.5" stroke="#6a6a6a" stroke-width="2.4"/><path d="M35 4 V13" stroke="#3a3a3a" stroke-width="1"/><path d="M41 8.5 H51" stroke="#6a6a6a" stroke-width="2.4"/></svg>
<div class="a" style="left:1897px;top:116px;width:15px;height:843px;background:#2b2b2b"></div>
<svg class="a" style="left:1897px;top:116px" width="15" height="20" viewBox="0 0 15 20"><circle cx="7.5" cy="9" r="6" fill="#1a1a1a"/><path d="M4.5 11 L7.5 6.5 L10.5 11Z" fill="#555"/></svg>
<div class="a" style="left:1900px;top:136px;width:11px;height:159px;background:#444;border-radius:5px"></div>
<div class="a" style="left:1901px;top:214px;width:9px;height:2px;background:#151515"></div>
<svg class="a" style="left:1897px;top:903px" width="15" height="80" viewBox="0 0 15 80"><circle cx="7.5" cy="10" r="6" fill="#1a1a1a"/><path d="M4.5 8 L7.5 12.5 L10.5 8Z" fill="#555"/><path d="M3 25 H13 M8 20 V30" stroke="#6a6a6a" stroke-width="2.4"/><path d="M2 35 H13" stroke="#3a3a3a"/><path d="M3 43 H13" stroke="#6a6a6a" stroke-width="2.4"/></svg>
<div class="a" style="left:0px;top:978px;width:1912px;height:29px;background:#333333"></div>
<div class="a" style="left:0px;top:978px;width:1912px;height:1px;background:#262727"></div>
<div class="t" style="left:104px;top:977px;font-size:21.5px;line-height:30px;color:#8c8c8c;-webkit-text-stroke:0.5px #8c8c8c">0:00.000</div>
<div class="t" style="left:227px;top:981px;font-size:14.5px;line-height:24px;color:#8c8c8c">[Stopped]</div>
<div class="a" style="left:296px;top:980px;width:1px;height:25px;background:#262727"></div>
<div class="t" style="left:309px;top:978px;width:26px;text-align:center;font-size:10px;line-height:14px;color:#a8acac">BPM</div>
<div class="t" style="left:309px;top:992px;width:26px;text-align:center;font-size:10px;line-height:14px;color:#a8acac">120</div>
<div class="a" style="left:348px;top:980px;width:37px;height:26px;background:#2a2b2b"></div>
<div class="t" style="left:348px;top:979px;width:37px;text-align:center;font-size:12px;line-height:27px;color:#a8acac">4/4</div>
<svg class="a" style="left:390px;top:982px" width="22" height="22" viewBox="0 0 22 22"><circle cx="10" cy="10" r="8" fill="#2a2a2a" stroke="#1a1a1a" stroke-width="1.5"/><path d="M10 4 V8" stroke="#aaa" stroke-width="1"/></svg>
<div class="t" style="left:413px;top:979px;font-size:12px;line-height:27px;color:#8a8e8e">Rate:</div>
<div class="t" style="left:456px;top:979px;font-size:12px;line-height:27px;color:#8a8e8e">1.0</div>
<svg class="a" style="left:908px;top:979px" width="330" height="28" viewBox="0 0 330 28"><defs><linearGradient id="gl" x1="0" y1="0" x2="0" y2="1"><stop offset="0" stop-color="#e8eaea"/><stop offset="1" stop-color="#a8b0b0"/></linearGradient></defs>
<rect x="2.5" y="2.5" width="55" height="23" rx="11.5" fill="#2a2b2b" stroke="#1a1b1b"/>
<path d="M30 3 V25" stroke="#1a1b1b"/>
<path d="M12 9 V19 M21 9 L14 14 L21 19Z" stroke="#6a6e6e" fill="#6a6e6e" stroke-width="1.6"/>
<path d="M49 9 V19 M38 9 L45 14 L38 19Z" stroke="#6a6e6e" fill="#6a6e6e" stroke-width="1.6"/>
<rect x="61.5" y="2.5" width="97" height="23" rx="11.5" fill="#2a2b2b" stroke="#1a1b1b"/>
<rect x="74" y="10" width="9" height="9" fill="#777"/>
<path d="M93 2.5 H130 V25.5 H93Z" fill="url(#gl)"/>
<path d="M130 2.5 H147 A11.5 11.5 0 0 1 147 25.5 H130Z" fill="url(#gl)"/>
<path d="M130 2.5 V25.5" stroke="#333"/>
<path d="M106 9 L116 14.5 L106 20Z" fill="#111"/>
<rect x="137" y="9" width="2.5" height="10" fill="#111"/><rect x="142" y="9" width="2.5" height="10" fill="#111"/>
<circle cx="174" cy="14" r="12" fill="#7a3a2c"/><path d="M162 14 A12 12 0 0 0 186 14Z" fill="#6a2c20"/><circle cx="174" cy="14" r="5.5" fill="none" stroke="#d8c8c0" stroke-width="2"/>
<circle cx="201.5" cy="14" r="12" fill="#80b8cc"/><path d="M196 11 A6 6 0 0 1 207 12 M207 17 A6 6 0 0 1 196 16" stroke="#fff" stroke-width="2" fill="none"/>
<rect x="218" y="5" width="102" height="19" fill="#2a2b2b"/>
<path d="M223 17 L228 11 L233 16" stroke="#aaa" fill="none" stroke-width="1.2"/><rect x="222" y="16" width="2.5" height="2.5" fill="#aaa"/><rect x="227" y="10" width="2.5" height="2.5" fill="#aaa"/><rect x="232" y="15" width="2.5" height="2.5" fill="#aaa"/>
<text x="237" y="18" font-family="Liberation Sans" font-size="8" font-weight="bold" fill="#9a9e9e">GLOBAL</text>
<rect x="274" y="6" width="46" height="17" fill="#2e2f2f"/>
<text x="276" y="18" font-family="Liberation Sans" font-size="10" fill="#9a9e9e">none</text>
<circle cx="310" cy="14.5" r="5" fill="none" stroke="#777"/><path d="M307.5 13 H312.5 L310 16.5Z" fill="#777"/></svg>
<div class="t" style="left:1657px;top:979px;font-size:12px;line-height:27px;color:#8a8e8e">Selection:</div>
<div class="t" style="left:1720px;top:979px;font-size:12px;line-height:27px;color:#a8acac">0:00.000</div>
<div class="t" style="left:1787px;top:979px;font-size:12px;line-height:27px;color:#a8acac">0:00.000</div>
<div class="t" style="left:1853px;top:979px;font-size:12px;line-height:27px;color:#a8acac">0:00.000</div>
<div class="a" style="left:0px;top:1007px;width:1912px;height:7px;background:#0c1218"></div>
<div class="a" style="left:436px;top:1007px;width:50px;height:7px;background:#34444a"></div>
<svg class="a" style="left:1786px;top:1007px" width="10" height="7" viewBox="0 0 10 7"><path d="M0.5 0 V7 L6 6Z" fill="#f0f0f0" stroke="#000" stroke-width="0.6"/></svg>
<div class="t" style="left:1864px;top:1009px;font-size:11px;font-weight:bold;line-height:12px;color:#e8e8e8">00:00</div>
<div class="a" style="left:821px;top:134px;width:1003px;height:735px;background:#b9c0c0;box-shadow:0 0 12px rgba(0,0,0,0.35)">
<div class="a" style="left:0;top:0;width:1003px;height:30px;background:#fff"></div>
<div class="t" style="left:8px;top:7px;font-size:12px;line-height:16px;color:#8a9a9a">Actions</div>
</div>
<style>.dt{font-size:12px;transform:scaleX(.88);transform-origin:0 0}.dc{font-size:12px;display:inline-block;transform:scaleX(.88);white-space:nowrap;line-height:14px}</style>
<div class="t dt" style="left:832px;top:176px;line-height:18px;color:#000;">Filter:</div>
<div class="a" style="left:860px;top:174px;width:632px;height:23px;background:#d0d4d4;border:1px solid #8a9090;border-right-color:#f0f0f0;border-bottom-color:#f0f0f0"></div>
<div class="t dt" style="left:863px;top:175px;line-height:18px;color:#000;">scroll</div>
<div class="a" style="left:1497px;top:176px;width:44px;height:19px;background:#e3e4e4;border:1px solid #a8aeae"></div>
<div class="a" style="left:1497px;top:176px;width:44px;height:19px;display:flex;align-items:center;justify-content:center"><span class="dc" style="color:#000">Clear</span></div>
<div class="a" style="left:1547px;top:176px;width:80px;height:19px;background:#e3e4e4;border:1px solid #a8aeae"></div>
<div class="a" style="left:1547px;top:176px;width:80px;height:19px;display:flex;align-items:center;justify-content:center"><span class="dc" style="color:#000">Find shortcut...</span></div>
<div class="t dt" style="left:1636px;top:176px;line-height:18px;color:#000;">Section:</div>
<div class="a" style="left:1679px;top:175px;width:136px;height:20px;background:#e1e3e3;border:1px solid #c0c5c5;border-bottom-color:#a8aeae"></div>
<div class="t dt" style="left:1684px;top:175px;line-height:18px;color:#000;">Main</div>
<svg class="a" style="left:1801px;top:181px" width="11" height="8"><path d="M1 1.5 L5 5.5 L9 1.5" fill="none" stroke="#444" stroke-width="1.3"/></svg>
<div class="a" style="left:832px;top:201px;width:983px;height:553px;background:#dcdfdf;border:1px solid #6e787c"></div>
<div class="a" style="left:833px;top:202px;width:963px;height:25px;background:#fff"></div>
<div class="a" style="left:1073px;top:202px;width:1px;height:25px;background:#e5e5e5"></div>
<div class="a" style="left:1541px;top:202px;width:1px;height:25px;background:#e5e5e5"></div>
<div class="a" style="left:1585px;top:202px;width:1px;height:25px;background:#e5e5e5"></div>
<div class="t dt" style="left:840px;top:207px;line-height:17px;color:#000;">Shortcut</div>
<div class="t dt" style="left:1079px;top:207px;line-height:17px;color:#000;">Description</div>
<div class="t dt" style="left:1547px;top:207px;line-height:17px;color:#000;">State</div>
<svg class="a" style="left:1301px;top:202px" width="11" height="7"><path d="M1 6 L5.5 1.5 L10 6" fill="none" stroke="#666" stroke-width="1"/></svg>
<div class="a" style="left:1796px;top:202px;width:18px;height:551px;background:#f0f0f0"></div>
<div class="a" style="left:1797px;top:522px;width:15px;height:213px;background:#cdcdcd"></div>
<svg class="a" style="left:1799px;top:207px" width="12" height="10"><path d="M2 7.5 L6 3.5 L10 7.5" fill="none" stroke="#444" stroke-width="2.2"/></svg>
<svg class="a" style="left:1799px;top:738px" width="12" height="10"><path d="M2 2.5 L6 6.5 L10 2.5" fill="none" stroke="#444" stroke-width="2.2"/></svg>
<div class="t dt" style="left:1079px;top:228px;line-height:17px;color:#1a1a1a;">Set default mouse modifier action for "Ruler marker/region lanes left drag" to "Hand scroll and r...</div>
<div class="t dt" style="left:1079px;top:245px;line-height:17px;color:#1a1a1a;">Set default mouse modifier action for "Ruler marker/region lanes left drag" to "Hand scroll" (fac...</div>
<div class="t dt" style="left:1079px;top:262px;line-height:17px;color:#1a1a1a;">Set default mouse modifier action for "Ruler marker/region lanes left drag" to "Set edit cursor a...</div>
<div class="t dt" style="left:1079px;top:279px;line-height:17px;color:#1a1a1a;">Set default mouse modifier action for "Ruler marker/region lanes left drag" to "Set edit cursor, h...</div>
<div class="t dt" style="left:1079px;top:296px;line-height:17px;color:#1a1a1a;">Set default mouse modifier action for "Ruler marker/region lanes left drag" to "Set edit cursor, h...</div>
<div class="t dt" style="left:1079px;top:313px;line-height:17px;color:#1a1a1a;">Set default mouse modifier action for "Track left click" to "Restore previous zoom/scroll"</div>
<div class="t dt" style="left:1547px;top:313px;line-height:17px;color:#1a1a1a;">off</div>
<div class="t dt" style="left:1079px;top:330px;line-height:17px;color:#1a1a1a;">Track: Vertical scroll selected tracks into view</div>
<div class="t dt" style="left:840px;top:347px;line-height:17px;color:#1a1a1a;">MultiHorz</div>
<div class="t dt" style="left:1079px;top:347px;line-height:17px;color:#1a1a1a;">View: Adjust horizontal scroll (MIDI CC/OSC only - relative recommended)</div>
<div class="t dt" style="left:840px;top:364px;line-height:17px;color:#1a1a1a;">MultiVert</div>
<div class="t dt" style="left:1079px;top:364px;line-height:17px;color:#1a1a1a;">View: Adjust vertical scroll (MIDI CC/OSC only)</div>
<div class="t dt" style="left:1079px;top:381px;line-height:17px;color:#1a1a1a;">View: Continuous scrolling during playback</div>
<div class="t dt" style="left:1547px;top:381px;line-height:17px;color:#1a1a1a;">off</div>
<div class="t dt" style="left:1079px;top:398px;line-height:17px;color:#1a1a1a;">View: Restore next zoom/scroll position</div>
<div class="t dt" style="left:1079px;top:415px;line-height:17px;color:#1a1a1a;">View: Restore previous zoom/scroll position</div>
<div class="t dt" style="left:840px;top:432px;line-height:17px;color:#1a1a1a;">HorizWheel</div>
<div class="t dt" style="left:1079px;top:432px;line-height:17px;color:#1a1a1a;">View: Scroll horizontally (MIDI CC relative/mousewheel)</div>
<div class="t dt" style="left:840px;top:449px;line-height:17px;color:#1a1a1a;">Shift+Mousewheel</div>
<div class="t dt" style="left:1079px;top:449px;line-height:17px;color:#1a1a1a;">View: Scroll horizontally reversed (MIDI CC relative/mousewheel)</div>
<div class="a" style="left:838px;top:465px;width:748px;height:17px;background:#f0f1f1"></div>
<div class="t dt" style="left:840px;top:466px;line-height:17px;color:#1a1a1a;">Ctrl+Alt+Mousewheel</div>
<div class="t dt" style="left:1079px;top:466px;line-height:17px;color:#1a1a1a;">View: Scroll vertically (MIDI CC relative/mousewheel)</div>
<div class="t dt" style="left:1079px;top:483px;line-height:17px;color:#1a1a1a;">View: Scroll vertically reversed (MIDI CC relative/mousewheel)</div>
<div class="t dt" style="left:840px;top:500px;line-height:17px;color:#1a1a1a;">Alt+Down</div>
<div class="t dt" style="left:1079px;top:500px;line-height:17px;color:#1a1a1a;">View: Scroll view down</div>
<div class="t dt" style="left:1079px;top:517px;line-height:17px;color:#1a1a1a;">View: Scroll view horizontally one page (MIDI CC relative/mousewheel)</div>
<div class="t dt" style="left:1079px;top:534px;line-height:17px;color:#1a1a1a;">View: Scroll view horizontally one page reversed (MIDI CC relative/mousewheel)</div>
<div class="t dt" style="left:840px;top:551px;line-height:17px;color:#1a1a1a;">Alt+Left</div>
<div class="t dt" style="left:1079px;top:551px;line-height:17px;color:#1a1a1a;">View: Scroll view left</div>
<div class="t dt" style="left:840px;top:568px;line-height:17px;color:#1a1a1a;">Alt+Right</div>
<div class="t dt" style="left:1079px;top:568px;line-height:17px;color:#1a1a1a;">View: Scroll view right</div>
<div class="t dt" style="left:840px;top:585px;line-height:17px;color:#1a1a1a;">Alt+Up</div>
<div class="t dt" style="left:1079px;top:585px;line-height:17px;color:#1a1a1a;">View: Scroll view up</div>
<div class="t dt" style="left:1079px;top:602px;line-height:17px;color:#1a1a1a;">View: Scroll view vertically one page (MIDI CC relative/mousewheel)</div>
<div class="t dt" style="left:1079px;top:619px;line-height:17px;color:#1a1a1a;">View: Scroll view vertically one page reversed (MIDI CC relative/mousewheel)</div>
<div class="t dt" style="left:1079px;top:636px;line-height:17px;color:#1a1a1a;">View: Toggle auto-view-scroll during playback</div>
<div class="t dt" style="left:1547px;top:636px;line-height:17px;color:#1a1a1a;">off</div>
<div class="t dt" style="left:1079px;top:653px;line-height:17px;color:#1a1a1a;">View: Toggle auto-view-scroll while recording</div>
<div class="t dt" style="left:1547px;top:653px;line-height:17px;color:#1a1a1a;">on</div>
<div class="t dt" style="left:1079px;top:670px;line-height:17px;color:#1a1a1a;">Xenakios/SWS: Scroll track view down (page)</div>
<div class="t dt" style="left:1079px;top:687px;line-height:17px;color:#1a1a1a;">Xenakios/SWS: Scroll track view to end</div>
<div class="t dt" style="left:1079px;top:704px;line-height:17px;color:#1a1a1a;">Xenakios/SWS: Scroll track view to home</div>
<div class="t dt" style="left:1079px;top:721px;line-height:17px;color:#1a1a1a;">Xenakios/SWS: Scroll track view up (page)</div>
<div class="a" style="left:833px;top:764px;width:173px;height:66px;border:1px solid #f4f6f6;box-shadow:inset 0 0 0 1px #a0a8a8"></div>
<div class="a" style="left:839px;top:758px;width:140px;height:12px;background:#b9c0c0"></div>
<div class="t dt" style="left:841px;top:756px;line-height:17px;color:#000;">Shortcuts for selected action</div>
<div class="a" style="left:838px;top:775px;width:105px;height:49px;background:#dcdfdf;border:1px solid #6e787c"></div>
<div class="t dt" style="left:841px;top:775px;line-height:17px;color:#000;">Ctrl+Alt+Mousewheel</div>
<div class="a" style="left:949px;top:775px;width:51px;height:20px;background:#e3e4e4;border:1px solid #a8aeae"></div>
<div class="a" style="left:949px;top:775px;width:51px;height:20px;display:flex;align-items:center;justify-content:center"><span class="dc" style="color:#000">Add...</span></div>
<div class="a" style="left:949px;top:803px;width:51px;height:19px;background:#ccd0d0;border:1px solid #c4c8c8"></div>
<div class="a" style="left:949px;top:803px;width:51px;height:19px;display:flex;align-items:center;justify-content:center"><span class="dc" style="color:#8a8e8e">Delete</span></div>
<div class="a" style="left:833px;top:842px;width:81px;height:19px;background:#e3e4e4;border:1px solid #a8aeae"></div>
<div class="a" style="left:833px;top:842px;width:81px;height:19px;display:flex;align-items:center;justify-content:center"><span class="dc" style="color:#000">Import/export...</span></div>
<div class="a" style="left:921px;top:842px;width:80px;height:19px;background:#e3e4e4;border:1px solid #a8aeae"></div>
<div class="a" style="left:921px;top:842px;width:80px;height:19px;display:flex;align-items:center;justify-content:center"><span class="dc" style="color:#000">Menu editor...</span></div>
<div class="t dt" style="left:1475px;top:776px;line-height:17px;color:#000">Custom actions:</div>
<div class="a" style="left:1559px;top:774px;width:59px;height:19px;background:#e3e4e4;border:1px solid #a8aeae"></div>
<div class="a" style="left:1559px;top:774px;width:59px;height:19px;display:flex;align-items:center;justify-content:center"><span class="dc" style="color:#000">New...</span></div>
<div class="a" style="left:1625px;top:774px;width:58px;height:19px;background:#ccd0d0;border:1px solid #c4c8c8"></div>
<div class="a" style="left:1625px;top:774px;width:58px;height:19px;display:flex;align-items:center;justify-content:center"><span class="dc" style="color:#8a8e8e">Edit...</span></div>
<div class="a" style="left:1689px;top:774px;width:58px;height:19px;background:#ccd0d0;border:1px solid #c4c8c8"></div>
<div class="a" style="left:1689px;top:774px;width:58px;height:19px;display:flex;align-items:center;justify-content:center"><span class="dc" style="color:#8a8e8e">Delete</span></div>
<div class="a" style="left:1754px;top:774px;width:58px;height:19px;background:#ccd0d0;border:1px solid #c4c8c8"></div>
<div class="a" style="left:1754px;top:774px;width:58px;height:19px;display:flex;align-items:center;justify-content:center"><span class="dc" style="color:#8a8e8e">Copy</span></div>
<div class="t dt" style="left:1502px;top:804px;line-height:17px;color:#000">ReaScript:</div>
<div class="a" style="left:1559px;top:803px;width:59px;height:20px;background:#e3e4e4;border:1px solid #a8aeae"></div>
<div class="a" style="left:1559px;top:803px;width:59px;height:20px;display:flex;align-items:center;justify-content:center"><span class="dc" style="color:#000">New...</span></div>
<div class="a" style="left:1625px;top:803px;width:58px;height:20px;background:#e3e4e4;border:1px solid #a8aeae"></div>
<div class="a" style="left:1625px;top:803px;width:58px;height:20px;display:flex;align-items:center;justify-content:center"><span class="dc" style="color:#000">Load...</span></div>
<div class="a" style="left:1689px;top:803px;width:58px;height:20px;background:#ccd0d0;border:1px solid #c4c8c8"></div>
<div class="a" style="left:1689px;top:803px;width:58px;height:20px;display:flex;align-items:center;justify-content:center"><span class="dc" style="color:#8a8e8e">Edit...</span></div>
<div class="a" style="left:1754px;top:803px;width:58px;height:20px;background:#ccd0d0;border:1px solid #c4c8c8"></div>
<div class="a" style="left:1754px;top:803px;width:58px;height:20px;display:flex;align-items:center;justify-content:center"><span class="dc" style="color:#8a8e8e">Delete</span></div>
<div class="a" style="left:1559px;top:842px;width:81px;height:19px;background:#e3e4e4;border:1px solid #a8aeae"></div>
<div class="a" style="left:1559px;top:842px;width:81px;height:19px;display:flex;align-items:center;justify-content:center"><span class="dc" style="color:#000">Run</span></div>
<div class="a" style="left:1647px;top:842px;width:79px;height:19px;background:#e3e4e4;border:1px solid #a8aeae"></div>
<div class="a" style="left:1647px;top:842px;width:79px;height:19px;display:flex;align-items:center;justify-content:center"><span class="dc" style="color:#000">Run/close</span></div>
<div class="a" style="left:1734px;top:842px;width:79px;height:19px;background:#e3e4e4;border:1px solid #a8aeae"></div>
<div class="a" style="left:1734px;top:842px;width:79px;height:19px;display:flex;align-items:center;justify-content:center"><span class="dc" style="color:#000">Close</span></div>
<div class="a" style="left:1804px;top:141px;width:19px;height:19px;background:#e8e8e8;color:#fff;font-size:12px;text-align:center;line-height:18px">×</div>
<svg class="a" style="left:1783px;top:141px" width="17" height="19"><path d="M4.5 1.5 H13 L11.5 3.5 V8.5 L14.5 11 H3 L6 8.5 V3.5 Z M7.5 11 V16 L8.7 17.5 L10 16 V11" fill="#fff" stroke="#666" stroke-width="0.9"/><path d="M8.5 3 V8" stroke="#666" stroke-width="1"/></svg>
</body></html>
